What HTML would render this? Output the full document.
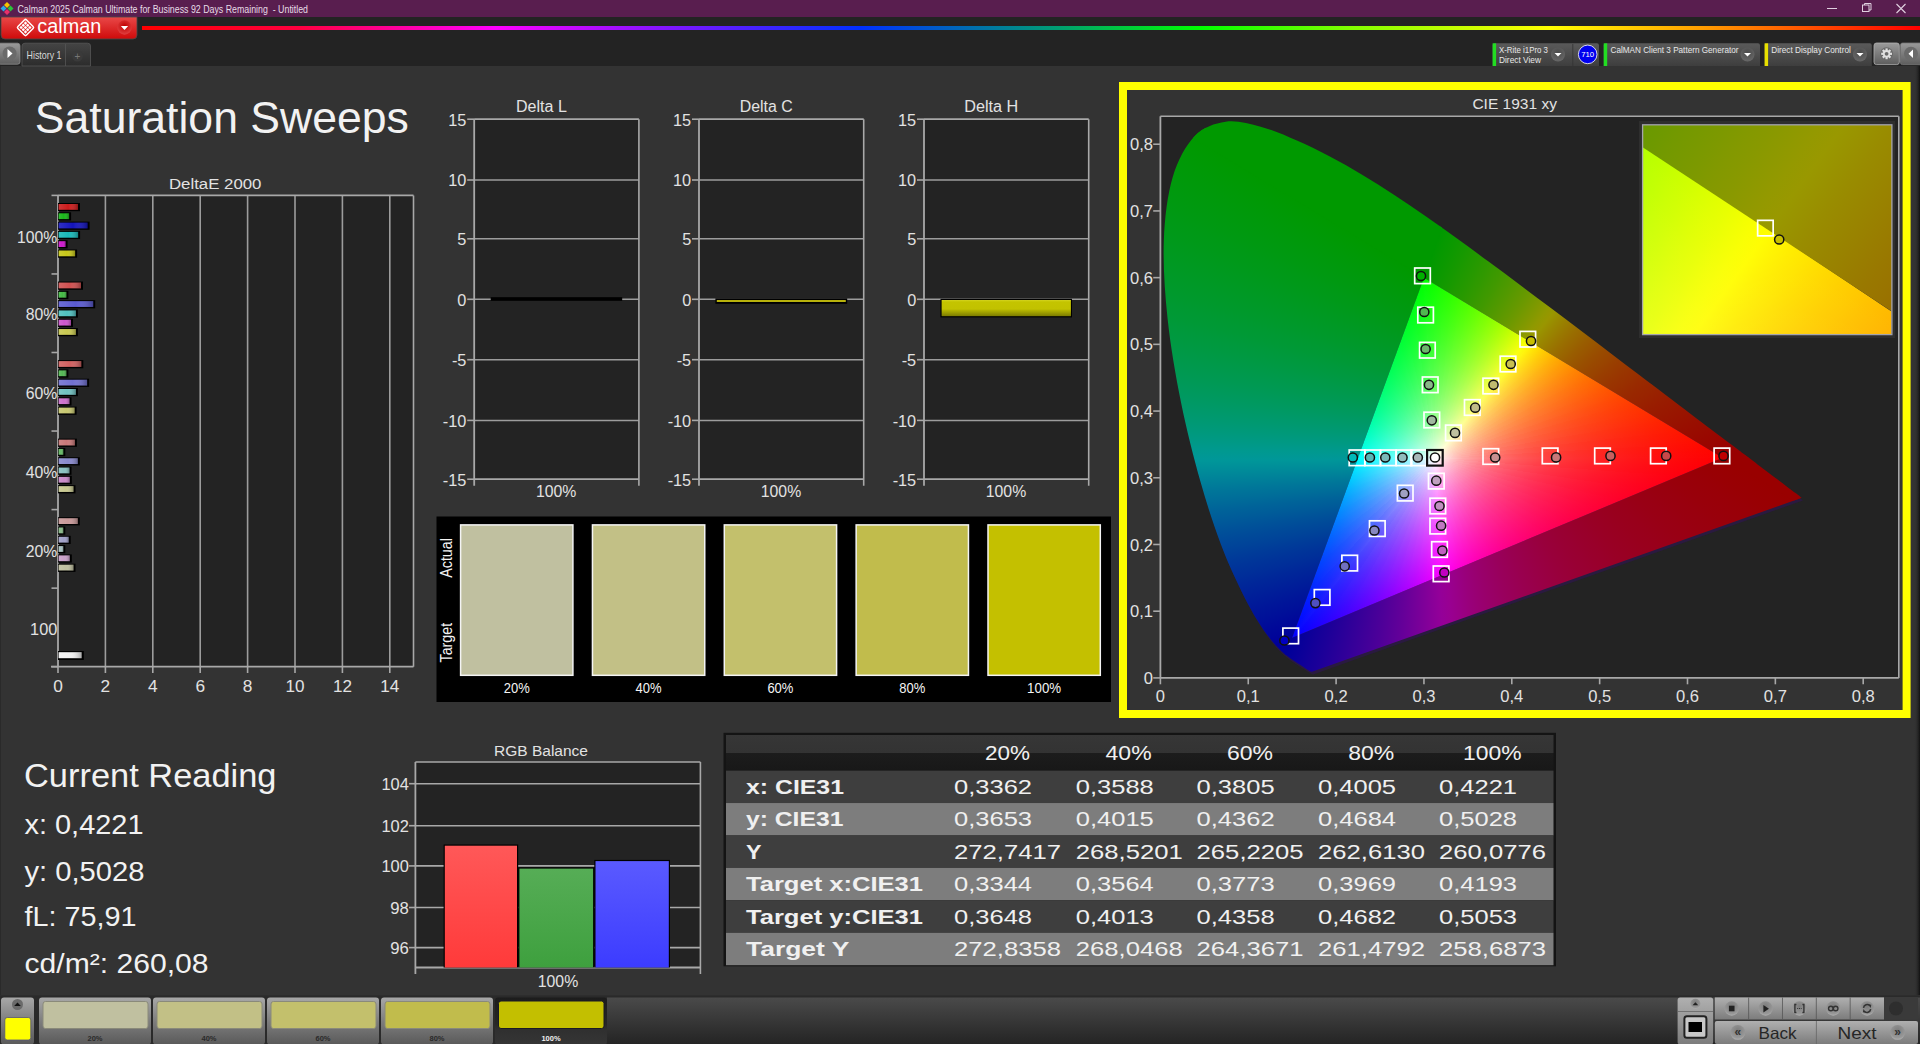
<!DOCTYPE html>
<html><head><meta charset="utf-8"><style>
html,body{margin:0;padding:0;background:#333;overflow:hidden;width:1920px;height:1044px;}
svg{display:block;font-family:"Liberation Sans", sans-serif;}
</style></head><body>
<svg width="1920" height="1044" viewBox="0 0 1920 1044">
<defs>
<linearGradient id="gRed" x1="0" y1="0" x2="0" y2="1"><stop offset="0" stop-color="#e94848"/><stop offset="1" stop-color="#cf0a0a"/></linearGradient>
<radialGradient id="gDd" cx="0.5" cy="0.4" r="0.6"><stop offset="0" stop-color="#c00000"/><stop offset="1" stop-color="#e04040"/></radialGradient>
<linearGradient id="gRain" x1="142" y1="0" x2="1920" y2="0" gradientUnits="userSpaceOnUse"><stop offset="0" stop-color="#ff0000"/><stop offset="0.089" stop-color="#ff0040"/><stop offset="0.199" stop-color="#ff00ff"/><stop offset="0.269" stop-color="#a010ff"/><stop offset="0.404" stop-color="#0030ff"/><stop offset="0.516" stop-color="#00a070"/><stop offset="0.595" stop-color="#00ff00"/><stop offset="0.679" stop-color="#80ff00"/><stop offset="0.792" stop-color="#ffff00"/><stop offset="0.876" stop-color="#ffa000"/><stop offset="1" stop-color="#ff0000"/></linearGradient>
<linearGradient id="gBtn" x1="0" y1="0" x2="0" y2="1"><stop offset="0" stop-color="#9a9a9a"/><stop offset="1" stop-color="#5e5e5e"/></linearGradient>
<linearGradient id="gTab" x1="0" y1="0" x2="0" y2="1"><stop offset="0" stop-color="#444"/><stop offset="1" stop-color="#2c2c2c"/></linearGradient>
<linearGradient id="gWid" x1="0" y1="0" x2="0" y2="1"><stop offset="0" stop-color="#5a5a5a"/><stop offset="1" stop-color="#3e3e3e"/></linearGradient>
<radialGradient id="gArr" cx="0.5" cy="0.35" r="0.7"><stop offset="0" stop-color="#4a4a4a"/><stop offset="1" stop-color="#6a6a6a"/></radialGradient>
<linearGradient id="gBarSh" x1="0" y1="0" x2="1" y2="0"><stop offset="0" stop-color="#fff" stop-opacity="0.12"/><stop offset="0.5" stop-color="#fff" stop-opacity="0"/><stop offset="1" stop-color="#000" stop-opacity="0.3"/></linearGradient>
<linearGradient id="gYelBar" x1="0" y1="0" x2="0" y2="1"><stop offset="0" stop-color="#d4d420"/><stop offset="0.12" stop-color="#c4c400"/><stop offset="0.55" stop-color="#c2c200"/><stop offset="1" stop-color="#7c7c00"/></linearGradient>
<clipPath id="cHS"><path d="M1312.03 671.82 C1311.85 671.78 1311.31 671.73 1310.97 671.62 C1310.64 671.52 1310.37 671.37 1310.01 671.17 C1309.64 670.98 1309.28 670.77 1308.78 670.47 C1308.28 670.17 1307.68 669.8 1307.02 669.38 C1306.36 668.95 1305.67 668.46 1304.83 667.9 C1303.98 667.34 1303.07 666.76 1301.93 666.04 C1300.78 665.31 1299.45 664.49 1297.97 663.53 C1296.49 662.58 1294.9 661.61 1293.05 660.32 C1291.21 659.04 1289.17 657.67 1286.9 655.83 C1284.63 653.99 1282.35 652.29 1279.44 649.28 C1276.52 646.27 1273.21 642.8 1269.42 637.79 C1265.63 632.77 1261.49 627.23 1256.68 619.17 C1251.88 611.1 1246.6 601.9 1240.61 589.38 C1234.62 576.85 1227.47 562.06 1220.75 544.01 C1214.03 525.97 1206.9 504.68 1200.28 481.11 C1193.67 457.53 1186.49 429.65 1181.04 402.59 C1175.6 375.53 1170.47 345.65 1167.6 318.73 C1164.73 291.82 1162.99 264.63 1163.83 241.08 C1164.66 217.53 1167.49 194.92 1172.61 177.44 C1177.74 159.96 1185.73 145.51 1194.57 136.21 C1203.42 126.92 1214.65 123.25 1225.67 121.67 C1236.7 120.09 1248.95 123.64 1260.72 126.74 C1272.5 129.84 1284.78 135.33 1296.3 140.28 C1307.83 145.24 1318.9 150.76 1329.86 156.49 C1340.83 162.23 1351.43 168.34 1362.1 174.71 C1372.78 181.08 1383.36 187.83 1393.91 194.72 C1404.45 201.61 1414.89 208.8 1425.36 216.07 C1435.82 223.34 1446.25 230.81 1456.72 238.35 C1467.19 245.89 1477.71 253.59 1488.17 261.3 C1498.62 269 1509.05 276.82 1519.44 284.58 C1529.84 292.34 1540.28 300.14 1550.54 307.86 C1560.81 315.58 1571.01 323.3 1581.03 330.87 C1591.04 338.45 1600.97 345.97 1610.63 353.29 C1620.29 360.61 1629.83 367.83 1639.01 374.77 C1648.19 381.71 1657.21 388.48 1665.71 394.92 C1674.22 401.35 1682.46 407.65 1690.05 413.39 C1697.63 419.14 1704.59 424.39 1711.22 429.41 C1717.85 434.42 1724.16 439.2 1729.84 443.48 C1735.52 447.76 1740.63 451.56 1745.31 455.09 C1749.98 458.61 1754.1 461.77 1757.87 464.63 C1761.63 467.49 1764.88 469.96 1767.88 472.23 C1770.88 474.5 1773.48 476.42 1775.88 478.24 C1778.28 480.05 1780.33 481.62 1782.29 483.11 C1784.25 484.6 1786.02 485.94 1787.65 487.18 C1789.27 488.41 1790.72 489.52 1792.04 490.51 C1793.36 491.5 1794.53 492.35 1795.56 493.11 C1796.58 493.88 1797.41 494.53 1798.19 495.11 C1798.97 495.7 1799.63 496.2 1800.21 496.65 C1800.8 497.09 1801.46 497.59 1801.7 497.78 Z"/></clipPath>
<linearGradient id="gLeft" x1="0" y1="120" x2="0" y2="676" gradientUnits="userSpaceOnUse"><stop offset="0" stop-color="#009900"/><stop offset="0.38" stop-color="#009a00"/><stop offset="0.47" stop-color="#00963c"/><stop offset="0.54" stop-color="#009262"/><stop offset="0.6" stop-color="#009486"/><stop offset="0.62" stop-color="#008d8d"/><stop offset="0.67" stop-color="#006c92"/><stop offset="0.73" stop-color="#004c98"/><stop offset="0.8" stop-color="#0028a0"/><stop offset="0.88" stop-color="#0010a0"/><stop offset="0.96" stop-color="#0c00a0"/><stop offset="1" stop-color="#1800a0"/></linearGradient>
<linearGradient id="gUp" x1="1423.95" y1="277.64" x2="1722.64" y2="457.76" gradientUnits="userSpaceOnUse"><stop offset="0" stop-color="#009900"/><stop offset="0.1" stop-color="#1a9800"/><stop offset="0.25" stop-color="#5a9200"/><stop offset="0.36" stop-color="#848600"/><stop offset="0.47" stop-color="#945800"/><stop offset="0.6" stop-color="#983400"/><stop offset="0.8" stop-color="#9a1000"/><stop offset="1" stop-color="#990000"/></linearGradient>
<linearGradient id="gDn" x1="1292.18" y1="637.87" x2="1722.64" y2="457.76" gradientUnits="userSpaceOnUse"><stop offset="0" stop-color="#1a009c"/><stop offset="0.2" stop-color="#4000a0"/><stop offset="0.4" stop-color="#78009a"/><stop offset="0.55" stop-color="#980078"/><stop offset="0.7" stop-color="#990040"/><stop offset="0.85" stop-color="#990018"/><stop offset="1" stop-color="#990000"/></linearGradient>
<clipPath id="cTri"><path d="M1722.64 457.76 L1423.95 277.64 L1292.18 637.87 Z"/></clipPath>
<linearGradient id="gw0" x1="1435.11" y1="458.42" x2="1512.08" y2="330.78" gradientUnits="userSpaceOnUse"><stop offset="0" stop-color="#fff" stop-opacity="1.000"/><stop offset="0.1" stop-color="#fff" stop-opacity="0.666"/><stop offset="0.2" stop-color="#fff" stop-opacity="0.469"/><stop offset="0.3" stop-color="#fff" stop-opacity="0.340"/><stop offset="0.4" stop-color="#fff" stop-opacity="0.249"/><stop offset="0.5" stop-color="#fff" stop-opacity="0.181"/><stop offset="0.6" stop-color="#fff" stop-opacity="0.129"/><stop offset="0.7" stop-color="#fff" stop-opacity="0.087"/><stop offset="0.8" stop-color="#fff" stop-opacity="0.052"/><stop offset="0.9" stop-color="#fff" stop-opacity="0.024"/><stop offset="1" stop-color="#fff" stop-opacity="0.000"/></linearGradient>
<linearGradient id="gw1" x1="1435.11" y1="458.42" x2="1512.08" y2="330.78" gradientUnits="userSpaceOnUse"><stop offset="0" stop-color="#fff" stop-opacity="1.000"/><stop offset="0.1" stop-color="#fff" stop-opacity="0.683"/><stop offset="0.2" stop-color="#fff" stop-opacity="0.489"/><stop offset="0.3" stop-color="#fff" stop-opacity="0.358"/><stop offset="0.4" stop-color="#fff" stop-opacity="0.264"/><stop offset="0.5" stop-color="#fff" stop-opacity="0.193"/><stop offset="0.6" stop-color="#fff" stop-opacity="0.138"/><stop offset="0.7" stop-color="#fff" stop-opacity="0.093"/><stop offset="0.8" stop-color="#fff" stop-opacity="0.057"/><stop offset="0.9" stop-color="#fff" stop-opacity="0.026"/><stop offset="1" stop-color="#fff" stop-opacity="0.000"/></linearGradient>
<linearGradient id="gw2" x1="1435.11" y1="458.42" x2="1512.08" y2="330.78" gradientUnits="userSpaceOnUse"><stop offset="0" stop-color="#fff" stop-opacity="1.000"/><stop offset="0.1" stop-color="#fff" stop-opacity="0.699"/><stop offset="0.2" stop-color="#fff" stop-opacity="0.508"/><stop offset="0.3" stop-color="#fff" stop-opacity="0.376"/><stop offset="0.4" stop-color="#fff" stop-opacity="0.279"/><stop offset="0.5" stop-color="#fff" stop-opacity="0.205"/><stop offset="0.6" stop-color="#fff" stop-opacity="0.147"/><stop offset="0.7" stop-color="#fff" stop-opacity="0.100"/><stop offset="0.8" stop-color="#fff" stop-opacity="0.061"/><stop offset="0.9" stop-color="#fff" stop-opacity="0.028"/><stop offset="1" stop-color="#fff" stop-opacity="0.000"/></linearGradient>
<linearGradient id="gw3" x1="1435.11" y1="458.42" x2="1512.08" y2="330.78" gradientUnits="userSpaceOnUse"><stop offset="0" stop-color="#fff" stop-opacity="1.000"/><stop offset="0.1" stop-color="#fff" stop-opacity="0.713"/><stop offset="0.2" stop-color="#fff" stop-opacity="0.525"/><stop offset="0.3" stop-color="#fff" stop-opacity="0.392"/><stop offset="0.4" stop-color="#fff" stop-opacity="0.293"/><stop offset="0.5" stop-color="#fff" stop-opacity="0.216"/><stop offset="0.6" stop-color="#fff" stop-opacity="0.156"/><stop offset="0.7" stop-color="#fff" stop-opacity="0.106"/><stop offset="0.8" stop-color="#fff" stop-opacity="0.065"/><stop offset="0.9" stop-color="#fff" stop-opacity="0.030"/><stop offset="1" stop-color="#fff" stop-opacity="0.000"/></linearGradient>
<linearGradient id="gw4" x1="1435.11" y1="458.42" x2="1512.08" y2="330.78" gradientUnits="userSpaceOnUse"><stop offset="0" stop-color="#fff" stop-opacity="1.000"/><stop offset="0.1" stop-color="#fff" stop-opacity="0.726"/><stop offset="0.2" stop-color="#fff" stop-opacity="0.541"/><stop offset="0.3" stop-color="#fff" stop-opacity="0.408"/><stop offset="0.4" stop-color="#fff" stop-opacity="0.307"/><stop offset="0.5" stop-color="#fff" stop-opacity="0.228"/><stop offset="0.6" stop-color="#fff" stop-opacity="0.164"/><stop offset="0.7" stop-color="#fff" stop-opacity="0.112"/><stop offset="0.8" stop-color="#fff" stop-opacity="0.069"/><stop offset="0.9" stop-color="#fff" stop-opacity="0.032"/><stop offset="1" stop-color="#fff" stop-opacity="0.000"/></linearGradient>
<linearGradient id="gw5" x1="1435.11" y1="458.42" x2="1512.08" y2="330.78" gradientUnits="userSpaceOnUse"><stop offset="0" stop-color="#fff" stop-opacity="1.000"/><stop offset="0.1" stop-color="#fff" stop-opacity="0.739"/><stop offset="0.2" stop-color="#fff" stop-opacity="0.557"/><stop offset="0.3" stop-color="#fff" stop-opacity="0.423"/><stop offset="0.4" stop-color="#fff" stop-opacity="0.320"/><stop offset="0.5" stop-color="#fff" stop-opacity="0.239"/><stop offset="0.6" stop-color="#fff" stop-opacity="0.173"/><stop offset="0.7" stop-color="#fff" stop-opacity="0.119"/><stop offset="0.8" stop-color="#fff" stop-opacity="0.073"/><stop offset="0.9" stop-color="#fff" stop-opacity="0.034"/><stop offset="1" stop-color="#fff" stop-opacity="0.000"/></linearGradient>
<linearGradient id="gw6" x1="1435.11" y1="458.42" x2="1512.08" y2="330.78" gradientUnits="userSpaceOnUse"><stop offset="0" stop-color="#fff" stop-opacity="1.000"/><stop offset="0.1" stop-color="#fff" stop-opacity="0.750"/><stop offset="0.2" stop-color="#fff" stop-opacity="0.572"/><stop offset="0.3" stop-color="#fff" stop-opacity="0.438"/><stop offset="0.4" stop-color="#fff" stop-opacity="0.334"/><stop offset="0.5" stop-color="#fff" stop-opacity="0.250"/><stop offset="0.6" stop-color="#fff" stop-opacity="0.182"/><stop offset="0.7" stop-color="#fff" stop-opacity="0.125"/><stop offset="0.8" stop-color="#fff" stop-opacity="0.077"/><stop offset="0.9" stop-color="#fff" stop-opacity="0.036"/><stop offset="1" stop-color="#fff" stop-opacity="0.000"/></linearGradient>
<linearGradient id="gw7" x1="1435.11" y1="458.42" x2="1512.08" y2="330.78" gradientUnits="userSpaceOnUse"><stop offset="0" stop-color="#fff" stop-opacity="1.000"/><stop offset="0.1" stop-color="#fff" stop-opacity="0.761"/><stop offset="0.2" stop-color="#fff" stop-opacity="0.586"/><stop offset="0.3" stop-color="#fff" stop-opacity="0.452"/><stop offset="0.4" stop-color="#fff" stop-opacity="0.347"/><stop offset="0.5" stop-color="#fff" stop-opacity="0.261"/><stop offset="0.6" stop-color="#fff" stop-opacity="0.191"/><stop offset="0.7" stop-color="#fff" stop-opacity="0.132"/><stop offset="0.8" stop-color="#fff" stop-opacity="0.081"/><stop offset="0.9" stop-color="#fff" stop-opacity="0.038"/><stop offset="1" stop-color="#fff" stop-opacity="0.000"/></linearGradient>
<linearGradient id="gw8" x1="1435.11" y1="458.42" x2="1512.08" y2="330.78" gradientUnits="userSpaceOnUse"><stop offset="0" stop-color="#fff" stop-opacity="1.000"/><stop offset="0.1" stop-color="#fff" stop-opacity="0.772"/><stop offset="0.2" stop-color="#fff" stop-opacity="0.600"/><stop offset="0.3" stop-color="#fff" stop-opacity="0.467"/><stop offset="0.4" stop-color="#fff" stop-opacity="0.360"/><stop offset="0.5" stop-color="#fff" stop-opacity="0.273"/><stop offset="0.6" stop-color="#fff" stop-opacity="0.200"/><stop offset="0.7" stop-color="#fff" stop-opacity="0.139"/><stop offset="0.8" stop-color="#fff" stop-opacity="0.086"/><stop offset="0.9" stop-color="#fff" stop-opacity="0.040"/><stop offset="1" stop-color="#fff" stop-opacity="0.000"/></linearGradient>
<linearGradient id="gw9" x1="1435.11" y1="458.42" x2="1512.08" y2="330.78" gradientUnits="userSpaceOnUse"><stop offset="0" stop-color="#fff" stop-opacity="1.000"/><stop offset="0.1" stop-color="#fff" stop-opacity="0.782"/><stop offset="0.2" stop-color="#fff" stop-opacity="0.614"/><stop offset="0.3" stop-color="#fff" stop-opacity="0.481"/><stop offset="0.4" stop-color="#fff" stop-opacity="0.373"/><stop offset="0.5" stop-color="#fff" stop-opacity="0.284"/><stop offset="0.6" stop-color="#fff" stop-opacity="0.209"/><stop offset="0.7" stop-color="#fff" stop-opacity="0.145"/><stop offset="0.8" stop-color="#fff" stop-opacity="0.090"/><stop offset="0.9" stop-color="#fff" stop-opacity="0.042"/><stop offset="1" stop-color="#fff" stop-opacity="0.000"/></linearGradient>
<linearGradient id="gw10" x1="1435.11" y1="458.42" x2="1512.08" y2="330.78" gradientUnits="userSpaceOnUse"><stop offset="0" stop-color="#fff" stop-opacity="1.000"/><stop offset="0.1" stop-color="#fff" stop-opacity="0.791"/><stop offset="0.2" stop-color="#fff" stop-opacity="0.627"/><stop offset="0.3" stop-color="#fff" stop-opacity="0.495"/><stop offset="0.4" stop-color="#fff" stop-opacity="0.387"/><stop offset="0.5" stop-color="#fff" stop-opacity="0.296"/><stop offset="0.6" stop-color="#fff" stop-opacity="0.219"/><stop offset="0.7" stop-color="#fff" stop-opacity="0.153"/><stop offset="0.8" stop-color="#fff" stop-opacity="0.095"/><stop offset="0.9" stop-color="#fff" stop-opacity="0.045"/><stop offset="1" stop-color="#fff" stop-opacity="0.000"/></linearGradient>
<linearGradient id="gw11" x1="1435.11" y1="458.42" x2="1512.08" y2="330.78" gradientUnits="userSpaceOnUse"><stop offset="0" stop-color="#fff" stop-opacity="1.000"/><stop offset="0.1" stop-color="#fff" stop-opacity="0.800"/><stop offset="0.2" stop-color="#fff" stop-opacity="0.641"/><stop offset="0.3" stop-color="#fff" stop-opacity="0.510"/><stop offset="0.4" stop-color="#fff" stop-opacity="0.400"/><stop offset="0.5" stop-color="#fff" stop-opacity="0.308"/><stop offset="0.6" stop-color="#fff" stop-opacity="0.229"/><stop offset="0.7" stop-color="#fff" stop-opacity="0.160"/><stop offset="0.8" stop-color="#fff" stop-opacity="0.100"/><stop offset="0.9" stop-color="#fff" stop-opacity="0.047"/><stop offset="1" stop-color="#fff" stop-opacity="0.000"/></linearGradient>
<linearGradient id="gw12" x1="1435.11" y1="458.42" x2="1512.08" y2="330.78" gradientUnits="userSpaceOnUse"><stop offset="0" stop-color="#fff" stop-opacity="1.000"/><stop offset="0.1" stop-color="#fff" stop-opacity="0.810"/><stop offset="0.2" stop-color="#fff" stop-opacity="0.654"/><stop offset="0.3" stop-color="#fff" stop-opacity="0.524"/><stop offset="0.4" stop-color="#fff" stop-opacity="0.414"/><stop offset="0.5" stop-color="#fff" stop-opacity="0.321"/><stop offset="0.6" stop-color="#fff" stop-opacity="0.239"/><stop offset="0.7" stop-color="#fff" stop-opacity="0.168"/><stop offset="0.8" stop-color="#fff" stop-opacity="0.106"/><stop offset="0.9" stop-color="#fff" stop-opacity="0.050"/><stop offset="1" stop-color="#fff" stop-opacity="0.000"/></linearGradient>
<linearGradient id="gw13" x1="1435.11" y1="458.42" x2="1512.08" y2="330.78" gradientUnits="userSpaceOnUse"><stop offset="0" stop-color="#fff" stop-opacity="1.000"/><stop offset="0.1" stop-color="#fff" stop-opacity="0.818"/><stop offset="0.2" stop-color="#fff" stop-opacity="0.667"/><stop offset="0.3" stop-color="#fff" stop-opacity="0.539"/><stop offset="0.4" stop-color="#fff" stop-opacity="0.429"/><stop offset="0.5" stop-color="#fff" stop-opacity="0.334"/><stop offset="0.6" stop-color="#fff" stop-opacity="0.250"/><stop offset="0.7" stop-color="#fff" stop-opacity="0.177"/><stop offset="0.8" stop-color="#fff" stop-opacity="0.111"/><stop offset="0.9" stop-color="#fff" stop-opacity="0.053"/><stop offset="1" stop-color="#fff" stop-opacity="0.000"/></linearGradient>
<linearGradient id="gw14" x1="1435.11" y1="458.42" x2="1512.08" y2="330.78" gradientUnits="userSpaceOnUse"><stop offset="0" stop-color="#fff" stop-opacity="1.000"/><stop offset="0.1" stop-color="#fff" stop-opacity="0.827"/><stop offset="0.2" stop-color="#fff" stop-opacity="0.680"/><stop offset="0.3" stop-color="#fff" stop-opacity="0.554"/><stop offset="0.4" stop-color="#fff" stop-opacity="0.444"/><stop offset="0.5" stop-color="#fff" stop-opacity="0.347"/><stop offset="0.6" stop-color="#fff" stop-opacity="0.262"/><stop offset="0.7" stop-color="#fff" stop-opacity="0.186"/><stop offset="0.8" stop-color="#fff" stop-opacity="0.117"/><stop offset="0.9" stop-color="#fff" stop-opacity="0.056"/><stop offset="1" stop-color="#fff" stop-opacity="0.000"/></linearGradient>
<linearGradient id="gw15" x1="1435.11" y1="458.42" x2="1512.08" y2="330.78" gradientUnits="userSpaceOnUse"><stop offset="0" stop-color="#fff" stop-opacity="1.000"/><stop offset="0.1" stop-color="#fff" stop-opacity="0.836"/><stop offset="0.2" stop-color="#fff" stop-opacity="0.694"/><stop offset="0.3" stop-color="#fff" stop-opacity="0.569"/><stop offset="0.4" stop-color="#fff" stop-opacity="0.459"/><stop offset="0.5" stop-color="#fff" stop-opacity="0.362"/><stop offset="0.6" stop-color="#fff" stop-opacity="0.274"/><stop offset="0.7" stop-color="#fff" stop-opacity="0.195"/><stop offset="0.8" stop-color="#fff" stop-opacity="0.124"/><stop offset="0.9" stop-color="#fff" stop-opacity="0.059"/><stop offset="1" stop-color="#fff" stop-opacity="0.000"/></linearGradient>
<linearGradient id="gw16" x1="1435.11" y1="458.42" x2="1512.08" y2="330.78" gradientUnits="userSpaceOnUse"><stop offset="0" stop-color="#fff" stop-opacity="1.000"/><stop offset="0.1" stop-color="#fff" stop-opacity="0.845"/><stop offset="0.2" stop-color="#fff" stop-opacity="0.707"/><stop offset="0.3" stop-color="#fff" stop-opacity="0.585"/><stop offset="0.4" stop-color="#fff" stop-opacity="0.475"/><stop offset="0.5" stop-color="#fff" stop-opacity="0.377"/><stop offset="0.6" stop-color="#fff" stop-opacity="0.287"/><stop offset="0.7" stop-color="#fff" stop-opacity="0.206"/><stop offset="0.8" stop-color="#fff" stop-opacity="0.131"/><stop offset="0.9" stop-color="#fff" stop-opacity="0.063"/><stop offset="1" stop-color="#fff" stop-opacity="0.000"/></linearGradient>
<linearGradient id="gw17" x1="1435.11" y1="458.42" x2="1512.08" y2="330.78" gradientUnits="userSpaceOnUse"><stop offset="0" stop-color="#fff" stop-opacity="1.000"/><stop offset="0.1" stop-color="#fff" stop-opacity="0.840"/><stop offset="0.2" stop-color="#fff" stop-opacity="0.700"/><stop offset="0.3" stop-color="#fff" stop-opacity="0.576"/><stop offset="0.4" stop-color="#fff" stop-opacity="0.466"/><stop offset="0.5" stop-color="#fff" stop-opacity="0.368"/><stop offset="0.6" stop-color="#fff" stop-opacity="0.280"/><stop offset="0.7" stop-color="#fff" stop-opacity="0.200"/><stop offset="0.8" stop-color="#fff" stop-opacity="0.127"/><stop offset="0.9" stop-color="#fff" stop-opacity="0.061"/><stop offset="1" stop-color="#fff" stop-opacity="0.000"/></linearGradient>
<linearGradient id="gw18" x1="1435.11" y1="458.42" x2="1512.08" y2="330.78" gradientUnits="userSpaceOnUse"><stop offset="0" stop-color="#fff" stop-opacity="1.000"/><stop offset="0.1" stop-color="#fff" stop-opacity="0.835"/><stop offset="0.2" stop-color="#fff" stop-opacity="0.693"/><stop offset="0.3" stop-color="#fff" stop-opacity="0.568"/><stop offset="0.4" stop-color="#fff" stop-opacity="0.458"/><stop offset="0.5" stop-color="#fff" stop-opacity="0.360"/><stop offset="0.6" stop-color="#fff" stop-opacity="0.273"/><stop offset="0.7" stop-color="#fff" stop-opacity="0.194"/><stop offset="0.8" stop-color="#fff" stop-opacity="0.123"/><stop offset="0.9" stop-color="#fff" stop-opacity="0.059"/><stop offset="1" stop-color="#fff" stop-opacity="0.000"/></linearGradient>
<linearGradient id="gw19" x1="1435.11" y1="458.42" x2="1512.08" y2="330.78" gradientUnits="userSpaceOnUse"><stop offset="0" stop-color="#fff" stop-opacity="1.000"/><stop offset="0.1" stop-color="#fff" stop-opacity="0.831"/><stop offset="0.2" stop-color="#fff" stop-opacity="0.686"/><stop offset="0.3" stop-color="#fff" stop-opacity="0.560"/><stop offset="0.4" stop-color="#fff" stop-opacity="0.450"/><stop offset="0.5" stop-color="#fff" stop-opacity="0.353"/><stop offset="0.6" stop-color="#fff" stop-opacity="0.267"/><stop offset="0.7" stop-color="#fff" stop-opacity="0.189"/><stop offset="0.8" stop-color="#fff" stop-opacity="0.120"/><stop offset="0.9" stop-color="#fff" stop-opacity="0.057"/><stop offset="1" stop-color="#fff" stop-opacity="0.000"/></linearGradient>
<linearGradient id="gw20" x1="1435.11" y1="458.42" x2="1512.08" y2="330.78" gradientUnits="userSpaceOnUse"><stop offset="0" stop-color="#fff" stop-opacity="1.000"/><stop offset="0.1" stop-color="#fff" stop-opacity="0.826"/><stop offset="0.2" stop-color="#fff" stop-opacity="0.679"/><stop offset="0.3" stop-color="#fff" stop-opacity="0.552"/><stop offset="0.4" stop-color="#fff" stop-opacity="0.442"/><stop offset="0.5" stop-color="#fff" stop-opacity="0.346"/><stop offset="0.6" stop-color="#fff" stop-opacity="0.260"/><stop offset="0.7" stop-color="#fff" stop-opacity="0.185"/><stop offset="0.8" stop-color="#fff" stop-opacity="0.117"/><stop offset="0.9" stop-color="#fff" stop-opacity="0.055"/><stop offset="1" stop-color="#fff" stop-opacity="0.000"/></linearGradient>
<linearGradient id="gw21" x1="1435.11" y1="458.42" x2="1512.08" y2="330.78" gradientUnits="userSpaceOnUse"><stop offset="0" stop-color="#fff" stop-opacity="1.000"/><stop offset="0.1" stop-color="#fff" stop-opacity="0.822"/><stop offset="0.2" stop-color="#fff" stop-opacity="0.672"/><stop offset="0.3" stop-color="#fff" stop-opacity="0.544"/><stop offset="0.4" stop-color="#fff" stop-opacity="0.434"/><stop offset="0.5" stop-color="#fff" stop-opacity="0.339"/><stop offset="0.6" stop-color="#fff" stop-opacity="0.254"/><stop offset="0.7" stop-color="#fff" stop-opacity="0.180"/><stop offset="0.8" stop-color="#fff" stop-opacity="0.113"/><stop offset="0.9" stop-color="#fff" stop-opacity="0.054"/><stop offset="1" stop-color="#fff" stop-opacity="0.000"/></linearGradient>
<linearGradient id="gw22" x1="1435.11" y1="458.42" x2="1512.08" y2="330.78" gradientUnits="userSpaceOnUse"><stop offset="0" stop-color="#fff" stop-opacity="1.000"/><stop offset="0.1" stop-color="#fff" stop-opacity="0.817"/><stop offset="0.2" stop-color="#fff" stop-opacity="0.665"/><stop offset="0.3" stop-color="#fff" stop-opacity="0.537"/><stop offset="0.4" stop-color="#fff" stop-opacity="0.427"/><stop offset="0.5" stop-color="#fff" stop-opacity="0.332"/><stop offset="0.6" stop-color="#fff" stop-opacity="0.249"/><stop offset="0.7" stop-color="#fff" stop-opacity="0.175"/><stop offset="0.8" stop-color="#fff" stop-opacity="0.110"/><stop offset="0.9" stop-color="#fff" stop-opacity="0.052"/><stop offset="1" stop-color="#fff" stop-opacity="0.000"/></linearGradient>
<linearGradient id="gw23" x1="1435.11" y1="458.42" x2="1512.08" y2="330.78" gradientUnits="userSpaceOnUse"><stop offset="0" stop-color="#fff" stop-opacity="1.000"/><stop offset="0.1" stop-color="#fff" stop-opacity="0.812"/><stop offset="0.2" stop-color="#fff" stop-opacity="0.658"/><stop offset="0.3" stop-color="#fff" stop-opacity="0.529"/><stop offset="0.4" stop-color="#fff" stop-opacity="0.419"/><stop offset="0.5" stop-color="#fff" stop-opacity="0.325"/><stop offset="0.6" stop-color="#fff" stop-opacity="0.243"/><stop offset="0.7" stop-color="#fff" stop-opacity="0.171"/><stop offset="0.8" stop-color="#fff" stop-opacity="0.107"/><stop offset="0.9" stop-color="#fff" stop-opacity="0.051"/><stop offset="1" stop-color="#fff" stop-opacity="0.000"/></linearGradient>
<linearGradient id="gw24" x1="1435.11" y1="458.42" x2="1512.08" y2="330.78" gradientUnits="userSpaceOnUse"><stop offset="0" stop-color="#fff" stop-opacity="1.000"/><stop offset="0.1" stop-color="#fff" stop-opacity="0.808"/><stop offset="0.2" stop-color="#fff" stop-opacity="0.651"/><stop offset="0.3" stop-color="#fff" stop-opacity="0.521"/><stop offset="0.4" stop-color="#fff" stop-opacity="0.412"/><stop offset="0.5" stop-color="#fff" stop-opacity="0.318"/><stop offset="0.6" stop-color="#fff" stop-opacity="0.237"/><stop offset="0.7" stop-color="#fff" stop-opacity="0.167"/><stop offset="0.8" stop-color="#fff" stop-opacity="0.105"/><stop offset="0.9" stop-color="#fff" stop-opacity="0.049"/><stop offset="1" stop-color="#fff" stop-opacity="0.000"/></linearGradient>
<linearGradient id="gw25" x1="1435.11" y1="458.42" x2="1512.08" y2="330.78" gradientUnits="userSpaceOnUse"><stop offset="0" stop-color="#fff" stop-opacity="1.000"/><stop offset="0.1" stop-color="#fff" stop-opacity="0.803"/><stop offset="0.2" stop-color="#fff" stop-opacity="0.644"/><stop offset="0.3" stop-color="#fff" stop-opacity="0.514"/><stop offset="0.4" stop-color="#fff" stop-opacity="0.405"/><stop offset="0.5" stop-color="#fff" stop-opacity="0.312"/><stop offset="0.6" stop-color="#fff" stop-opacity="0.232"/><stop offset="0.7" stop-color="#fff" stop-opacity="0.163"/><stop offset="0.8" stop-color="#fff" stop-opacity="0.102"/><stop offset="0.9" stop-color="#fff" stop-opacity="0.048"/><stop offset="1" stop-color="#fff" stop-opacity="0.000"/></linearGradient>
<linearGradient id="gw26" x1="1435.11" y1="458.42" x2="1512.08" y2="330.78" gradientUnits="userSpaceOnUse"><stop offset="0" stop-color="#fff" stop-opacity="1.000"/><stop offset="0.1" stop-color="#fff" stop-opacity="0.798"/><stop offset="0.2" stop-color="#fff" stop-opacity="0.637"/><stop offset="0.3" stop-color="#fff" stop-opacity="0.506"/><stop offset="0.4" stop-color="#fff" stop-opacity="0.397"/><stop offset="0.5" stop-color="#fff" stop-opacity="0.305"/><stop offset="0.6" stop-color="#fff" stop-opacity="0.227"/><stop offset="0.7" stop-color="#fff" stop-opacity="0.158"/><stop offset="0.8" stop-color="#fff" stop-opacity="0.099"/><stop offset="0.9" stop-color="#fff" stop-opacity="0.047"/><stop offset="1" stop-color="#fff" stop-opacity="0.000"/></linearGradient>
<linearGradient id="gw27" x1="1435.11" y1="458.42" x2="1512.08" y2="330.78" gradientUnits="userSpaceOnUse"><stop offset="0" stop-color="#fff" stop-opacity="1.000"/><stop offset="0.1" stop-color="#fff" stop-opacity="0.793"/><stop offset="0.2" stop-color="#fff" stop-opacity="0.630"/><stop offset="0.3" stop-color="#fff" stop-opacity="0.498"/><stop offset="0.4" stop-color="#fff" stop-opacity="0.390"/><stop offset="0.5" stop-color="#fff" stop-opacity="0.299"/><stop offset="0.6" stop-color="#fff" stop-opacity="0.221"/><stop offset="0.7" stop-color="#fff" stop-opacity="0.154"/><stop offset="0.8" stop-color="#fff" stop-opacity="0.096"/><stop offset="0.9" stop-color="#fff" stop-opacity="0.045"/><stop offset="1" stop-color="#fff" stop-opacity="0.000"/></linearGradient>
<linearGradient id="gw28" x1="1435.11" y1="458.42" x2="1512.08" y2="330.78" gradientUnits="userSpaceOnUse"><stop offset="0" stop-color="#fff" stop-opacity="1.000"/><stop offset="0.1" stop-color="#fff" stop-opacity="0.788"/><stop offset="0.2" stop-color="#fff" stop-opacity="0.623"/><stop offset="0.3" stop-color="#fff" stop-opacity="0.490"/><stop offset="0.4" stop-color="#fff" stop-opacity="0.382"/><stop offset="0.5" stop-color="#fff" stop-opacity="0.292"/><stop offset="0.6" stop-color="#fff" stop-opacity="0.216"/><stop offset="0.7" stop-color="#fff" stop-opacity="0.150"/><stop offset="0.8" stop-color="#fff" stop-opacity="0.093"/><stop offset="0.9" stop-color="#fff" stop-opacity="0.044"/><stop offset="1" stop-color="#fff" stop-opacity="0.000"/></linearGradient>
<linearGradient id="gw29" x1="1435.11" y1="458.42" x2="1512.08" y2="330.78" gradientUnits="userSpaceOnUse"><stop offset="0" stop-color="#fff" stop-opacity="1.000"/><stop offset="0.1" stop-color="#fff" stop-opacity="0.782"/><stop offset="0.2" stop-color="#fff" stop-opacity="0.615"/><stop offset="0.3" stop-color="#fff" stop-opacity="0.482"/><stop offset="0.4" stop-color="#fff" stop-opacity="0.374"/><stop offset="0.5" stop-color="#fff" stop-opacity="0.285"/><stop offset="0.6" stop-color="#fff" stop-opacity="0.210"/><stop offset="0.7" stop-color="#fff" stop-opacity="0.146"/><stop offset="0.8" stop-color="#fff" stop-opacity="0.091"/><stop offset="0.9" stop-color="#fff" stop-opacity="0.042"/><stop offset="1" stop-color="#fff" stop-opacity="0.000"/></linearGradient>
<linearGradient id="gw30" x1="1435.11" y1="458.42" x2="1366.94" y2="433.49" gradientUnits="userSpaceOnUse"><stop offset="0" stop-color="#fff" stop-opacity="1.000"/><stop offset="0.1" stop-color="#fff" stop-opacity="0.787"/><stop offset="0.2" stop-color="#fff" stop-opacity="0.621"/><stop offset="0.3" stop-color="#fff" stop-opacity="0.489"/><stop offset="0.4" stop-color="#fff" stop-opacity="0.381"/><stop offset="0.5" stop-color="#fff" stop-opacity="0.291"/><stop offset="0.6" stop-color="#fff" stop-opacity="0.215"/><stop offset="0.7" stop-color="#fff" stop-opacity="0.149"/><stop offset="0.8" stop-color="#fff" stop-opacity="0.093"/><stop offset="0.9" stop-color="#fff" stop-opacity="0.044"/><stop offset="1" stop-color="#fff" stop-opacity="0.000"/></linearGradient>
<linearGradient id="gw31" x1="1435.11" y1="458.42" x2="1366.94" y2="433.49" gradientUnits="userSpaceOnUse"><stop offset="0" stop-color="#fff" stop-opacity="1.000"/><stop offset="0.1" stop-color="#fff" stop-opacity="0.799"/><stop offset="0.2" stop-color="#fff" stop-opacity="0.638"/><stop offset="0.3" stop-color="#fff" stop-opacity="0.507"/><stop offset="0.4" stop-color="#fff" stop-opacity="0.398"/><stop offset="0.5" stop-color="#fff" stop-opacity="0.306"/><stop offset="0.6" stop-color="#fff" stop-opacity="0.227"/><stop offset="0.7" stop-color="#fff" stop-opacity="0.159"/><stop offset="0.8" stop-color="#fff" stop-opacity="0.099"/><stop offset="0.9" stop-color="#fff" stop-opacity="0.047"/><stop offset="1" stop-color="#fff" stop-opacity="0.000"/></linearGradient>
<linearGradient id="gw32" x1="1435.11" y1="458.42" x2="1366.94" y2="433.49" gradientUnits="userSpaceOnUse"><stop offset="0" stop-color="#fff" stop-opacity="1.000"/><stop offset="0.1" stop-color="#fff" stop-opacity="0.808"/><stop offset="0.2" stop-color="#fff" stop-opacity="0.652"/><stop offset="0.3" stop-color="#fff" stop-opacity="0.522"/><stop offset="0.4" stop-color="#fff" stop-opacity="0.413"/><stop offset="0.5" stop-color="#fff" stop-opacity="0.319"/><stop offset="0.6" stop-color="#fff" stop-opacity="0.238"/><stop offset="0.7" stop-color="#fff" stop-opacity="0.167"/><stop offset="0.8" stop-color="#fff" stop-opacity="0.105"/><stop offset="0.9" stop-color="#fff" stop-opacity="0.049"/><stop offset="1" stop-color="#fff" stop-opacity="0.000"/></linearGradient>
<linearGradient id="gw33" x1="1435.11" y1="458.42" x2="1366.94" y2="433.49" gradientUnits="userSpaceOnUse"><stop offset="0" stop-color="#fff" stop-opacity="1.000"/><stop offset="0.1" stop-color="#fff" stop-opacity="0.816"/><stop offset="0.2" stop-color="#fff" stop-opacity="0.663"/><stop offset="0.3" stop-color="#fff" stop-opacity="0.535"/><stop offset="0.4" stop-color="#fff" stop-opacity="0.425"/><stop offset="0.5" stop-color="#fff" stop-opacity="0.330"/><stop offset="0.6" stop-color="#fff" stop-opacity="0.247"/><stop offset="0.7" stop-color="#fff" stop-opacity="0.174"/><stop offset="0.8" stop-color="#fff" stop-opacity="0.110"/><stop offset="0.9" stop-color="#fff" stop-opacity="0.052"/><stop offset="1" stop-color="#fff" stop-opacity="0.000"/></linearGradient>
<linearGradient id="gw34" x1="1435.11" y1="458.42" x2="1366.94" y2="433.49" gradientUnits="userSpaceOnUse"><stop offset="0" stop-color="#fff" stop-opacity="1.000"/><stop offset="0.1" stop-color="#fff" stop-opacity="0.822"/><stop offset="0.2" stop-color="#fff" stop-opacity="0.673"/><stop offset="0.3" stop-color="#fff" stop-opacity="0.546"/><stop offset="0.4" stop-color="#fff" stop-opacity="0.436"/><stop offset="0.5" stop-color="#fff" stop-opacity="0.340"/><stop offset="0.6" stop-color="#fff" stop-opacity="0.256"/><stop offset="0.7" stop-color="#fff" stop-opacity="0.181"/><stop offset="0.8" stop-color="#fff" stop-opacity="0.114"/><stop offset="0.9" stop-color="#fff" stop-opacity="0.054"/><stop offset="1" stop-color="#fff" stop-opacity="0.000"/></linearGradient>
<linearGradient id="gw35" x1="1435.11" y1="458.42" x2="1366.94" y2="433.49" gradientUnits="userSpaceOnUse"><stop offset="0" stop-color="#fff" stop-opacity="1.000"/><stop offset="0.1" stop-color="#fff" stop-opacity="0.828"/><stop offset="0.2" stop-color="#fff" stop-opacity="0.682"/><stop offset="0.3" stop-color="#fff" stop-opacity="0.555"/><stop offset="0.4" stop-color="#fff" stop-opacity="0.445"/><stop offset="0.5" stop-color="#fff" stop-opacity="0.349"/><stop offset="0.6" stop-color="#fff" stop-opacity="0.263"/><stop offset="0.7" stop-color="#fff" stop-opacity="0.187"/><stop offset="0.8" stop-color="#fff" stop-opacity="0.118"/><stop offset="0.9" stop-color="#fff" stop-opacity="0.056"/><stop offset="1" stop-color="#fff" stop-opacity="0.000"/></linearGradient>
<linearGradient id="gw36" x1="1435.11" y1="458.42" x2="1366.94" y2="433.49" gradientUnits="userSpaceOnUse"><stop offset="0" stop-color="#fff" stop-opacity="1.000"/><stop offset="0.1" stop-color="#fff" stop-opacity="0.833"/><stop offset="0.2" stop-color="#fff" stop-opacity="0.689"/><stop offset="0.3" stop-color="#fff" stop-opacity="0.564"/><stop offset="0.4" stop-color="#fff" stop-opacity="0.454"/><stop offset="0.5" stop-color="#fff" stop-opacity="0.357"/><stop offset="0.6" stop-color="#fff" stop-opacity="0.270"/><stop offset="0.7" stop-color="#fff" stop-opacity="0.192"/><stop offset="0.8" stop-color="#fff" stop-opacity="0.122"/><stop offset="0.9" stop-color="#fff" stop-opacity="0.058"/><stop offset="1" stop-color="#fff" stop-opacity="0.000"/></linearGradient>
<linearGradient id="gw37" x1="1435.11" y1="458.42" x2="1366.94" y2="433.49" gradientUnits="userSpaceOnUse"><stop offset="0" stop-color="#fff" stop-opacity="1.000"/><stop offset="0.1" stop-color="#fff" stop-opacity="0.837"/><stop offset="0.2" stop-color="#fff" stop-opacity="0.696"/><stop offset="0.3" stop-color="#fff" stop-opacity="0.572"/><stop offset="0.4" stop-color="#fff" stop-opacity="0.462"/><stop offset="0.5" stop-color="#fff" stop-opacity="0.364"/><stop offset="0.6" stop-color="#fff" stop-opacity="0.276"/><stop offset="0.7" stop-color="#fff" stop-opacity="0.197"/><stop offset="0.8" stop-color="#fff" stop-opacity="0.125"/><stop offset="0.9" stop-color="#fff" stop-opacity="0.060"/><stop offset="1" stop-color="#fff" stop-opacity="0.000"/></linearGradient>
<linearGradient id="gw38" x1="1435.11" y1="458.42" x2="1366.94" y2="433.49" gradientUnits="userSpaceOnUse"><stop offset="0" stop-color="#fff" stop-opacity="1.000"/><stop offset="0.1" stop-color="#fff" stop-opacity="0.841"/><stop offset="0.2" stop-color="#fff" stop-opacity="0.702"/><stop offset="0.3" stop-color="#fff" stop-opacity="0.579"/><stop offset="0.4" stop-color="#fff" stop-opacity="0.469"/><stop offset="0.5" stop-color="#fff" stop-opacity="0.371"/><stop offset="0.6" stop-color="#fff" stop-opacity="0.282"/><stop offset="0.7" stop-color="#fff" stop-opacity="0.202"/><stop offset="0.8" stop-color="#fff" stop-opacity="0.128"/><stop offset="0.9" stop-color="#fff" stop-opacity="0.061"/><stop offset="1" stop-color="#fff" stop-opacity="0.000"/></linearGradient>
<linearGradient id="gw39" x1="1435.11" y1="458.42" x2="1366.94" y2="433.49" gradientUnits="userSpaceOnUse"><stop offset="0" stop-color="#fff" stop-opacity="1.000"/><stop offset="0.1" stop-color="#fff" stop-opacity="0.845"/><stop offset="0.2" stop-color="#fff" stop-opacity="0.708"/><stop offset="0.3" stop-color="#fff" stop-opacity="0.586"/><stop offset="0.4" stop-color="#fff" stop-opacity="0.476"/><stop offset="0.5" stop-color="#fff" stop-opacity="0.377"/><stop offset="0.6" stop-color="#fff" stop-opacity="0.288"/><stop offset="0.7" stop-color="#fff" stop-opacity="0.206"/><stop offset="0.8" stop-color="#fff" stop-opacity="0.132"/><stop offset="0.9" stop-color="#fff" stop-opacity="0.063"/><stop offset="1" stop-color="#fff" stop-opacity="0.000"/></linearGradient>
<linearGradient id="gw40" x1="1435.11" y1="458.42" x2="1366.94" y2="433.49" gradientUnits="userSpaceOnUse"><stop offset="0" stop-color="#fff" stop-opacity="1.000"/><stop offset="0.1" stop-color="#fff" stop-opacity="0.848"/><stop offset="0.2" stop-color="#fff" stop-opacity="0.714"/><stop offset="0.3" stop-color="#fff" stop-opacity="0.592"/><stop offset="0.4" stop-color="#fff" stop-opacity="0.483"/><stop offset="0.5" stop-color="#fff" stop-opacity="0.384"/><stop offset="0.6" stop-color="#fff" stop-opacity="0.293"/><stop offset="0.7" stop-color="#fff" stop-opacity="0.211"/><stop offset="0.8" stop-color="#fff" stop-opacity="0.135"/><stop offset="0.9" stop-color="#fff" stop-opacity="0.065"/><stop offset="1" stop-color="#fff" stop-opacity="0.000"/></linearGradient>
<linearGradient id="gw41" x1="1435.11" y1="458.42" x2="1366.94" y2="433.49" gradientUnits="userSpaceOnUse"><stop offset="0" stop-color="#fff" stop-opacity="1.000"/><stop offset="0.1" stop-color="#fff" stop-opacity="0.852"/><stop offset="0.2" stop-color="#fff" stop-opacity="0.719"/><stop offset="0.3" stop-color="#fff" stop-opacity="0.599"/><stop offset="0.4" stop-color="#fff" stop-opacity="0.490"/><stop offset="0.5" stop-color="#fff" stop-opacity="0.390"/><stop offset="0.6" stop-color="#fff" stop-opacity="0.299"/><stop offset="0.7" stop-color="#fff" stop-opacity="0.215"/><stop offset="0.8" stop-color="#fff" stop-opacity="0.138"/><stop offset="0.9" stop-color="#fff" stop-opacity="0.066"/><stop offset="1" stop-color="#fff" stop-opacity="0.000"/></linearGradient>
<linearGradient id="gw42" x1="1435.11" y1="458.42" x2="1366.94" y2="433.49" gradientUnits="userSpaceOnUse"><stop offset="0" stop-color="#fff" stop-opacity="1.000"/><stop offset="0.1" stop-color="#fff" stop-opacity="0.855"/><stop offset="0.2" stop-color="#fff" stop-opacity="0.724"/><stop offset="0.3" stop-color="#fff" stop-opacity="0.605"/><stop offset="0.4" stop-color="#fff" stop-opacity="0.496"/><stop offset="0.5" stop-color="#fff" stop-opacity="0.396"/><stop offset="0.6" stop-color="#fff" stop-opacity="0.304"/><stop offset="0.7" stop-color="#fff" stop-opacity="0.220"/><stop offset="0.8" stop-color="#fff" stop-opacity="0.141"/><stop offset="0.9" stop-color="#fff" stop-opacity="0.068"/><stop offset="1" stop-color="#fff" stop-opacity="0.000"/></linearGradient>
<linearGradient id="gw43" x1="1435.11" y1="458.42" x2="1366.94" y2="433.49" gradientUnits="userSpaceOnUse"><stop offset="0" stop-color="#fff" stop-opacity="1.000"/><stop offset="0.1" stop-color="#fff" stop-opacity="0.858"/><stop offset="0.2" stop-color="#fff" stop-opacity="0.729"/><stop offset="0.3" stop-color="#fff" stop-opacity="0.611"/><stop offset="0.4" stop-color="#fff" stop-opacity="0.503"/><stop offset="0.5" stop-color="#fff" stop-opacity="0.403"/><stop offset="0.6" stop-color="#fff" stop-opacity="0.310"/><stop offset="0.7" stop-color="#fff" stop-opacity="0.224"/><stop offset="0.8" stop-color="#fff" stop-opacity="0.144"/><stop offset="0.9" stop-color="#fff" stop-opacity="0.070"/><stop offset="1" stop-color="#fff" stop-opacity="0.000"/></linearGradient>
<linearGradient id="gw44" x1="1435.11" y1="458.42" x2="1366.94" y2="433.49" gradientUnits="userSpaceOnUse"><stop offset="0" stop-color="#fff" stop-opacity="1.000"/><stop offset="0.1" stop-color="#fff" stop-opacity="0.861"/><stop offset="0.2" stop-color="#fff" stop-opacity="0.735"/><stop offset="0.3" stop-color="#fff" stop-opacity="0.618"/><stop offset="0.4" stop-color="#fff" stop-opacity="0.509"/><stop offset="0.5" stop-color="#fff" stop-opacity="0.409"/><stop offset="0.6" stop-color="#fff" stop-opacity="0.316"/><stop offset="0.7" stop-color="#fff" stop-opacity="0.229"/><stop offset="0.8" stop-color="#fff" stop-opacity="0.147"/><stop offset="0.9" stop-color="#fff" stop-opacity="0.071"/><stop offset="1" stop-color="#fff" stop-opacity="0.000"/></linearGradient>
<linearGradient id="gw45" x1="1435.11" y1="458.42" x2="1366.94" y2="433.49" gradientUnits="userSpaceOnUse"><stop offset="0" stop-color="#fff" stop-opacity="1.000"/><stop offset="0.1" stop-color="#fff" stop-opacity="0.865"/><stop offset="0.2" stop-color="#fff" stop-opacity="0.740"/><stop offset="0.3" stop-color="#fff" stop-opacity="0.624"/><stop offset="0.4" stop-color="#fff" stop-opacity="0.516"/><stop offset="0.5" stop-color="#fff" stop-opacity="0.416"/><stop offset="0.6" stop-color="#fff" stop-opacity="0.322"/><stop offset="0.7" stop-color="#fff" stop-opacity="0.234"/><stop offset="0.8" stop-color="#fff" stop-opacity="0.151"/><stop offset="0.9" stop-color="#fff" stop-opacity="0.073"/><stop offset="1" stop-color="#fff" stop-opacity="0.000"/></linearGradient>
<linearGradient id="gw46" x1="1435.11" y1="458.42" x2="1366.94" y2="433.49" gradientUnits="userSpaceOnUse"><stop offset="0" stop-color="#fff" stop-opacity="1.000"/><stop offset="0.1" stop-color="#fff" stop-opacity="0.868"/><stop offset="0.2" stop-color="#fff" stop-opacity="0.745"/><stop offset="0.3" stop-color="#fff" stop-opacity="0.631"/><stop offset="0.4" stop-color="#fff" stop-opacity="0.523"/><stop offset="0.5" stop-color="#fff" stop-opacity="0.423"/><stop offset="0.6" stop-color="#fff" stop-opacity="0.328"/><stop offset="0.7" stop-color="#fff" stop-opacity="0.239"/><stop offset="0.8" stop-color="#fff" stop-opacity="0.155"/><stop offset="0.9" stop-color="#fff" stop-opacity="0.075"/><stop offset="1" stop-color="#fff" stop-opacity="0.000"/></linearGradient>
<linearGradient id="gw47" x1="1435.11" y1="458.42" x2="1366.94" y2="433.49" gradientUnits="userSpaceOnUse"><stop offset="0" stop-color="#fff" stop-opacity="1.000"/><stop offset="0.1" stop-color="#fff" stop-opacity="0.871"/><stop offset="0.2" stop-color="#fff" stop-opacity="0.751"/><stop offset="0.3" stop-color="#fff" stop-opacity="0.638"/><stop offset="0.4" stop-color="#fff" stop-opacity="0.531"/><stop offset="0.5" stop-color="#fff" stop-opacity="0.430"/><stop offset="0.6" stop-color="#fff" stop-opacity="0.335"/><stop offset="0.7" stop-color="#fff" stop-opacity="0.244"/><stop offset="0.8" stop-color="#fff" stop-opacity="0.159"/><stop offset="0.9" stop-color="#fff" stop-opacity="0.077"/><stop offset="1" stop-color="#fff" stop-opacity="0.000"/></linearGradient>
<linearGradient id="gw48" x1="1435.11" y1="458.42" x2="1366.94" y2="433.49" gradientUnits="userSpaceOnUse"><stop offset="0" stop-color="#fff" stop-opacity="1.000"/><stop offset="0.1" stop-color="#fff" stop-opacity="0.875"/><stop offset="0.2" stop-color="#fff" stop-opacity="0.757"/><stop offset="0.3" stop-color="#fff" stop-opacity="0.645"/><stop offset="0.4" stop-color="#fff" stop-opacity="0.539"/><stop offset="0.5" stop-color="#fff" stop-opacity="0.438"/><stop offset="0.6" stop-color="#fff" stop-opacity="0.342"/><stop offset="0.7" stop-color="#fff" stop-opacity="0.250"/><stop offset="0.8" stop-color="#fff" stop-opacity="0.163"/><stop offset="0.9" stop-color="#fff" stop-opacity="0.080"/><stop offset="1" stop-color="#fff" stop-opacity="0.000"/></linearGradient>
<linearGradient id="gw49" x1="1435.11" y1="458.42" x2="1366.94" y2="433.49" gradientUnits="userSpaceOnUse"><stop offset="0" stop-color="#fff" stop-opacity="1.000"/><stop offset="0.1" stop-color="#fff" stop-opacity="0.874"/><stop offset="0.2" stop-color="#fff" stop-opacity="0.755"/><stop offset="0.3" stop-color="#fff" stop-opacity="0.642"/><stop offset="0.4" stop-color="#fff" stop-opacity="0.536"/><stop offset="0.5" stop-color="#fff" stop-opacity="0.435"/><stop offset="0.6" stop-color="#fff" stop-opacity="0.339"/><stop offset="0.7" stop-color="#fff" stop-opacity="0.248"/><stop offset="0.8" stop-color="#fff" stop-opacity="0.161"/><stop offset="0.9" stop-color="#fff" stop-opacity="0.079"/><stop offset="1" stop-color="#fff" stop-opacity="0.000"/></linearGradient>
<linearGradient id="gw50" x1="1435.11" y1="458.42" x2="1366.94" y2="433.49" gradientUnits="userSpaceOnUse"><stop offset="0" stop-color="#fff" stop-opacity="1.000"/><stop offset="0.1" stop-color="#fff" stop-opacity="0.870"/><stop offset="0.2" stop-color="#fff" stop-opacity="0.748"/><stop offset="0.3" stop-color="#fff" stop-opacity="0.634"/><stop offset="0.4" stop-color="#fff" stop-opacity="0.527"/><stop offset="0.5" stop-color="#fff" stop-opacity="0.426"/><stop offset="0.6" stop-color="#fff" stop-opacity="0.331"/><stop offset="0.7" stop-color="#fff" stop-opacity="0.241"/><stop offset="0.8" stop-color="#fff" stop-opacity="0.157"/><stop offset="0.9" stop-color="#fff" stop-opacity="0.076"/><stop offset="1" stop-color="#fff" stop-opacity="0.000"/></linearGradient>
<linearGradient id="gw51" x1="1435.11" y1="458.42" x2="1366.94" y2="433.49" gradientUnits="userSpaceOnUse"><stop offset="0" stop-color="#fff" stop-opacity="1.000"/><stop offset="0.1" stop-color="#fff" stop-opacity="0.865"/><stop offset="0.2" stop-color="#fff" stop-opacity="0.741"/><stop offset="0.3" stop-color="#fff" stop-opacity="0.625"/><stop offset="0.4" stop-color="#fff" stop-opacity="0.518"/><stop offset="0.5" stop-color="#fff" stop-opacity="0.417"/><stop offset="0.6" stop-color="#fff" stop-opacity="0.323"/><stop offset="0.7" stop-color="#fff" stop-opacity="0.235"/><stop offset="0.8" stop-color="#fff" stop-opacity="0.152"/><stop offset="0.9" stop-color="#fff" stop-opacity="0.074"/><stop offset="1" stop-color="#fff" stop-opacity="0.000"/></linearGradient>
<linearGradient id="gw52" x1="1435.11" y1="458.42" x2="1366.94" y2="433.49" gradientUnits="userSpaceOnUse"><stop offset="0" stop-color="#fff" stop-opacity="1.000"/><stop offset="0.1" stop-color="#fff" stop-opacity="0.861"/><stop offset="0.2" stop-color="#fff" stop-opacity="0.733"/><stop offset="0.3" stop-color="#fff" stop-opacity="0.616"/><stop offset="0.4" stop-color="#fff" stop-opacity="0.508"/><stop offset="0.5" stop-color="#fff" stop-opacity="0.407"/><stop offset="0.6" stop-color="#fff" stop-opacity="0.314"/><stop offset="0.7" stop-color="#fff" stop-opacity="0.228"/><stop offset="0.8" stop-color="#fff" stop-opacity="0.147"/><stop offset="0.9" stop-color="#fff" stop-opacity="0.071"/><stop offset="1" stop-color="#fff" stop-opacity="0.000"/></linearGradient>
<linearGradient id="gw53" x1="1435.11" y1="458.42" x2="1366.94" y2="433.49" gradientUnits="userSpaceOnUse"><stop offset="0" stop-color="#fff" stop-opacity="1.000"/><stop offset="0.1" stop-color="#fff" stop-opacity="0.855"/><stop offset="0.2" stop-color="#fff" stop-opacity="0.725"/><stop offset="0.3" stop-color="#fff" stop-opacity="0.606"/><stop offset="0.4" stop-color="#fff" stop-opacity="0.497"/><stop offset="0.5" stop-color="#fff" stop-opacity="0.397"/><stop offset="0.6" stop-color="#fff" stop-opacity="0.305"/><stop offset="0.7" stop-color="#fff" stop-opacity="0.220"/><stop offset="0.8" stop-color="#fff" stop-opacity="0.141"/><stop offset="0.9" stop-color="#fff" stop-opacity="0.068"/><stop offset="1" stop-color="#fff" stop-opacity="0.000"/></linearGradient>
<linearGradient id="gw54" x1="1435.11" y1="458.42" x2="1366.94" y2="433.49" gradientUnits="userSpaceOnUse"><stop offset="0" stop-color="#fff" stop-opacity="1.000"/><stop offset="0.1" stop-color="#fff" stop-opacity="0.849"/><stop offset="0.2" stop-color="#fff" stop-opacity="0.715"/><stop offset="0.3" stop-color="#fff" stop-opacity="0.594"/><stop offset="0.4" stop-color="#fff" stop-opacity="0.485"/><stop offset="0.5" stop-color="#fff" stop-opacity="0.386"/><stop offset="0.6" stop-color="#fff" stop-opacity="0.295"/><stop offset="0.7" stop-color="#fff" stop-opacity="0.212"/><stop offset="0.8" stop-color="#fff" stop-opacity="0.136"/><stop offset="0.9" stop-color="#fff" stop-opacity="0.065"/><stop offset="1" stop-color="#fff" stop-opacity="0.000"/></linearGradient>
<linearGradient id="gw55" x1="1435.11" y1="458.42" x2="1366.94" y2="433.49" gradientUnits="userSpaceOnUse"><stop offset="0" stop-color="#fff" stop-opacity="1.000"/><stop offset="0.1" stop-color="#fff" stop-opacity="0.842"/><stop offset="0.2" stop-color="#fff" stop-opacity="0.704"/><stop offset="0.3" stop-color="#fff" stop-opacity="0.581"/><stop offset="0.4" stop-color="#fff" stop-opacity="0.472"/><stop offset="0.5" stop-color="#fff" stop-opacity="0.373"/><stop offset="0.6" stop-color="#fff" stop-opacity="0.284"/><stop offset="0.7" stop-color="#fff" stop-opacity="0.203"/><stop offset="0.8" stop-color="#fff" stop-opacity="0.129"/><stop offset="0.9" stop-color="#fff" stop-opacity="0.062"/><stop offset="1" stop-color="#fff" stop-opacity="0.000"/></linearGradient>
<linearGradient id="gw56" x1="1435.11" y1="458.42" x2="1366.94" y2="433.49" gradientUnits="userSpaceOnUse"><stop offset="0" stop-color="#fff" stop-opacity="1.000"/><stop offset="0.1" stop-color="#fff" stop-opacity="0.834"/><stop offset="0.2" stop-color="#fff" stop-opacity="0.691"/><stop offset="0.3" stop-color="#fff" stop-opacity="0.566"/><stop offset="0.4" stop-color="#fff" stop-opacity="0.456"/><stop offset="0.5" stop-color="#fff" stop-opacity="0.359"/><stop offset="0.6" stop-color="#fff" stop-opacity="0.272"/><stop offset="0.7" stop-color="#fff" stop-opacity="0.193"/><stop offset="0.8" stop-color="#fff" stop-opacity="0.123"/><stop offset="0.9" stop-color="#fff" stop-opacity="0.058"/><stop offset="1" stop-color="#fff" stop-opacity="0.000"/></linearGradient>
<linearGradient id="gw57" x1="1435.11" y1="458.42" x2="1366.94" y2="433.49" gradientUnits="userSpaceOnUse"><stop offset="0" stop-color="#fff" stop-opacity="1.000"/><stop offset="0.1" stop-color="#fff" stop-opacity="0.824"/><stop offset="0.2" stop-color="#fff" stop-opacity="0.675"/><stop offset="0.3" stop-color="#fff" stop-opacity="0.548"/><stop offset="0.4" stop-color="#fff" stop-opacity="0.438"/><stop offset="0.5" stop-color="#fff" stop-opacity="0.342"/><stop offset="0.6" stop-color="#fff" stop-opacity="0.257"/><stop offset="0.7" stop-color="#fff" stop-opacity="0.182"/><stop offset="0.8" stop-color="#fff" stop-opacity="0.115"/><stop offset="0.9" stop-color="#fff" stop-opacity="0.055"/><stop offset="1" stop-color="#fff" stop-opacity="0.000"/></linearGradient>
<linearGradient id="gw58" x1="1435.11" y1="458.42" x2="1366.94" y2="433.49" gradientUnits="userSpaceOnUse"><stop offset="0" stop-color="#fff" stop-opacity="1.000"/><stop offset="0.1" stop-color="#fff" stop-opacity="0.810"/><stop offset="0.2" stop-color="#fff" stop-opacity="0.655"/><stop offset="0.3" stop-color="#fff" stop-opacity="0.526"/><stop offset="0.4" stop-color="#fff" stop-opacity="0.416"/><stop offset="0.5" stop-color="#fff" stop-opacity="0.322"/><stop offset="0.6" stop-color="#fff" stop-opacity="0.241"/><stop offset="0.7" stop-color="#fff" stop-opacity="0.169"/><stop offset="0.8" stop-color="#fff" stop-opacity="0.106"/><stop offset="0.9" stop-color="#fff" stop-opacity="0.050"/><stop offset="1" stop-color="#fff" stop-opacity="0.000"/></linearGradient>
<linearGradient id="gw59" x1="1435.11" y1="458.42" x2="1366.94" y2="433.49" gradientUnits="userSpaceOnUse"><stop offset="0" stop-color="#fff" stop-opacity="1.000"/><stop offset="0.1" stop-color="#fff" stop-opacity="0.792"/><stop offset="0.2" stop-color="#fff" stop-opacity="0.629"/><stop offset="0.3" stop-color="#fff" stop-opacity="0.498"/><stop offset="0.4" stop-color="#fff" stop-opacity="0.389"/><stop offset="0.5" stop-color="#fff" stop-opacity="0.298"/><stop offset="0.6" stop-color="#fff" stop-opacity="0.221"/><stop offset="0.7" stop-color="#fff" stop-opacity="0.154"/><stop offset="0.8" stop-color="#fff" stop-opacity="0.096"/><stop offset="0.9" stop-color="#fff" stop-opacity="0.045"/><stop offset="1" stop-color="#fff" stop-opacity="0.000"/></linearGradient>
<linearGradient id="gw60" x1="1435.11" y1="458.42" x2="1477.71" y2="560.24" gradientUnits="userSpaceOnUse"><stop offset="0" stop-color="#fff" stop-opacity="1.000"/><stop offset="0.1" stop-color="#fff" stop-opacity="0.787"/><stop offset="0.2" stop-color="#fff" stop-opacity="0.622"/><stop offset="0.3" stop-color="#fff" stop-opacity="0.489"/><stop offset="0.4" stop-color="#fff" stop-opacity="0.381"/><stop offset="0.5" stop-color="#fff" stop-opacity="0.291"/><stop offset="0.6" stop-color="#fff" stop-opacity="0.215"/><stop offset="0.7" stop-color="#fff" stop-opacity="0.150"/><stop offset="0.8" stop-color="#fff" stop-opacity="0.093"/><stop offset="0.9" stop-color="#fff" stop-opacity="0.044"/><stop offset="1" stop-color="#fff" stop-opacity="0.000"/></linearGradient>
<linearGradient id="gw61" x1="1435.11" y1="458.42" x2="1477.71" y2="560.24" gradientUnits="userSpaceOnUse"><stop offset="0" stop-color="#fff" stop-opacity="1.000"/><stop offset="0.1" stop-color="#fff" stop-opacity="0.798"/><stop offset="0.2" stop-color="#fff" stop-opacity="0.636"/><stop offset="0.3" stop-color="#fff" stop-opacity="0.505"/><stop offset="0.4" stop-color="#fff" stop-opacity="0.396"/><stop offset="0.5" stop-color="#fff" stop-opacity="0.304"/><stop offset="0.6" stop-color="#fff" stop-opacity="0.226"/><stop offset="0.7" stop-color="#fff" stop-opacity="0.158"/><stop offset="0.8" stop-color="#fff" stop-opacity="0.099"/><stop offset="0.9" stop-color="#fff" stop-opacity="0.046"/><stop offset="1" stop-color="#fff" stop-opacity="0.000"/></linearGradient>
<linearGradient id="gw62" x1="1435.11" y1="458.42" x2="1477.71" y2="560.24" gradientUnits="userSpaceOnUse"><stop offset="0" stop-color="#fff" stop-opacity="1.000"/><stop offset="0.1" stop-color="#fff" stop-opacity="0.806"/><stop offset="0.2" stop-color="#fff" stop-opacity="0.649"/><stop offset="0.3" stop-color="#fff" stop-opacity="0.519"/><stop offset="0.4" stop-color="#fff" stop-opacity="0.410"/><stop offset="0.5" stop-color="#fff" stop-opacity="0.316"/><stop offset="0.6" stop-color="#fff" stop-opacity="0.236"/><stop offset="0.7" stop-color="#fff" stop-opacity="0.165"/><stop offset="0.8" stop-color="#fff" stop-opacity="0.104"/><stop offset="0.9" stop-color="#fff" stop-opacity="0.049"/><stop offset="1" stop-color="#fff" stop-opacity="0.000"/></linearGradient>
<linearGradient id="gw63" x1="1435.11" y1="458.42" x2="1477.71" y2="560.24" gradientUnits="userSpaceOnUse"><stop offset="0" stop-color="#fff" stop-opacity="1.000"/><stop offset="0.1" stop-color="#fff" stop-opacity="0.814"/><stop offset="0.2" stop-color="#fff" stop-opacity="0.660"/><stop offset="0.3" stop-color="#fff" stop-opacity="0.531"/><stop offset="0.4" stop-color="#fff" stop-opacity="0.421"/><stop offset="0.5" stop-color="#fff" stop-opacity="0.327"/><stop offset="0.6" stop-color="#fff" stop-opacity="0.244"/><stop offset="0.7" stop-color="#fff" stop-opacity="0.172"/><stop offset="0.8" stop-color="#fff" stop-opacity="0.108"/><stop offset="0.9" stop-color="#fff" stop-opacity="0.051"/><stop offset="1" stop-color="#fff" stop-opacity="0.000"/></linearGradient>
<linearGradient id="gw64" x1="1435.11" y1="458.42" x2="1477.71" y2="560.24" gradientUnits="userSpaceOnUse"><stop offset="0" stop-color="#fff" stop-opacity="1.000"/><stop offset="0.1" stop-color="#fff" stop-opacity="0.820"/><stop offset="0.2" stop-color="#fff" stop-opacity="0.670"/><stop offset="0.3" stop-color="#fff" stop-opacity="0.542"/><stop offset="0.4" stop-color="#fff" stop-opacity="0.432"/><stop offset="0.5" stop-color="#fff" stop-opacity="0.336"/><stop offset="0.6" stop-color="#fff" stop-opacity="0.252"/><stop offset="0.7" stop-color="#fff" stop-opacity="0.178"/><stop offset="0.8" stop-color="#fff" stop-opacity="0.112"/><stop offset="0.9" stop-color="#fff" stop-opacity="0.053"/><stop offset="1" stop-color="#fff" stop-opacity="0.000"/></linearGradient>
<linearGradient id="gw65" x1="1435.11" y1="458.42" x2="1477.71" y2="560.24" gradientUnits="userSpaceOnUse"><stop offset="0" stop-color="#fff" stop-opacity="1.000"/><stop offset="0.1" stop-color="#fff" stop-opacity="0.826"/><stop offset="0.2" stop-color="#fff" stop-opacity="0.678"/><stop offset="0.3" stop-color="#fff" stop-opacity="0.551"/><stop offset="0.4" stop-color="#fff" stop-opacity="0.441"/><stop offset="0.5" stop-color="#fff" stop-opacity="0.345"/><stop offset="0.6" stop-color="#fff" stop-opacity="0.260"/><stop offset="0.7" stop-color="#fff" stop-opacity="0.184"/><stop offset="0.8" stop-color="#fff" stop-opacity="0.116"/><stop offset="0.9" stop-color="#fff" stop-opacity="0.055"/><stop offset="1" stop-color="#fff" stop-opacity="0.000"/></linearGradient>
<linearGradient id="gw66" x1="1435.11" y1="458.42" x2="1477.71" y2="560.24" gradientUnits="userSpaceOnUse"><stop offset="0" stop-color="#fff" stop-opacity="1.000"/><stop offset="0.1" stop-color="#fff" stop-opacity="0.831"/><stop offset="0.2" stop-color="#fff" stop-opacity="0.686"/><stop offset="0.3" stop-color="#fff" stop-opacity="0.560"/><stop offset="0.4" stop-color="#fff" stop-opacity="0.450"/><stop offset="0.5" stop-color="#fff" stop-opacity="0.353"/><stop offset="0.6" stop-color="#fff" stop-opacity="0.267"/><stop offset="0.7" stop-color="#fff" stop-opacity="0.190"/><stop offset="0.8" stop-color="#fff" stop-opacity="0.120"/><stop offset="0.9" stop-color="#fff" stop-opacity="0.057"/><stop offset="1" stop-color="#fff" stop-opacity="0.000"/></linearGradient>
<linearGradient id="gw67" x1="1435.11" y1="458.42" x2="1477.71" y2="560.24" gradientUnits="userSpaceOnUse"><stop offset="0" stop-color="#fff" stop-opacity="1.000"/><stop offset="0.1" stop-color="#fff" stop-opacity="0.836"/><stop offset="0.2" stop-color="#fff" stop-opacity="0.693"/><stop offset="0.3" stop-color="#fff" stop-opacity="0.569"/><stop offset="0.4" stop-color="#fff" stop-opacity="0.459"/><stop offset="0.5" stop-color="#fff" stop-opacity="0.361"/><stop offset="0.6" stop-color="#fff" stop-opacity="0.274"/><stop offset="0.7" stop-color="#fff" stop-opacity="0.195"/><stop offset="0.8" stop-color="#fff" stop-opacity="0.124"/><stop offset="0.9" stop-color="#fff" stop-opacity="0.059"/><stop offset="1" stop-color="#fff" stop-opacity="0.000"/></linearGradient>
<linearGradient id="gw68" x1="1435.11" y1="458.42" x2="1477.71" y2="560.24" gradientUnits="userSpaceOnUse"><stop offset="0" stop-color="#fff" stop-opacity="1.000"/><stop offset="0.1" stop-color="#fff" stop-opacity="0.840"/><stop offset="0.2" stop-color="#fff" stop-opacity="0.700"/><stop offset="0.3" stop-color="#fff" stop-opacity="0.577"/><stop offset="0.4" stop-color="#fff" stop-opacity="0.467"/><stop offset="0.5" stop-color="#fff" stop-opacity="0.369"/><stop offset="0.6" stop-color="#fff" stop-opacity="0.280"/><stop offset="0.7" stop-color="#fff" stop-opacity="0.200"/><stop offset="0.8" stop-color="#fff" stop-opacity="0.127"/><stop offset="0.9" stop-color="#fff" stop-opacity="0.061"/><stop offset="1" stop-color="#fff" stop-opacity="0.000"/></linearGradient>
<linearGradient id="gw69" x1="1435.11" y1="458.42" x2="1477.71" y2="560.24" gradientUnits="userSpaceOnUse"><stop offset="0" stop-color="#fff" stop-opacity="1.000"/><stop offset="0.1" stop-color="#fff" stop-opacity="0.844"/><stop offset="0.2" stop-color="#fff" stop-opacity="0.707"/><stop offset="0.3" stop-color="#fff" stop-opacity="0.584"/><stop offset="0.4" stop-color="#fff" stop-opacity="0.475"/><stop offset="0.5" stop-color="#fff" stop-opacity="0.376"/><stop offset="0.6" stop-color="#fff" stop-opacity="0.287"/><stop offset="0.7" stop-color="#fff" stop-opacity="0.205"/><stop offset="0.8" stop-color="#fff" stop-opacity="0.131"/><stop offset="0.9" stop-color="#fff" stop-opacity="0.063"/><stop offset="1" stop-color="#fff" stop-opacity="0.000"/></linearGradient>
<linearGradient id="gw70" x1="1435.11" y1="458.42" x2="1477.71" y2="560.24" gradientUnits="userSpaceOnUse"><stop offset="0" stop-color="#fff" stop-opacity="1.000"/><stop offset="0.1" stop-color="#fff" stop-opacity="0.841"/><stop offset="0.2" stop-color="#fff" stop-opacity="0.701"/><stop offset="0.3" stop-color="#fff" stop-opacity="0.577"/><stop offset="0.4" stop-color="#fff" stop-opacity="0.468"/><stop offset="0.5" stop-color="#fff" stop-opacity="0.369"/><stop offset="0.6" stop-color="#fff" stop-opacity="0.281"/><stop offset="0.7" stop-color="#fff" stop-opacity="0.201"/><stop offset="0.8" stop-color="#fff" stop-opacity="0.128"/><stop offset="0.9" stop-color="#fff" stop-opacity="0.061"/><stop offset="1" stop-color="#fff" stop-opacity="0.000"/></linearGradient>
<linearGradient id="gw71" x1="1435.11" y1="458.42" x2="1477.71" y2="560.24" gradientUnits="userSpaceOnUse"><stop offset="0" stop-color="#fff" stop-opacity="1.000"/><stop offset="0.1" stop-color="#fff" stop-opacity="0.834"/><stop offset="0.2" stop-color="#fff" stop-opacity="0.690"/><stop offset="0.3" stop-color="#fff" stop-opacity="0.565"/><stop offset="0.4" stop-color="#fff" stop-opacity="0.455"/><stop offset="0.5" stop-color="#fff" stop-opacity="0.358"/><stop offset="0.6" stop-color="#fff" stop-opacity="0.271"/><stop offset="0.7" stop-color="#fff" stop-opacity="0.193"/><stop offset="0.8" stop-color="#fff" stop-opacity="0.122"/><stop offset="0.9" stop-color="#fff" stop-opacity="0.058"/><stop offset="1" stop-color="#fff" stop-opacity="0.000"/></linearGradient>
<linearGradient id="gw72" x1="1435.11" y1="458.42" x2="1477.71" y2="560.24" gradientUnits="userSpaceOnUse"><stop offset="0" stop-color="#fff" stop-opacity="1.000"/><stop offset="0.1" stop-color="#fff" stop-opacity="0.827"/><stop offset="0.2" stop-color="#fff" stop-opacity="0.680"/><stop offset="0.3" stop-color="#fff" stop-opacity="0.554"/><stop offset="0.4" stop-color="#fff" stop-opacity="0.443"/><stop offset="0.5" stop-color="#fff" stop-opacity="0.347"/><stop offset="0.6" stop-color="#fff" stop-opacity="0.262"/><stop offset="0.7" stop-color="#fff" stop-opacity="0.185"/><stop offset="0.8" stop-color="#fff" stop-opacity="0.117"/><stop offset="0.9" stop-color="#fff" stop-opacity="0.056"/><stop offset="1" stop-color="#fff" stop-opacity="0.000"/></linearGradient>
<linearGradient id="gw73" x1="1435.11" y1="458.42" x2="1477.71" y2="560.24" gradientUnits="userSpaceOnUse"><stop offset="0" stop-color="#fff" stop-opacity="1.000"/><stop offset="0.1" stop-color="#fff" stop-opacity="0.821"/><stop offset="0.2" stop-color="#fff" stop-opacity="0.670"/><stop offset="0.3" stop-color="#fff" stop-opacity="0.543"/><stop offset="0.4" stop-color="#fff" stop-opacity="0.433"/><stop offset="0.5" stop-color="#fff" stop-opacity="0.337"/><stop offset="0.6" stop-color="#fff" stop-opacity="0.253"/><stop offset="0.7" stop-color="#fff" stop-opacity="0.179"/><stop offset="0.8" stop-color="#fff" stop-opacity="0.113"/><stop offset="0.9" stop-color="#fff" stop-opacity="0.054"/><stop offset="1" stop-color="#fff" stop-opacity="0.000"/></linearGradient>
<linearGradient id="gw74" x1="1435.11" y1="458.42" x2="1477.71" y2="560.24" gradientUnits="userSpaceOnUse"><stop offset="0" stop-color="#fff" stop-opacity="1.000"/><stop offset="0.1" stop-color="#fff" stop-opacity="0.815"/><stop offset="0.2" stop-color="#fff" stop-opacity="0.661"/><stop offset="0.3" stop-color="#fff" stop-opacity="0.532"/><stop offset="0.4" stop-color="#fff" stop-opacity="0.423"/><stop offset="0.5" stop-color="#fff" stop-opacity="0.328"/><stop offset="0.6" stop-color="#fff" stop-opacity="0.245"/><stop offset="0.7" stop-color="#fff" stop-opacity="0.173"/><stop offset="0.8" stop-color="#fff" stop-opacity="0.109"/><stop offset="0.9" stop-color="#fff" stop-opacity="0.051"/><stop offset="1" stop-color="#fff" stop-opacity="0.000"/></linearGradient>
<linearGradient id="gw75" x1="1435.11" y1="458.42" x2="1477.71" y2="560.24" gradientUnits="userSpaceOnUse"><stop offset="0" stop-color="#fff" stop-opacity="1.000"/><stop offset="0.1" stop-color="#fff" stop-opacity="0.808"/><stop offset="0.2" stop-color="#fff" stop-opacity="0.652"/><stop offset="0.3" stop-color="#fff" stop-opacity="0.522"/><stop offset="0.4" stop-color="#fff" stop-opacity="0.413"/><stop offset="0.5" stop-color="#fff" stop-opacity="0.319"/><stop offset="0.6" stop-color="#fff" stop-opacity="0.238"/><stop offset="0.7" stop-color="#fff" stop-opacity="0.167"/><stop offset="0.8" stop-color="#fff" stop-opacity="0.105"/><stop offset="0.9" stop-color="#fff" stop-opacity="0.050"/><stop offset="1" stop-color="#fff" stop-opacity="0.000"/></linearGradient>
<linearGradient id="gw76" x1="1435.11" y1="458.42" x2="1477.71" y2="560.24" gradientUnits="userSpaceOnUse"><stop offset="0" stop-color="#fff" stop-opacity="1.000"/><stop offset="0.1" stop-color="#fff" stop-opacity="0.802"/><stop offset="0.2" stop-color="#fff" stop-opacity="0.643"/><stop offset="0.3" stop-color="#fff" stop-opacity="0.513"/><stop offset="0.4" stop-color="#fff" stop-opacity="0.403"/><stop offset="0.5" stop-color="#fff" stop-opacity="0.311"/><stop offset="0.6" stop-color="#fff" stop-opacity="0.231"/><stop offset="0.7" stop-color="#fff" stop-opacity="0.162"/><stop offset="0.8" stop-color="#fff" stop-opacity="0.101"/><stop offset="0.9" stop-color="#fff" stop-opacity="0.048"/><stop offset="1" stop-color="#fff" stop-opacity="0.000"/></linearGradient>
<linearGradient id="gw77" x1="1435.11" y1="458.42" x2="1477.71" y2="560.24" gradientUnits="userSpaceOnUse"><stop offset="0" stop-color="#fff" stop-opacity="1.000"/><stop offset="0.1" stop-color="#fff" stop-opacity="0.796"/><stop offset="0.2" stop-color="#fff" stop-opacity="0.634"/><stop offset="0.3" stop-color="#fff" stop-opacity="0.503"/><stop offset="0.4" stop-color="#fff" stop-opacity="0.394"/><stop offset="0.5" stop-color="#fff" stop-opacity="0.302"/><stop offset="0.6" stop-color="#fff" stop-opacity="0.224"/><stop offset="0.7" stop-color="#fff" stop-opacity="0.157"/><stop offset="0.8" stop-color="#fff" stop-opacity="0.098"/><stop offset="0.9" stop-color="#fff" stop-opacity="0.046"/><stop offset="1" stop-color="#fff" stop-opacity="0.000"/></linearGradient>
<linearGradient id="gw78" x1="1435.11" y1="458.42" x2="1477.71" y2="560.24" gradientUnits="userSpaceOnUse"><stop offset="0" stop-color="#fff" stop-opacity="1.000"/><stop offset="0.1" stop-color="#fff" stop-opacity="0.790"/><stop offset="0.2" stop-color="#fff" stop-opacity="0.625"/><stop offset="0.3" stop-color="#fff" stop-opacity="0.493"/><stop offset="0.4" stop-color="#fff" stop-opacity="0.385"/><stop offset="0.5" stop-color="#fff" stop-opacity="0.294"/><stop offset="0.6" stop-color="#fff" stop-opacity="0.218"/><stop offset="0.7" stop-color="#fff" stop-opacity="0.152"/><stop offset="0.8" stop-color="#fff" stop-opacity="0.095"/><stop offset="0.9" stop-color="#fff" stop-opacity="0.044"/><stop offset="1" stop-color="#fff" stop-opacity="0.000"/></linearGradient>
<linearGradient id="gw79" x1="1435.11" y1="458.42" x2="1477.71" y2="560.24" gradientUnits="userSpaceOnUse"><stop offset="0" stop-color="#fff" stop-opacity="1.000"/><stop offset="0.1" stop-color="#fff" stop-opacity="0.783"/><stop offset="0.2" stop-color="#fff" stop-opacity="0.616"/><stop offset="0.3" stop-color="#fff" stop-opacity="0.484"/><stop offset="0.4" stop-color="#fff" stop-opacity="0.376"/><stop offset="0.5" stop-color="#fff" stop-opacity="0.286"/><stop offset="0.6" stop-color="#fff" stop-opacity="0.211"/><stop offset="0.7" stop-color="#fff" stop-opacity="0.147"/><stop offset="0.8" stop-color="#fff" stop-opacity="0.091"/><stop offset="0.9" stop-color="#fff" stop-opacity="0.043"/><stop offset="1" stop-color="#fff" stop-opacity="0.000"/></linearGradient>
<linearGradient id="gw80" x1="1435.11" y1="458.42" x2="1477.71" y2="560.24" gradientUnits="userSpaceOnUse"><stop offset="0" stop-color="#fff" stop-opacity="1.000"/><stop offset="0.1" stop-color="#fff" stop-opacity="0.776"/><stop offset="0.2" stop-color="#fff" stop-opacity="0.607"/><stop offset="0.3" stop-color="#fff" stop-opacity="0.474"/><stop offset="0.4" stop-color="#fff" stop-opacity="0.367"/><stop offset="0.5" stop-color="#fff" stop-opacity="0.278"/><stop offset="0.6" stop-color="#fff" stop-opacity="0.205"/><stop offset="0.7" stop-color="#fff" stop-opacity="0.142"/><stop offset="0.8" stop-color="#fff" stop-opacity="0.088"/><stop offset="0.9" stop-color="#fff" stop-opacity="0.041"/><stop offset="1" stop-color="#fff" stop-opacity="0.000"/></linearGradient>
<linearGradient id="gw81" x1="1435.11" y1="458.42" x2="1477.71" y2="560.24" gradientUnits="userSpaceOnUse"><stop offset="0" stop-color="#fff" stop-opacity="1.000"/><stop offset="0.1" stop-color="#fff" stop-opacity="0.769"/><stop offset="0.2" stop-color="#fff" stop-opacity="0.597"/><stop offset="0.3" stop-color="#fff" stop-opacity="0.463"/><stop offset="0.4" stop-color="#fff" stop-opacity="0.357"/><stop offset="0.5" stop-color="#fff" stop-opacity="0.270"/><stop offset="0.6" stop-color="#fff" stop-opacity="0.198"/><stop offset="0.7" stop-color="#fff" stop-opacity="0.137"/><stop offset="0.8" stop-color="#fff" stop-opacity="0.085"/><stop offset="0.9" stop-color="#fff" stop-opacity="0.040"/><stop offset="1" stop-color="#fff" stop-opacity="0.000"/></linearGradient>
<linearGradient id="gw82" x1="1435.11" y1="458.42" x2="1477.71" y2="560.24" gradientUnits="userSpaceOnUse"><stop offset="0" stop-color="#fff" stop-opacity="1.000"/><stop offset="0.1" stop-color="#fff" stop-opacity="0.762"/><stop offset="0.2" stop-color="#fff" stop-opacity="0.587"/><stop offset="0.3" stop-color="#fff" stop-opacity="0.453"/><stop offset="0.4" stop-color="#fff" stop-opacity="0.347"/><stop offset="0.5" stop-color="#fff" stop-opacity="0.262"/><stop offset="0.6" stop-color="#fff" stop-opacity="0.191"/><stop offset="0.7" stop-color="#fff" stop-opacity="0.132"/><stop offset="0.8" stop-color="#fff" stop-opacity="0.081"/><stop offset="0.9" stop-color="#fff" stop-opacity="0.038"/><stop offset="1" stop-color="#fff" stop-opacity="0.000"/></linearGradient>
<linearGradient id="gw83" x1="1435.11" y1="458.42" x2="1477.71" y2="560.24" gradientUnits="userSpaceOnUse"><stop offset="0" stop-color="#fff" stop-opacity="1.000"/><stop offset="0.1" stop-color="#fff" stop-opacity="0.753"/><stop offset="0.2" stop-color="#fff" stop-opacity="0.575"/><stop offset="0.3" stop-color="#fff" stop-opacity="0.441"/><stop offset="0.4" stop-color="#fff" stop-opacity="0.337"/><stop offset="0.5" stop-color="#fff" stop-opacity="0.253"/><stop offset="0.6" stop-color="#fff" stop-opacity="0.184"/><stop offset="0.7" stop-color="#fff" stop-opacity="0.127"/><stop offset="0.8" stop-color="#fff" stop-opacity="0.078"/><stop offset="0.9" stop-color="#fff" stop-opacity="0.036"/><stop offset="1" stop-color="#fff" stop-opacity="0.000"/></linearGradient>
<linearGradient id="gw84" x1="1435.11" y1="458.42" x2="1477.71" y2="560.24" gradientUnits="userSpaceOnUse"><stop offset="0" stop-color="#fff" stop-opacity="1.000"/><stop offset="0.1" stop-color="#fff" stop-opacity="0.744"/><stop offset="0.2" stop-color="#fff" stop-opacity="0.563"/><stop offset="0.3" stop-color="#fff" stop-opacity="0.429"/><stop offset="0.4" stop-color="#fff" stop-opacity="0.326"/><stop offset="0.5" stop-color="#fff" stop-opacity="0.244"/><stop offset="0.6" stop-color="#fff" stop-opacity="0.177"/><stop offset="0.7" stop-color="#fff" stop-opacity="0.121"/><stop offset="0.8" stop-color="#fff" stop-opacity="0.075"/><stop offset="0.9" stop-color="#fff" stop-opacity="0.035"/><stop offset="1" stop-color="#fff" stop-opacity="0.000"/></linearGradient>
<linearGradient id="gw85" x1="1435.11" y1="458.42" x2="1477.71" y2="560.24" gradientUnits="userSpaceOnUse"><stop offset="0" stop-color="#fff" stop-opacity="1.000"/><stop offset="0.1" stop-color="#fff" stop-opacity="0.733"/><stop offset="0.2" stop-color="#fff" stop-opacity="0.550"/><stop offset="0.3" stop-color="#fff" stop-opacity="0.416"/><stop offset="0.4" stop-color="#fff" stop-opacity="0.314"/><stop offset="0.5" stop-color="#fff" stop-opacity="0.234"/><stop offset="0.6" stop-color="#fff" stop-opacity="0.169"/><stop offset="0.7" stop-color="#fff" stop-opacity="0.116"/><stop offset="0.8" stop-color="#fff" stop-opacity="0.071"/><stop offset="0.9" stop-color="#fff" stop-opacity="0.033"/><stop offset="1" stop-color="#fff" stop-opacity="0.000"/></linearGradient>
<linearGradient id="gw86" x1="1435.11" y1="458.42" x2="1477.71" y2="560.24" gradientUnits="userSpaceOnUse"><stop offset="0" stop-color="#fff" stop-opacity="1.000"/><stop offset="0.1" stop-color="#fff" stop-opacity="0.721"/><stop offset="0.2" stop-color="#fff" stop-opacity="0.535"/><stop offset="0.3" stop-color="#fff" stop-opacity="0.401"/><stop offset="0.4" stop-color="#fff" stop-opacity="0.301"/><stop offset="0.5" stop-color="#fff" stop-opacity="0.223"/><stop offset="0.6" stop-color="#fff" stop-opacity="0.161"/><stop offset="0.7" stop-color="#fff" stop-opacity="0.110"/><stop offset="0.8" stop-color="#fff" stop-opacity="0.067"/><stop offset="0.9" stop-color="#fff" stop-opacity="0.031"/><stop offset="1" stop-color="#fff" stop-opacity="0.000"/></linearGradient>
<linearGradient id="gw87" x1="1435.11" y1="458.42" x2="1477.71" y2="560.24" gradientUnits="userSpaceOnUse"><stop offset="0" stop-color="#fff" stop-opacity="1.000"/><stop offset="0.1" stop-color="#fff" stop-opacity="0.707"/><stop offset="0.2" stop-color="#fff" stop-opacity="0.518"/><stop offset="0.3" stop-color="#fff" stop-opacity="0.385"/><stop offset="0.4" stop-color="#fff" stop-opacity="0.287"/><stop offset="0.5" stop-color="#fff" stop-opacity="0.211"/><stop offset="0.6" stop-color="#fff" stop-opacity="0.152"/><stop offset="0.7" stop-color="#fff" stop-opacity="0.103"/><stop offset="0.8" stop-color="#fff" stop-opacity="0.063"/><stop offset="0.9" stop-color="#fff" stop-opacity="0.029"/><stop offset="1" stop-color="#fff" stop-opacity="0.000"/></linearGradient>
<linearGradient id="gw88" x1="1435.11" y1="458.42" x2="1477.71" y2="560.24" gradientUnits="userSpaceOnUse"><stop offset="0" stop-color="#fff" stop-opacity="1.000"/><stop offset="0.1" stop-color="#fff" stop-opacity="0.690"/><stop offset="0.2" stop-color="#fff" stop-opacity="0.497"/><stop offset="0.3" stop-color="#fff" stop-opacity="0.366"/><stop offset="0.4" stop-color="#fff" stop-opacity="0.271"/><stop offset="0.5" stop-color="#fff" stop-opacity="0.198"/><stop offset="0.6" stop-color="#fff" stop-opacity="0.142"/><stop offset="0.7" stop-color="#fff" stop-opacity="0.096"/><stop offset="0.8" stop-color="#fff" stop-opacity="0.058"/><stop offset="0.9" stop-color="#fff" stop-opacity="0.027"/><stop offset="1" stop-color="#fff" stop-opacity="0.000"/></linearGradient>
<linearGradient id="gw89" x1="1435.11" y1="458.42" x2="1477.71" y2="560.24" gradientUnits="userSpaceOnUse"><stop offset="0" stop-color="#fff" stop-opacity="1.000"/><stop offset="0.1" stop-color="#fff" stop-opacity="0.669"/><stop offset="0.2" stop-color="#fff" stop-opacity="0.473"/><stop offset="0.3" stop-color="#fff" stop-opacity="0.344"/><stop offset="0.4" stop-color="#fff" stop-opacity="0.252"/><stop offset="0.5" stop-color="#fff" stop-opacity="0.183"/><stop offset="0.6" stop-color="#fff" stop-opacity="0.130"/><stop offset="0.7" stop-color="#fff" stop-opacity="0.088"/><stop offset="0.8" stop-color="#fff" stop-opacity="0.053"/><stop offset="0.9" stop-color="#fff" stop-opacity="0.024"/><stop offset="1" stop-color="#fff" stop-opacity="0.000"/></linearGradient>
<linearGradient id="gInW" x1="1243.91" y1="954.81" x2="1740.95" y2="211.83" gradientUnits="userSpaceOnUse"><stop offset="0.8" stop-color="#fff" stop-opacity="0.1309"/><stop offset="0.83" stop-color="#fff" stop-opacity="0.1133"/><stop offset="0.85" stop-color="#fff" stop-opacity="0.0961"/><stop offset="0.88" stop-color="#fff" stop-opacity="0.0793"/><stop offset="0.9" stop-color="#fff" stop-opacity="0.0628"/><stop offset="0.93" stop-color="#fff" stop-opacity="0.0466"/><stop offset="0.95" stop-color="#fff" stop-opacity="0.0308"/><stop offset="0.98" stop-color="#fff" stop-opacity="0.0152"/><stop offset="1" stop-color="#fff" stop-opacity="0.0000"/></linearGradient>
<linearGradient id="gRb" x1="0" y1="0" x2="0" y2="1"><stop offset="0" stop-color="#ff5858"/><stop offset="1" stop-color="#ff3a3a"/></linearGradient>
<linearGradient id="gGb" x1="0" y1="0" x2="0" y2="1"><stop offset="0" stop-color="#56ad56"/><stop offset="1" stop-color="#3ea03e"/></linearGradient>
<linearGradient id="gBb" x1="0" y1="0" x2="0" y2="1"><stop offset="0" stop-color="#5a5aff"/><stop offset="1" stop-color="#3c3cff"/></linearGradient>
<linearGradient id="gHdr" x1="0" y1="0" x2="0" y2="1"><stop offset="0" stop-color="#363636"/><stop offset="0.5" stop-color="#333333"/><stop offset="0.51" stop-color="#1c1c1c"/><stop offset="1" stop-color="#181818"/></linearGradient>
<linearGradient id="gBot" x1="0" y1="0" x2="0" y2="1"><stop offset="0" stop-color="#4a4a4a"/><stop offset="0.45" stop-color="#393939"/><stop offset="1" stop-color="#242424"/></linearGradient>
<linearGradient id="gTile" x1="0" y1="0" x2="0" y2="1"><stop offset="0" stop-color="#a8a8a8"/><stop offset="0.55" stop-color="#7a7a7a"/><stop offset="1" stop-color="#5a5a5a"/></linearGradient>
<linearGradient id="gSel" x1="0" y1="0" x2="0" y2="1"><stop offset="0" stop-color="#1c1c1c"/><stop offset="0.55" stop-color="#262626"/><stop offset="0.7" stop-color="#303030"/><stop offset="1" stop-color="#353535"/></linearGradient>
<linearGradient id="gCtl" x1="0" y1="0" x2="0" y2="1"><stop offset="0" stop-color="#b0b0b0"/><stop offset="1" stop-color="#7c7c7c"/></linearGradient>
<radialGradient id="gCtlC" cx="0.5" cy="0.35" r="0.65"><stop offset="0" stop-color="#7c7c7c"/><stop offset="0.8" stop-color="#989898"/><stop offset="1" stop-color="#b0b0b0"/></radialGradient>
<linearGradient id="gEdge" x1="0" y1="0" x2="1" y2="0"><stop offset="0" stop-color="#333" stop-opacity="0"/><stop offset="1" stop-color="#111"/></linearGradient>
</defs>
<rect x="0" y="0" width="1920" height="1044" fill="#333333"/>
<rect x="0" y="0" width="1920" height="17" fill="#591e4f"/>
<rect x="0" y="17" width="1920" height="49" fill="#232323"/>
<rect x="0" y="66" width="1" height="929" fill="#2a2a2a"/>
<path d="M7 2 L10 5 L7 8 L4 5 Z" fill="#f5c400"/>
<path d="M3.5 5.5 L6.5 8.5 L3.5 11.5 L0.5 8.5 Z" fill="#2aa8e8"/>
<path d="M10.5 5.5 L13.5 8.5 L10.5 11.5 L7.5 8.5 Z" fill="#2ac23a"/>
<path d="M7 9 L10 12 L7 15 L4 12 Z" fill="#e8306a"/>
<text x="17.5" y="12.5" font-size="10.5" fill="#e6dce6" textLength="290.5" lengthAdjust="spacingAndGlyphs">Calman 2025 Calman Ultimate for Business 92 Days Remaining  - Untitled</text>
<line x1="1827" y1="8.5" x2="1837" y2="8.5" stroke="#e0d0e0" stroke-width="1"/>
<rect x="1862.5" y="5" width="6.5" height="6.5" fill="none" stroke="#e0d0e0" stroke-width="1"/>
<path d="M1864.5 5 V3.5 H1871 V10 H1869" fill="none" stroke="#e0d0e0" stroke-width="1"/>
<path d="M1896.5 4 L1905.5 13 M1905.5 4 L1896.5 13" stroke="#e0d0e0" stroke-width="1.1"/>
<path d="M1 17 H137 V35 Q137 39 133 39 H5 Q1 39 1 35 Z" fill="url(#gRed)" stroke="#4a4a4a" stroke-width="0.8"/>
<g transform="translate(25.5,27.5) rotate(45)"><rect x="-6.1" y="-6.1" width="12.2" height="12.2" rx="1.5" fill="none" stroke="#fff" stroke-width="1.5"/><rect x="-4.35" y="-4.35" width="2.5" height="2.5" rx="0.6" fill="#fff"/><rect x="-4.35" y="-1.25" width="2.5" height="2.5" rx="0.6" fill="#fff"/><rect x="-4.35" y="1.85" width="2.5" height="2.5" rx="0.6" fill="#fff"/><rect x="-1.25" y="-4.35" width="2.5" height="2.5" rx="0.6" fill="#fff"/><rect x="-1.25" y="-1.25" width="2.5" height="2.5" rx="0.6" fill="#fff"/><rect x="-1.25" y="1.85" width="2.5" height="2.5" rx="0.6" fill="#fff"/><rect x="1.85" y="-4.35" width="2.5" height="2.5" rx="0.6" fill="#fff"/><rect x="1.85" y="-1.25" width="2.5" height="2.5" rx="0.6" fill="#fff"/><rect x="1.85" y="1.85" width="2.5" height="2.5" rx="0.6" fill="#fff"/></g>
<text x="37.3" y="32.8" font-size="20" fill="#ffffff" textLength="64" lengthAdjust="spacingAndGlyphs">calman</text>
<circle cx="124.5" cy="27.5" r="7.2" fill="url(#gDd)"/>
<path d="M120.8 26 H128.2 L124.5 30 Z" fill="#fff"/>
<rect x="142" y="26" width="1778" height="4" fill="url(#gRain)"/>
<rect x="-2" y="43.2" width="22" height="21" rx="2.5" fill="url(#gBtn)" stroke="#8a8a8a" stroke-width="0.8"/>
<circle cx="9.6" cy="53.5" r="7" fill="#6a6a6a"/>
<path d="M7.5 49 L12.5 53.5 L7.5 58 Z" fill="#fff"/>
<path d="M22 66 V46 Q22 43.2 25 43.2 H87.5 Q90.5 43.2 90.5 46 V66 Z" fill="url(#gTab)" stroke="#555" stroke-width="0.8"/>
<line x1="65.5" y1="44" x2="65.5" y2="66" stroke="#555" stroke-width="0.8"/>
<text x="26.5" y="58.8" font-size="10.5" fill="#d8d8d8" textLength="35" lengthAdjust="spacingAndGlyphs">History 1</text>
<circle cx="77.5" cy="56" r="5.5" fill="#3a3a3a"/>
<text x="77.5" y="59.5" font-size="10" fill="#777" text-anchor="middle">+</text>
<path d="M1492.6 66 V45.5 Q1492.6 43.3 1494.6 43.3 H1597 Q1599 43.3 1599 45.5 V66 Z" fill="url(#gWid)"/>
<rect x="1492.6" y="43.3" width="3.5" height="22.7" fill="#22dd22"/>
<text x="1499" y="52.5" font-size="8.2" fill="#e8e8e8" textLength="49" lengthAdjust="spacingAndGlyphs">X-Rite i1Pro 3</text>
<text x="1499" y="63.3" font-size="8.2" fill="#e8e8e8" textLength="42" lengthAdjust="spacingAndGlyphs">Direct View</text>
<circle cx="1558" cy="54.5" r="7" fill="url(#gArr)"/>
<path d="M1554.5 53.0 H1561.5 L1558 56.5 Z" fill="#fff"/>
<line x1="1572.8" y1="44" x2="1572.8" y2="66" stroke="#333" stroke-width="0.8"/>
<circle cx="1587.7" cy="54.4" r="9.3" fill="#0000ee" stroke="#fff" stroke-width="0.8"/>
<text x="1587.7" y="57.3" font-size="7.5" fill="#fff" text-anchor="middle" textLength="13" lengthAdjust="spacingAndGlyphs">710</text>
<path d="M1603.7 66 V45.5 Q1603.7 43.3 1605.7 43.3 H1758 Q1760 43.3 1760 45.5 V66 Z" fill="url(#gWid)"/>
<rect x="1603.7" y="43.3" width="3.5" height="22.7" fill="#22dd22"/>
<text x="1610.5" y="52.5" font-size="8.2" fill="#e8e8e8" textLength="128" lengthAdjust="spacingAndGlyphs">CalMAN Client 3 Pattern Generator</text>
<circle cx="1747.5" cy="54.5" r="7" fill="url(#gArr)"/>
<path d="M1744.0 53.0 H1751.0 L1747.5 56.5 Z" fill="#fff"/>
<path d="M1764.6 66 V45.5 Q1764.6 43.3 1766.6 43.3 H1869.8 Q1871.8 43.3 1871.8 45.5 V66 Z" fill="url(#gWid)"/>
<rect x="1764.6" y="43.3" width="3.5" height="22.7" fill="#e8e000"/>
<text x="1771.3" y="52.5" font-size="8.2" fill="#e8e8e8" textLength="79.5" lengthAdjust="spacingAndGlyphs">Direct Display Control</text>
<circle cx="1860" cy="54.5" r="7" fill="url(#gArr)"/>
<path d="M1856.5 53.0 H1863.5 L1860 56.5 Z" fill="#fff"/>
<rect x="1874" y="43" width="25.3" height="21.6" rx="2.5" fill="url(#gBtn)" stroke="#b0b0b0" stroke-width="0.8"/>
<circle cx="1886.6" cy="53.8" r="6.5" fill="#6a6a6a"/>
<g transform="translate(1886.6,53.8)"><rect x="-1.1" y="-5.4" width="2.2" height="2.4" fill="#e0e0e0" transform="rotate(0)"/><rect x="-1.1" y="-5.4" width="2.2" height="2.4" fill="#e0e0e0" transform="rotate(45)"/><rect x="-1.1" y="-5.4" width="2.2" height="2.4" fill="#e0e0e0" transform="rotate(90)"/><rect x="-1.1" y="-5.4" width="2.2" height="2.4" fill="#e0e0e0" transform="rotate(135)"/><rect x="-1.1" y="-5.4" width="2.2" height="2.4" fill="#e0e0e0" transform="rotate(180)"/><rect x="-1.1" y="-5.4" width="2.2" height="2.4" fill="#e0e0e0" transform="rotate(225)"/><rect x="-1.1" y="-5.4" width="2.2" height="2.4" fill="#e0e0e0" transform="rotate(270)"/><rect x="-1.1" y="-5.4" width="2.2" height="2.4" fill="#e0e0e0" transform="rotate(315)"/><circle r="3.7" fill="#e0e0e0"/><circle r="1.9" fill="#6a6a6a"/></g>
<rect x="1900.5" y="43" width="22" height="21.6" rx="2" fill="url(#gBtn)" stroke="#777" stroke-width="0.8"/>
<circle cx="1911" cy="53.8" r="7" fill="#6a6a6a"/>
<path d="M1913 49.5 L1908.5 53.8 L1913 58 Z" fill="#fff"/>
<text x="34.8" y="133" font-size="45" fill="#f2f2f2" textLength="374" lengthAdjust="spacingAndGlyphs">Saturation Sweeps</text>
<text x="215.2" y="189" font-size="15.5" fill="#e2e2e2" text-anchor="middle" textLength="92.5" lengthAdjust="spacingAndGlyphs">DeltaE 2000</text>
<rect x="58" y="195.4" width="355.5" height="471.3" fill="#232323"/>
<line x1="105.4" y1="195.4" x2="105.4" y2="666.7" stroke="#9c9c9c" stroke-width="1.6"/>
<line x1="152.8" y1="195.4" x2="152.8" y2="666.7" stroke="#9c9c9c" stroke-width="1.6"/>
<line x1="200.2" y1="195.4" x2="200.2" y2="666.7" stroke="#9c9c9c" stroke-width="1.6"/>
<line x1="247.6" y1="195.4" x2="247.6" y2="666.7" stroke="#9c9c9c" stroke-width="1.6"/>
<line x1="295" y1="195.4" x2="295" y2="666.7" stroke="#9c9c9c" stroke-width="1.6"/>
<line x1="342.4" y1="195.4" x2="342.4" y2="666.7" stroke="#9c9c9c" stroke-width="1.6"/>
<line x1="389.8" y1="195.4" x2="389.8" y2="666.7" stroke="#9c9c9c" stroke-width="1.6"/>
<line x1="58" y1="195.4" x2="413.5" y2="195.4" stroke="#a8a8a8" stroke-width="1.8"/>
<line x1="413.5" y1="195.4" x2="413.5" y2="666.7" stroke="#a8a8a8" stroke-width="1.6"/>
<line x1="58" y1="195.4" x2="58" y2="666.7" stroke="#a8a8a8" stroke-width="1.8"/>
<line x1="51" y1="666.7" x2="413.5" y2="666.7" stroke="#a8a8a8" stroke-width="1.8"/>
<line x1="51.5" y1="195.4" x2="58" y2="195.4" stroke="#a8a8a8" stroke-width="1.6"/>
<line x1="51.5" y1="273.95" x2="58" y2="273.95" stroke="#a8a8a8" stroke-width="1.6"/>
<line x1="51.5" y1="352.5" x2="58" y2="352.5" stroke="#a8a8a8" stroke-width="1.6"/>
<line x1="51.5" y1="431.05" x2="58" y2="431.05" stroke="#a8a8a8" stroke-width="1.6"/>
<line x1="51.5" y1="509.6" x2="58" y2="509.6" stroke="#a8a8a8" stroke-width="1.6"/>
<line x1="51.5" y1="588.15" x2="58" y2="588.15" stroke="#a8a8a8" stroke-width="1.6"/>
<line x1="51.5" y1="666.7" x2="58" y2="666.7" stroke="#a8a8a8" stroke-width="1.6"/>
<line x1="58" y1="666.7" x2="58" y2="673" stroke="#a8a8a8" stroke-width="1.6"/>
<text x="58" y="692.2" font-size="17.3" fill="#e2e2e2" text-anchor="middle">0</text>
<line x1="105.4" y1="666.7" x2="105.4" y2="673" stroke="#a8a8a8" stroke-width="1.6"/>
<text x="105.4" y="692.2" font-size="17.3" fill="#e2e2e2" text-anchor="middle">2</text>
<line x1="152.8" y1="666.7" x2="152.8" y2="673" stroke="#a8a8a8" stroke-width="1.6"/>
<text x="152.8" y="692.2" font-size="17.3" fill="#e2e2e2" text-anchor="middle">4</text>
<line x1="200.2" y1="666.7" x2="200.2" y2="673" stroke="#a8a8a8" stroke-width="1.6"/>
<text x="200.2" y="692.2" font-size="17.3" fill="#e2e2e2" text-anchor="middle">6</text>
<line x1="247.6" y1="666.7" x2="247.6" y2="673" stroke="#a8a8a8" stroke-width="1.6"/>
<text x="247.6" y="692.2" font-size="17.3" fill="#e2e2e2" text-anchor="middle">8</text>
<line x1="295" y1="666.7" x2="295" y2="673" stroke="#a8a8a8" stroke-width="1.6"/>
<text x="295" y="692.2" font-size="17.3" fill="#e2e2e2" text-anchor="middle" textLength="19" lengthAdjust="spacingAndGlyphs">10</text>
<line x1="342.4" y1="666.7" x2="342.4" y2="673" stroke="#a8a8a8" stroke-width="1.6"/>
<text x="342.4" y="692.2" font-size="17.3" fill="#e2e2e2" text-anchor="middle" textLength="19" lengthAdjust="spacingAndGlyphs">12</text>
<line x1="389.8" y1="666.7" x2="389.8" y2="673" stroke="#a8a8a8" stroke-width="1.6"/>
<text x="389.8" y="692.2" font-size="17.3" fill="#e2e2e2" text-anchor="middle" textLength="19" lengthAdjust="spacingAndGlyphs">14</text>
<text x="57.3" y="242.5" font-size="17.3" fill="#e2e2e2" text-anchor="end" textLength="40.2" lengthAdjust="spacingAndGlyphs">100%</text>
<text x="57.3" y="320" font-size="17.3" fill="#e2e2e2" text-anchor="end" textLength="31.6" lengthAdjust="spacingAndGlyphs">80%</text>
<text x="57.3" y="399" font-size="17.3" fill="#e2e2e2" text-anchor="end" textLength="31.6" lengthAdjust="spacingAndGlyphs">60%</text>
<text x="57.3" y="478.3" font-size="17.3" fill="#e2e2e2" text-anchor="end" textLength="31.6" lengthAdjust="spacingAndGlyphs">40%</text>
<text x="57.3" y="556.5" font-size="17.3" fill="#e2e2e2" text-anchor="end" textLength="31.6" lengthAdjust="spacingAndGlyphs">20%</text>
<text x="57.3" y="634.8" font-size="17.3" fill="#e2e2e2" text-anchor="end" textLength="27.2" lengthAdjust="spacingAndGlyphs">100</text>
<rect x="58" y="203" width="22" height="8.2" fill="#000"/>
<rect x="58.6" y="204" width="19.4" height="5.8" fill="#cc1c1c"/>
<rect x="58.6" y="204" width="19.4" height="5.8" fill="url(#gBarSh)"/>
<rect x="58" y="212.3" width="13.1" height="8.2" fill="#000"/>
<rect x="58.6" y="213.3" width="10.5" height="5.8" fill="#18b818"/>
<rect x="58.6" y="213.3" width="10.5" height="5.8" fill="url(#gBarSh)"/>
<rect x="58" y="221.6" width="31.6" height="8.2" fill="#000"/>
<rect x="58.6" y="222.6" width="29" height="5.8" fill="#1414bc"/>
<rect x="58.6" y="222.6" width="29" height="5.8" fill="url(#gBarSh)"/>
<rect x="58" y="230.9" width="22.1" height="8.2" fill="#000"/>
<rect x="58.6" y="231.9" width="19.5" height="5.8" fill="#18b8b8"/>
<rect x="58.6" y="231.9" width="19.5" height="5.8" fill="url(#gBarSh)"/>
<rect x="58" y="240.2" width="9.6" height="8.2" fill="#000"/>
<rect x="58.6" y="241.2" width="7" height="5.8" fill="#cc18cc"/>
<rect x="58.6" y="241.2" width="7" height="5.8" fill="url(#gBarSh)"/>
<rect x="58" y="249.5" width="19.1" height="8.2" fill="#000"/>
<rect x="58.6" y="250.5" width="16.5" height="5.8" fill="#c8c818"/>
<rect x="58.6" y="250.5" width="16.5" height="5.8" fill="url(#gBarSh)"/>
<rect x="58" y="281.55" width="25" height="8.2" fill="#000"/>
<rect x="58.6" y="282.55" width="22.4" height="5.8" fill="#d05050"/>
<rect x="58.6" y="282.55" width="22.4" height="5.8" fill="url(#gBarSh)"/>
<rect x="58" y="290.85" width="10.4" height="8.2" fill="#000"/>
<rect x="58.6" y="291.85" width="7.8" height="5.8" fill="#44bb44"/>
<rect x="58.6" y="291.85" width="7.8" height="5.8" fill="url(#gBarSh)"/>
<rect x="58" y="300.15" width="37.2" height="8.2" fill="#000"/>
<rect x="58.6" y="301.15" width="34.6" height="5.8" fill="#5a5ad0"/>
<rect x="58.6" y="301.15" width="34.6" height="5.8" fill="url(#gBarSh)"/>
<rect x="58" y="309.45" width="19.9" height="8.2" fill="#000"/>
<rect x="58.6" y="310.45" width="17.3" height="5.8" fill="#50c0c0"/>
<rect x="58.6" y="310.45" width="17.3" height="5.8" fill="url(#gBarSh)"/>
<rect x="58" y="318.75" width="15" height="8.2" fill="#000"/>
<rect x="58.6" y="319.75" width="12.4" height="5.8" fill="#cc55cc"/>
<rect x="58.6" y="319.75" width="12.4" height="5.8" fill="url(#gBarSh)"/>
<rect x="58" y="328.05" width="19.9" height="8.2" fill="#000"/>
<rect x="58.6" y="329.05" width="17.3" height="5.8" fill="#c8c850"/>
<rect x="58.6" y="329.05" width="17.3" height="5.8" fill="url(#gBarSh)"/>
<rect x="58" y="360.1" width="25.3" height="8.2" fill="#000"/>
<rect x="58.6" y="361.1" width="22.7" height="5.8" fill="#d06060"/>
<rect x="58.6" y="361.1" width="22.7" height="5.8" fill="url(#gBarSh)"/>
<rect x="58" y="369.4" width="10.4" height="8.2" fill="#000"/>
<rect x="58.6" y="370.4" width="7.8" height="5.8" fill="#55b855"/>
<rect x="58.6" y="370.4" width="7.8" height="5.8" fill="url(#gBarSh)"/>
<rect x="58" y="378.7" width="31.1" height="8.2" fill="#000"/>
<rect x="58.6" y="379.7" width="28.5" height="5.8" fill="#7070d0"/>
<rect x="58.6" y="379.7" width="28.5" height="5.8" fill="url(#gBarSh)"/>
<rect x="58" y="388" width="19.9" height="8.2" fill="#000"/>
<rect x="58.6" y="389" width="17.3" height="5.8" fill="#70c0c0"/>
<rect x="58.6" y="389" width="17.3" height="5.8" fill="url(#gBarSh)"/>
<rect x="58" y="397.3" width="13.5" height="8.2" fill="#000"/>
<rect x="58.6" y="398.3" width="10.9" height="5.8" fill="#cc70cc"/>
<rect x="58.6" y="398.3" width="10.9" height="5.8" fill="url(#gBarSh)"/>
<rect x="58" y="406.6" width="18.6" height="8.2" fill="#000"/>
<rect x="58.6" y="407.6" width="16" height="5.8" fill="#c8c870"/>
<rect x="58.6" y="407.6" width="16" height="5.8" fill="url(#gBarSh)"/>
<rect x="58" y="438.65" width="18.9" height="8.2" fill="#000"/>
<rect x="58.6" y="439.65" width="16.3" height="5.8" fill="#c87878"/>
<rect x="58.6" y="439.65" width="16.3" height="5.8" fill="url(#gBarSh)"/>
<rect x="58" y="447.95" width="7.3" height="8.2" fill="#000"/>
<rect x="58.6" y="448.95" width="4.7" height="5.8" fill="#66b866"/>
<rect x="58.6" y="448.95" width="4.7" height="5.8" fill="url(#gBarSh)"/>
<rect x="58" y="457.25" width="21.8" height="8.2" fill="#000"/>
<rect x="58.6" y="458.25" width="19.2" height="5.8" fill="#8888cc"/>
<rect x="58.6" y="458.25" width="19.2" height="5.8" fill="url(#gBarSh)"/>
<rect x="58" y="466.55" width="13.5" height="8.2" fill="#000"/>
<rect x="58.6" y="467.55" width="10.9" height="5.8" fill="#88c0c0"/>
<rect x="58.6" y="467.55" width="10.9" height="5.8" fill="url(#gBarSh)"/>
<rect x="58" y="475.85" width="13.8" height="8.2" fill="#000"/>
<rect x="58.6" y="476.85" width="11.2" height="5.8" fill="#c888c8"/>
<rect x="58.6" y="476.85" width="11.2" height="5.8" fill="url(#gBarSh)"/>
<rect x="58" y="485.15" width="17.5" height="8.2" fill="#000"/>
<rect x="58.6" y="486.15" width="14.9" height="5.8" fill="#c8c890"/>
<rect x="58.6" y="486.15" width="14.9" height="5.8" fill="url(#gBarSh)"/>
<rect x="58" y="517.2" width="21.8" height="8.2" fill="#000"/>
<rect x="58.6" y="518.2" width="19.2" height="5.8" fill="#c89898"/>
<rect x="58.6" y="518.2" width="19.2" height="5.8" fill="url(#gBarSh)"/>
<rect x="58" y="526.5" width="7.3" height="8.2" fill="#000"/>
<rect x="58.6" y="527.5" width="4.7" height="5.8" fill="#88b888"/>
<rect x="58.6" y="527.5" width="4.7" height="5.8" fill="url(#gBarSh)"/>
<rect x="58" y="535.8" width="12.7" height="8.2" fill="#000"/>
<rect x="58.6" y="536.8" width="10.1" height="5.8" fill="#a0a0c8"/>
<rect x="58.6" y="536.8" width="10.1" height="5.8" fill="url(#gBarSh)"/>
<rect x="58" y="545.1" width="7.3" height="8.2" fill="#000"/>
<rect x="58.6" y="546.1" width="4.7" height="5.8" fill="#a8c0c0"/>
<rect x="58.6" y="546.1" width="4.7" height="5.8" fill="url(#gBarSh)"/>
<rect x="58" y="554.4" width="13.8" height="8.2" fill="#000"/>
<rect x="58.6" y="555.4" width="11.2" height="5.8" fill="#c8a0c8"/>
<rect x="58.6" y="555.4" width="11.2" height="5.8" fill="url(#gBarSh)"/>
<rect x="58" y="563.7" width="17.5" height="8.2" fill="#000"/>
<rect x="58.6" y="564.7" width="14.9" height="5.8" fill="#c0c0a0"/>
<rect x="58.6" y="564.7" width="14.9" height="5.8" fill="url(#gBarSh)"/>
<rect x="58" y="651" width="25.8" height="9" fill="#000"/>
<rect x="58.6" y="652.2" width="23" height="6" fill="#f0f0f0"/>
<rect x="58.6" y="652.2" width="23" height="6" fill="url(#gBarSh)"/>
<rect x="474.2" y="119.2" width="164.7" height="360" fill="#232323"/>
<line x1="474.2" y1="119.2" x2="638.9" y2="119.2" stroke="#a8a8a8" stroke-width="1.8"/>
<line x1="467.2" y1="119.2" x2="474.2" y2="119.2" stroke="#a8a8a8" stroke-width="1.6"/>
<text x="466.4" y="125.5" font-size="16.3" fill="#e2e2e2" text-anchor="end">15</text>
<line x1="474.2" y1="180" x2="638.9" y2="180" stroke="#9c9c9c" stroke-width="1.5"/>
<line x1="467.2" y1="180" x2="474.2" y2="180" stroke="#a8a8a8" stroke-width="1.6"/>
<text x="466.4" y="186.3" font-size="16.3" fill="#e2e2e2" text-anchor="end">10</text>
<line x1="474.2" y1="238.8" x2="638.9" y2="238.8" stroke="#9c9c9c" stroke-width="1.5"/>
<line x1="467.2" y1="238.8" x2="474.2" y2="238.8" stroke="#a8a8a8" stroke-width="1.6"/>
<text x="466.4" y="245.1" font-size="16.3" fill="#e2e2e2" text-anchor="end">5</text>
<line x1="474.2" y1="299.3" x2="638.9" y2="299.3" stroke="#9c9c9c" stroke-width="1.5"/>
<line x1="467.2" y1="299.3" x2="474.2" y2="299.3" stroke="#a8a8a8" stroke-width="1.6"/>
<text x="466.4" y="305.6" font-size="16.3" fill="#e2e2e2" text-anchor="end">0</text>
<line x1="474.2" y1="359.7" x2="638.9" y2="359.7" stroke="#9c9c9c" stroke-width="1.5"/>
<line x1="467.2" y1="359.7" x2="474.2" y2="359.7" stroke="#a8a8a8" stroke-width="1.6"/>
<text x="466.4" y="366" font-size="16.3" fill="#e2e2e2" text-anchor="end">-5</text>
<line x1="474.2" y1="420.4" x2="638.9" y2="420.4" stroke="#9c9c9c" stroke-width="1.5"/>
<line x1="467.2" y1="420.4" x2="474.2" y2="420.4" stroke="#a8a8a8" stroke-width="1.6"/>
<text x="466.4" y="426.7" font-size="16.3" fill="#e2e2e2" text-anchor="end">-10</text>
<line x1="474.2" y1="479.2" x2="638.9" y2="479.2" stroke="#a8a8a8" stroke-width="1.8"/>
<line x1="467.2" y1="479.2" x2="474.2" y2="479.2" stroke="#a8a8a8" stroke-width="1.6"/>
<text x="466.4" y="485.5" font-size="16.3" fill="#e2e2e2" text-anchor="end">-15</text>
<line x1="474.2" y1="119.2" x2="474.2" y2="485.7" stroke="#a8a8a8" stroke-width="1.8"/>
<line x1="638.9" y1="119.2" x2="638.9" y2="485.7" stroke="#a8a8a8" stroke-width="1.6"/>
<text x="541.4" y="112" font-size="16" fill="#e2e2e2" text-anchor="middle" textLength="50.8" lengthAdjust="spacingAndGlyphs">Delta L</text>
<text x="556.2" y="497" font-size="16.5" fill="#e2e2e2" text-anchor="middle" textLength="40.4" lengthAdjust="spacingAndGlyphs">100%</text>
<rect x="490.7" y="297.2" width="131.5" height="3.6" fill="#000"/>
<rect x="699" y="119.2" width="164.7" height="360" fill="#232323"/>
<line x1="699" y1="119.2" x2="863.7" y2="119.2" stroke="#a8a8a8" stroke-width="1.8"/>
<line x1="692" y1="119.2" x2="699" y2="119.2" stroke="#a8a8a8" stroke-width="1.6"/>
<text x="691.2" y="125.5" font-size="16.3" fill="#e2e2e2" text-anchor="end">15</text>
<line x1="699" y1="180" x2="863.7" y2="180" stroke="#9c9c9c" stroke-width="1.5"/>
<line x1="692" y1="180" x2="699" y2="180" stroke="#a8a8a8" stroke-width="1.6"/>
<text x="691.2" y="186.3" font-size="16.3" fill="#e2e2e2" text-anchor="end">10</text>
<line x1="699" y1="238.8" x2="863.7" y2="238.8" stroke="#9c9c9c" stroke-width="1.5"/>
<line x1="692" y1="238.8" x2="699" y2="238.8" stroke="#a8a8a8" stroke-width="1.6"/>
<text x="691.2" y="245.1" font-size="16.3" fill="#e2e2e2" text-anchor="end">5</text>
<line x1="699" y1="299.3" x2="863.7" y2="299.3" stroke="#9c9c9c" stroke-width="1.5"/>
<line x1="692" y1="299.3" x2="699" y2="299.3" stroke="#a8a8a8" stroke-width="1.6"/>
<text x="691.2" y="305.6" font-size="16.3" fill="#e2e2e2" text-anchor="end">0</text>
<line x1="699" y1="359.7" x2="863.7" y2="359.7" stroke="#9c9c9c" stroke-width="1.5"/>
<line x1="692" y1="359.7" x2="699" y2="359.7" stroke="#a8a8a8" stroke-width="1.6"/>
<text x="691.2" y="366" font-size="16.3" fill="#e2e2e2" text-anchor="end">-5</text>
<line x1="699" y1="420.4" x2="863.7" y2="420.4" stroke="#9c9c9c" stroke-width="1.5"/>
<line x1="692" y1="420.4" x2="699" y2="420.4" stroke="#a8a8a8" stroke-width="1.6"/>
<text x="691.2" y="426.7" font-size="16.3" fill="#e2e2e2" text-anchor="end">-10</text>
<line x1="699" y1="479.2" x2="863.7" y2="479.2" stroke="#a8a8a8" stroke-width="1.8"/>
<line x1="692" y1="479.2" x2="699" y2="479.2" stroke="#a8a8a8" stroke-width="1.6"/>
<text x="691.2" y="485.5" font-size="16.3" fill="#e2e2e2" text-anchor="end">-15</text>
<line x1="699" y1="119.2" x2="699" y2="485.7" stroke="#a8a8a8" stroke-width="1.8"/>
<line x1="863.7" y1="119.2" x2="863.7" y2="485.7" stroke="#a8a8a8" stroke-width="1.6"/>
<text x="766.2" y="112" font-size="16" fill="#e2e2e2" text-anchor="middle" textLength="53" lengthAdjust="spacingAndGlyphs">Delta C</text>
<text x="781" y="497" font-size="16.5" fill="#e2e2e2" text-anchor="middle" textLength="40.4" lengthAdjust="spacingAndGlyphs">100%</text>
<rect x="715.4" y="298.4" width="131.8" height="5.4" fill="#000"/>
<rect x="716.8" y="300" width="129" height="2" fill="#b8b20c"/>
<rect x="924" y="119.2" width="164.7" height="360" fill="#232323"/>
<line x1="924" y1="119.2" x2="1088.7" y2="119.2" stroke="#a8a8a8" stroke-width="1.8"/>
<line x1="917" y1="119.2" x2="924" y2="119.2" stroke="#a8a8a8" stroke-width="1.6"/>
<text x="916.2" y="125.5" font-size="16.3" fill="#e2e2e2" text-anchor="end">15</text>
<line x1="924" y1="180" x2="1088.7" y2="180" stroke="#9c9c9c" stroke-width="1.5"/>
<line x1="917" y1="180" x2="924" y2="180" stroke="#a8a8a8" stroke-width="1.6"/>
<text x="916.2" y="186.3" font-size="16.3" fill="#e2e2e2" text-anchor="end">10</text>
<line x1="924" y1="238.8" x2="1088.7" y2="238.8" stroke="#9c9c9c" stroke-width="1.5"/>
<line x1="917" y1="238.8" x2="924" y2="238.8" stroke="#a8a8a8" stroke-width="1.6"/>
<text x="916.2" y="245.1" font-size="16.3" fill="#e2e2e2" text-anchor="end">5</text>
<line x1="924" y1="299.3" x2="1088.7" y2="299.3" stroke="#9c9c9c" stroke-width="1.5"/>
<line x1="917" y1="299.3" x2="924" y2="299.3" stroke="#a8a8a8" stroke-width="1.6"/>
<text x="916.2" y="305.6" font-size="16.3" fill="#e2e2e2" text-anchor="end">0</text>
<line x1="924" y1="359.7" x2="1088.7" y2="359.7" stroke="#9c9c9c" stroke-width="1.5"/>
<line x1="917" y1="359.7" x2="924" y2="359.7" stroke="#a8a8a8" stroke-width="1.6"/>
<text x="916.2" y="366" font-size="16.3" fill="#e2e2e2" text-anchor="end">-5</text>
<line x1="924" y1="420.4" x2="1088.7" y2="420.4" stroke="#9c9c9c" stroke-width="1.5"/>
<line x1="917" y1="420.4" x2="924" y2="420.4" stroke="#a8a8a8" stroke-width="1.6"/>
<text x="916.2" y="426.7" font-size="16.3" fill="#e2e2e2" text-anchor="end">-10</text>
<line x1="924" y1="479.2" x2="1088.7" y2="479.2" stroke="#a8a8a8" stroke-width="1.8"/>
<line x1="917" y1="479.2" x2="924" y2="479.2" stroke="#a8a8a8" stroke-width="1.6"/>
<text x="916.2" y="485.5" font-size="16.3" fill="#e2e2e2" text-anchor="end">-15</text>
<line x1="924" y1="119.2" x2="924" y2="485.7" stroke="#a8a8a8" stroke-width="1.8"/>
<line x1="1088.7" y1="119.2" x2="1088.7" y2="485.7" stroke="#a8a8a8" stroke-width="1.6"/>
<text x="991.2" y="112" font-size="16" fill="#e2e2e2" text-anchor="middle" textLength="54" lengthAdjust="spacingAndGlyphs">Delta H</text>
<text x="1006" y="497" font-size="16.5" fill="#e2e2e2" text-anchor="middle" textLength="40.4" lengthAdjust="spacingAndGlyphs">100%</text>
<rect x="940.5" y="298.8" width="131.5" height="18.6" fill="#000"/>
<rect x="941.6" y="300" width="129.3" height="16.2" fill="url(#gYelBar)"/>
<rect x="436.5" y="516.5" width="674.5" height="185.5" fill="#000"/>
<rect x="460.6" y="524.9" width="112.3" height="150.4" fill="#c0c0a0" stroke="#f4f4f4" stroke-width="1.5"/>
<text x="516.7" y="693" font-size="14" fill="#f4f4f4" text-anchor="middle" textLength="26" lengthAdjust="spacingAndGlyphs">20%</text>
<rect x="592.45" y="524.9" width="112.3" height="150.4" fill="#c2c086" stroke="#f4f4f4" stroke-width="1.5"/>
<text x="648.55" y="693" font-size="14" fill="#f4f4f4" text-anchor="middle" textLength="26" lengthAdjust="spacingAndGlyphs">40%</text>
<rect x="724.3" y="524.9" width="112.3" height="150.4" fill="#c3c06c" stroke="#f4f4f4" stroke-width="1.5"/>
<text x="780.4" y="693" font-size="14" fill="#f4f4f4" text-anchor="middle" textLength="26" lengthAdjust="spacingAndGlyphs">60%</text>
<rect x="856.15" y="524.9" width="112.3" height="150.4" fill="#c1bc4c" stroke="#f4f4f4" stroke-width="1.5"/>
<text x="912.25" y="693" font-size="14" fill="#f4f4f4" text-anchor="middle" textLength="26" lengthAdjust="spacingAndGlyphs">80%</text>
<rect x="988" y="524.9" width="112.3" height="150.4" fill="#c4c000" stroke="#f4f4f4" stroke-width="1.5"/>
<text x="1044.1" y="693" font-size="14" fill="#f4f4f4" text-anchor="middle" textLength="34" lengthAdjust="spacingAndGlyphs">100%</text>
<text transform="translate(452,577.7) rotate(-90)" font-size="15.6" fill="#f4f4f4" textLength="39.5" lengthAdjust="spacingAndGlyphs">Actual</text>
<text transform="translate(452,662.4) rotate(-90)" font-size="15.6" fill="#f4f4f4" textLength="39.5" lengthAdjust="spacingAndGlyphs">Target</text>
<rect x="1123" y="86" width="783.6" height="628" fill="none" stroke="#ffff00" stroke-width="8"/>
<text x="1514.7" y="109.2" font-size="15.5" fill="#e2e2e2" text-anchor="middle" textLength="84.6" lengthAdjust="spacingAndGlyphs">CIE 1931 xy</text>
<rect x="1160.4" y="116.3" width="738.4" height="561.6" fill="#232323"/>
<line x1="1160.4" y1="677.9" x2="1160.4" y2="684.3" stroke="#a8a8a8" stroke-width="1.6"/>
<line x1="1153.2" y1="677.9" x2="1160.4" y2="677.9" stroke="#a8a8a8" stroke-width="1.6"/>
<text x="1160.4" y="702.3" font-size="16.5" fill="#e2e2e2" text-anchor="middle">0</text>
<text x="1153" y="684" font-size="16.5" fill="#e2e2e2" text-anchor="end">0</text>
<line x1="1248.25" y1="677.9" x2="1248.25" y2="684.3" stroke="#a8a8a8" stroke-width="1.6"/>
<line x1="1153.2" y1="611.19" x2="1160.4" y2="611.19" stroke="#a8a8a8" stroke-width="1.6"/>
<text x="1248.25" y="702.3" font-size="16.5" fill="#e2e2e2" text-anchor="middle" textLength="23" lengthAdjust="spacingAndGlyphs">0,1</text>
<text x="1153" y="617.29" font-size="16.5" fill="#e2e2e2" text-anchor="end" textLength="23" lengthAdjust="spacingAndGlyphs">0,1</text>
<line x1="1336.1" y1="677.9" x2="1336.1" y2="684.3" stroke="#a8a8a8" stroke-width="1.6"/>
<line x1="1153.2" y1="544.48" x2="1160.4" y2="544.48" stroke="#a8a8a8" stroke-width="1.6"/>
<text x="1336.1" y="702.3" font-size="16.5" fill="#e2e2e2" text-anchor="middle" textLength="23" lengthAdjust="spacingAndGlyphs">0,2</text>
<text x="1153" y="550.58" font-size="16.5" fill="#e2e2e2" text-anchor="end" textLength="23" lengthAdjust="spacingAndGlyphs">0,2</text>
<line x1="1423.95" y1="677.9" x2="1423.95" y2="684.3" stroke="#a8a8a8" stroke-width="1.6"/>
<line x1="1153.2" y1="477.77" x2="1160.4" y2="477.77" stroke="#a8a8a8" stroke-width="1.6"/>
<text x="1423.95" y="702.3" font-size="16.5" fill="#e2e2e2" text-anchor="middle" textLength="23" lengthAdjust="spacingAndGlyphs">0,3</text>
<text x="1153" y="483.87" font-size="16.5" fill="#e2e2e2" text-anchor="end" textLength="23" lengthAdjust="spacingAndGlyphs">0,3</text>
<line x1="1511.8" y1="677.9" x2="1511.8" y2="684.3" stroke="#a8a8a8" stroke-width="1.6"/>
<line x1="1153.2" y1="411.06" x2="1160.4" y2="411.06" stroke="#a8a8a8" stroke-width="1.6"/>
<text x="1511.8" y="702.3" font-size="16.5" fill="#e2e2e2" text-anchor="middle" textLength="23" lengthAdjust="spacingAndGlyphs">0,4</text>
<text x="1153" y="417.16" font-size="16.5" fill="#e2e2e2" text-anchor="end" textLength="23" lengthAdjust="spacingAndGlyphs">0,4</text>
<line x1="1599.65" y1="677.9" x2="1599.65" y2="684.3" stroke="#a8a8a8" stroke-width="1.6"/>
<line x1="1153.2" y1="344.35" x2="1160.4" y2="344.35" stroke="#a8a8a8" stroke-width="1.6"/>
<text x="1599.65" y="702.3" font-size="16.5" fill="#e2e2e2" text-anchor="middle" textLength="23" lengthAdjust="spacingAndGlyphs">0,5</text>
<text x="1153" y="350.45" font-size="16.5" fill="#e2e2e2" text-anchor="end" textLength="23" lengthAdjust="spacingAndGlyphs">0,5</text>
<line x1="1687.5" y1="677.9" x2="1687.5" y2="684.3" stroke="#a8a8a8" stroke-width="1.6"/>
<line x1="1153.2" y1="277.64" x2="1160.4" y2="277.64" stroke="#a8a8a8" stroke-width="1.6"/>
<text x="1687.5" y="702.3" font-size="16.5" fill="#e2e2e2" text-anchor="middle" textLength="23" lengthAdjust="spacingAndGlyphs">0,6</text>
<text x="1153" y="283.74" font-size="16.5" fill="#e2e2e2" text-anchor="end" textLength="23" lengthAdjust="spacingAndGlyphs">0,6</text>
<line x1="1775.35" y1="677.9" x2="1775.35" y2="684.3" stroke="#a8a8a8" stroke-width="1.6"/>
<line x1="1153.2" y1="210.93" x2="1160.4" y2="210.93" stroke="#a8a8a8" stroke-width="1.6"/>
<text x="1775.35" y="702.3" font-size="16.5" fill="#e2e2e2" text-anchor="middle" textLength="23" lengthAdjust="spacingAndGlyphs">0,7</text>
<text x="1153" y="217.03" font-size="16.5" fill="#e2e2e2" text-anchor="end" textLength="23" lengthAdjust="spacingAndGlyphs">0,7</text>
<line x1="1863.2" y1="677.9" x2="1863.2" y2="684.3" stroke="#a8a8a8" stroke-width="1.6"/>
<line x1="1153.2" y1="144.22" x2="1160.4" y2="144.22" stroke="#a8a8a8" stroke-width="1.6"/>
<text x="1863.2" y="702.3" font-size="16.5" fill="#e2e2e2" text-anchor="middle" textLength="23" lengthAdjust="spacingAndGlyphs">0,8</text>
<text x="1153" y="150.32" font-size="16.5" fill="#e2e2e2" text-anchor="end" textLength="23" lengthAdjust="spacingAndGlyphs">0,8</text>
<line x1="1160.4" y1="116.3" x2="1898.8" y2="116.3" stroke="#a8a8a8" stroke-width="1.6"/>
<line x1="1898.8" y1="116.3" x2="1898.8" y2="677.9" stroke="#a8a8a8" stroke-width="1.6"/>
<line x1="1160.4" y1="116.3" x2="1160.4" y2="677.9" stroke="#a8a8a8" stroke-width="1.8"/>
<line x1="1160.4" y1="677.9" x2="1898.8" y2="677.9" stroke="#a8a8a8" stroke-width="1.8"/>
<path d="M1312.03 671.82 C1311.85 671.78 1311.31 671.73 1310.97 671.62 C1310.64 671.52 1310.37 671.37 1310.01 671.17 C1309.64 670.98 1309.28 670.77 1308.78 670.47 C1308.28 670.17 1307.68 669.8 1307.02 669.38 C1306.36 668.95 1305.67 668.46 1304.83 667.9 C1303.98 667.34 1303.07 666.76 1301.93 666.04 C1300.78 665.31 1299.45 664.49 1297.97 663.53 C1296.49 662.58 1294.9 661.61 1293.05 660.32 C1291.21 659.04 1289.17 657.67 1286.9 655.83 C1284.63 653.99 1282.35 652.29 1279.44 649.28 C1276.52 646.27 1273.21 642.8 1269.42 637.79 C1265.63 632.77 1261.49 627.23 1256.68 619.17 C1251.88 611.1 1246.6 601.9 1240.61 589.38 C1234.62 576.85 1227.47 562.06 1220.75 544.01 C1214.03 525.97 1206.9 504.68 1200.28 481.11 C1193.67 457.53 1186.49 429.65 1181.04 402.59 C1175.6 375.53 1170.47 345.65 1167.6 318.73 C1164.73 291.82 1162.99 264.63 1163.83 241.08 C1164.66 217.53 1167.49 194.92 1172.61 177.44 C1177.74 159.96 1185.73 145.51 1194.57 136.21 C1203.42 126.92 1214.65 123.25 1225.67 121.67 C1236.7 120.09 1248.95 123.64 1260.72 126.74 C1272.5 129.84 1284.78 135.33 1296.3 140.28 C1307.83 145.24 1318.9 150.76 1329.86 156.49 C1340.83 162.23 1351.43 168.34 1362.1 174.71 C1372.78 181.08 1383.36 187.83 1393.91 194.72 C1404.45 201.61 1414.89 208.8 1425.36 216.07 C1435.82 223.34 1446.25 230.81 1456.72 238.35 C1467.19 245.89 1477.71 253.59 1488.17 261.3 C1498.62 269 1509.05 276.82 1519.44 284.58 C1529.84 292.34 1540.28 300.14 1550.54 307.86 C1560.81 315.58 1571.01 323.3 1581.03 330.87 C1591.04 338.45 1600.97 345.97 1610.63 353.29 C1620.29 360.61 1629.83 367.83 1639.01 374.77 C1648.19 381.71 1657.21 388.48 1665.71 394.92 C1674.22 401.35 1682.46 407.65 1690.05 413.39 C1697.63 419.14 1704.59 424.39 1711.22 429.41 C1717.85 434.42 1724.16 439.2 1729.84 443.48 C1735.52 447.76 1740.63 451.56 1745.31 455.09 C1749.98 458.61 1754.1 461.77 1757.87 464.63 C1761.63 467.49 1764.88 469.96 1767.88 472.23 C1770.88 474.5 1773.48 476.42 1775.88 478.24 C1778.28 480.05 1780.33 481.62 1782.29 483.11 C1784.25 484.6 1786.02 485.94 1787.65 487.18 C1789.27 488.41 1790.72 489.52 1792.04 490.51 C1793.36 491.5 1794.53 492.35 1795.56 493.11 C1796.58 493.88 1797.41 494.53 1798.19 495.11 C1798.97 495.7 1799.63 496.2 1800.21 496.65 C1800.8 497.09 1801.46 497.59 1801.7 497.78 Z" fill="#2a1a40" transform="translate(1.2,2.6)"/>
<g clip-path="url(#cHS)">
<foreignObject x="1160" y="116" width="740" height="563"><div style="width:740px;height:563px;background:conic-gradient(from -122.71deg at 562.64px 341.76px,rgb(0,0,153) 0deg,rgb(0,0,153) 10deg,rgb(0,5,153) 11.12deg,rgb(0,10,153) 12.24deg,rgb(0,16,153) 13.36deg,rgb(0,21,153) 14.48deg,rgb(0,27,153) 15.6deg,rgb(0,33,153) 16.72deg,rgb(0,39,153) 17.85deg,rgb(0,46,153) 18.97deg,rgb(0,52,153) 20.09deg,rgb(0,59,153) 21.21deg,rgb(0,67,153) 22.33deg,rgb(0,74,153) 23.45deg,rgb(0,82,153) 24.57deg,rgb(0,91,153) 25.69deg,rgb(0,99,153) 26.81deg,rgb(0,109,153) 27.93deg,rgb(0,118,153) 29.05deg,rgb(0,129,153) 30.17deg,rgb(0,140,153) 31.29deg,rgb(0,151,153) 32.42deg,rgb(0,153,143) 33.54deg,rgb(0,153,132) 34.66deg,rgb(0,153,122) 35.78deg,rgb(0,153,113) 36.9deg,rgb(0,153,105) 38.02deg,rgb(0,153,97) 39.14deg,rgb(0,153,90) 40.26deg,rgb(0,153,83) 41.38deg,rgb(0,153,77) 42.5deg,rgb(0,153,71) 43.62deg,rgb(0,153,65) 44.74deg,rgb(0,153,60) 45.86deg,rgb(0,153,54) 46.99deg,rgb(0,153,50) 48.11deg,rgb(0,153,45) 49.23deg,rgb(0,153,41) 50.35deg,rgb(0,153,37) 51.47deg,rgb(0,153,33) 52.59deg,rgb(0,153,29) 53.71deg,rgb(0,153,25) 54.83deg,rgb(0,153,22) 55.95deg,rgb(0,153,18) 57.07deg,rgb(0,153,15) 58.19deg,rgb(0,153,12) 59.31deg,rgb(0,153,9) 60.43deg,rgb(0,153,6) 61.56deg,rgb(0,153,3) 62.68deg,rgb(0,153,0) 63.8deg,rgb(0,153,0) 360deg);clip-path:polygon(132.18px 521.87px,-1126.15px 1136.65px,-599.56px -430.14px,263.95px 161.64px)"></div></foreignObject>
<foreignObject x="1160" y="116" width="740" height="563"><div style="width:740px;height:563px;background:conic-gradient(from 10.09deg at 132.18px 521.87px,rgb(0,153,0) 0deg,rgb(0,153,0) 10deg,rgb(6,153,0) 10.98deg,rgb(11,153,0) 11.97deg,rgb(17,153,0) 12.95deg,rgb(23,153,0) 13.93deg,rgb(30,153,0) 14.92deg,rgb(36,153,0) 15.9deg,rgb(43,153,0) 16.88deg,rgb(50,153,0) 17.87deg,rgb(58,153,0) 18.85deg,rgb(65,153,0) 19.83deg,rgb(74,153,0) 20.82deg,rgb(82,153,0) 21.8deg,rgb(91,153,0) 22.78deg,rgb(100,153,0) 23.77deg,rgb(110,153,0) 24.75deg,rgb(121,153,0) 25.73deg,rgb(132,153,0) 26.72deg,rgb(144,153,0) 27.7deg,rgb(153,150,0) 28.68deg,rgb(153,138,0) 29.67deg,rgb(153,128,0) 30.65deg,rgb(153,118,0) 31.63deg,rgb(153,109,0) 32.62deg,rgb(153,101,0) 33.6deg,rgb(153,93,0) 34.58deg,rgb(153,86,0) 35.57deg,rgb(153,79,0) 36.55deg,rgb(153,73,0) 37.53deg,rgb(153,68,0) 38.52deg,rgb(153,62,0) 39.5deg,rgb(153,57,0) 40.48deg,rgb(153,52,0) 41.47deg,rgb(153,48,0) 42.45deg,rgb(153,43,0) 43.43deg,rgb(153,39,0) 44.42deg,rgb(153,36,0) 45.4deg,rgb(153,32,0) 46.38deg,rgb(153,28,0) 47.37deg,rgb(153,25,0) 48.35deg,rgb(153,22,0) 49.33deg,rgb(153,19,0) 50.32deg,rgb(153,16,0) 51.3deg,rgb(153,13,0) 52.28deg,rgb(153,10,0) 53.27deg,rgb(153,7,0) 54.25deg,rgb(153,5,0) 55.23deg,rgb(153,2,0) 56.22deg,rgb(153,0,0) 57.2deg,rgb(153,0,0) 360deg);clip-path:polygon(263.95px 161.64px,595.92px -940.68px,1883.82px -122.8px,562.64px 341.76px)"></div></foreignObject>
<foreignObject x="1160" y="116" width="740" height="563"><div style="width:740px;height:563px;background:conic-gradient(from 111.09deg at 263.95px 161.64px,rgb(153,0,0) 0deg,rgb(153,0,0) 10deg,rgb(153,0,2) 11.65deg,rgb(153,0,4) 13.29deg,rgb(153,0,7) 14.94deg,rgb(153,0,9) 16.58deg,rgb(153,0,11) 18.23deg,rgb(153,0,14) 19.88deg,rgb(153,0,16) 21.52deg,rgb(153,0,19) 23.17deg,rgb(153,0,21) 24.81deg,rgb(153,0,24) 26.46deg,rgb(153,0,27) 28.1deg,rgb(153,0,29) 29.75deg,rgb(153,0,32) 31.4deg,rgb(153,0,35) 33.04deg,rgb(153,0,38) 34.69deg,rgb(153,0,42) 36.33deg,rgb(153,0,45) 37.98deg,rgb(153,0,49) 39.63deg,rgb(153,0,52) 41.27deg,rgb(153,0,56) 42.92deg,rgb(153,0,60) 44.56deg,rgb(153,0,65) 46.21deg,rgb(153,0,70) 47.86deg,rgb(153,0,75) 49.5deg,rgb(153,0,80) 51.15deg,rgb(153,0,86) 52.79deg,rgb(153,0,92) 54.44deg,rgb(153,0,99) 56.08deg,rgb(153,0,106) 57.73deg,rgb(153,0,114) 59.38deg,rgb(153,0,123) 61.02deg,rgb(153,0,134) 62.67deg,rgb(153,0,145) 64.31deg,rgb(148,0,153) 65.96deg,rgb(136,0,153) 67.61deg,rgb(124,0,153) 69.25deg,rgb(112,0,153) 70.9deg,rgb(100,0,153) 72.54deg,rgb(89,0,153) 74.19deg,rgb(78,0,153) 75.83deg,rgb(68,0,153) 77.48deg,rgb(58,0,153) 79.13deg,rgb(48,0,153) 80.77deg,rgb(38,0,153) 82.42deg,rgb(28,0,153) 84.06deg,rgb(19,0,153) 85.71deg,rgb(9,0,153) 87.36deg,rgb(0,0,153) 89deg,rgb(0,0,153) 360deg);clip-path:polygon(562.64px 341.76px,1489px 829.31px,-325.5px 1578.21px,132.18px 521.87px)"></div></foreignObject>
<path d="M1423.95 277.64 L229.19 -442.83 L1951.05 -1163.3 Z" fill="#009900"/>
<path d="M1722.64 457.76 L2917.4 1178.22 L3444.5 -262.71 Z" fill="#990000"/>
<path d="M1292.18 637.87 L-429.68 1358.34 L765.08 2078.81 Z" fill="#000099"/>
</g>
<foreignObject x="1285" y="270" width="445" height="375"><div style="width:445px;height:375px;background:conic-gradient(from 0deg at 150.11px 188.42px,rgb(18,255,0) 0deg,rgb(29,255,0) 2deg,rgb(39,255,0) 4deg,rgb(49,255,0) 6deg,rgb(60,255,0) 8deg,rgb(71,255,0) 10deg,rgb(81,255,0) 12deg,rgb(92,255,0) 14deg,rgb(103,255,0) 16deg,rgb(115,255,0) 18deg,rgb(126,255,0) 20deg,rgb(138,255,0) 22deg,rgb(150,255,0) 24deg,rgb(163,255,0) 26deg,rgb(176,255,0) 28deg,rgb(190,255,0) 30deg,rgb(204,255,0) 32deg,rgb(219,255,0) 34deg,rgb(234,255,0) 36deg,rgb(250,255,0) 38deg,rgb(255,243,0) 40deg,rgb(255,227,0) 42deg,rgb(255,213,0) 44deg,rgb(255,199,0) 46deg,rgb(255,187,0) 48deg,rgb(255,174,0) 50deg,rgb(255,163,0) 52deg,rgb(255,152,0) 54deg,rgb(255,142,0) 56deg,rgb(255,131,0) 58deg,rgb(255,122,0) 60deg,rgb(255,112,0) 62deg,rgb(255,103,0) 64deg,rgb(255,95,0) 66deg,rgb(255,86,0) 68deg,rgb(255,78,0) 70deg,rgb(255,69,0) 72deg,rgb(255,61,0) 74deg,rgb(255,53,0) 76deg,rgb(255,46,0) 78deg,rgb(255,38,0) 80deg,rgb(255,30,0) 82deg,rgb(255,22,0) 84deg,rgb(255,15,0) 86deg,rgb(255,7,0) 88deg,rgb(255,0,1) 90deg,rgb(255,0,8) 92deg,rgb(255,0,15) 94deg,rgb(255,0,22) 96deg,rgb(255,0,28) 98deg,rgb(255,0,34) 100deg,rgb(255,0,40) 102deg,rgb(255,0,46) 104deg,rgb(255,0,52) 106deg,rgb(255,0,57) 108deg,rgb(255,0,62) 110deg,rgb(255,0,67) 112deg,rgb(255,0,72) 114deg,rgb(255,0,77) 116deg,rgb(255,0,82) 118deg,rgb(255,0,87) 120deg,rgb(255,0,92) 122deg,rgb(255,0,96) 124deg,rgb(255,0,101) 126deg,rgb(255,0,106) 128deg,rgb(255,0,110) 130deg,rgb(255,0,115) 132deg,rgb(255,0,120) 134deg,rgb(255,0,124) 136deg,rgb(255,0,129) 138deg,rgb(255,0,134) 140deg,rgb(255,0,139) 142deg,rgb(255,0,144) 144deg,rgb(255,0,149) 146deg,rgb(255,0,154) 148deg,rgb(255,0,160) 150deg,rgb(255,0,165) 152deg,rgb(255,0,171) 154deg,rgb(255,0,176) 156deg,rgb(255,0,182) 158deg,rgb(255,0,189) 160deg,rgb(255,0,195) 162deg,rgb(255,0,202) 164deg,rgb(255,0,209) 166deg,rgb(255,0,217) 168deg,rgb(255,0,225) 170deg,rgb(255,0,234) 172deg,rgb(255,0,243) 174deg,rgb(255,0,253) 176deg,rgb(247,0,255) 178deg,rgb(237,0,255) 180deg,rgb(226,0,255) 182deg,rgb(216,0,255) 184deg,rgb(205,0,255) 186deg,rgb(195,0,255) 188deg,rgb(184,0,255) 190deg,rgb(174,0,255) 192deg,rgb(163,0,255) 194deg,rgb(152,0,255) 196deg,rgb(140,0,255) 198deg,rgb(129,0,255) 200deg,rgb(117,0,255) 202deg,rgb(104,0,255) 204deg,rgb(92,0,255) 206deg,rgb(79,0,255) 208deg,rgb(65,0,255) 210deg,rgb(51,0,255) 212deg,rgb(36,0,255) 214deg,rgb(21,0,255) 216deg,rgb(5,0,255) 218deg,rgb(0,12,255) 220deg,rgb(0,28,255) 222deg,rgb(0,42,255) 224deg,rgb(0,56,255) 226deg,rgb(0,68,255) 228deg,rgb(0,81,255) 230deg,rgb(0,92,255) 232deg,rgb(0,103,255) 234deg,rgb(0,114,255) 236deg,rgb(0,124,255) 238deg,rgb(0,133,255) 240deg,rgb(0,143,255) 242deg,rgb(0,152,255) 244deg,rgb(0,160,255) 246deg,rgb(0,169,255) 248deg,rgb(0,177,255) 250deg,rgb(0,186,255) 252deg,rgb(0,194,255) 254deg,rgb(0,202,255) 256deg,rgb(0,209,255) 258deg,rgb(0,217,255) 260deg,rgb(0,225,255) 262deg,rgb(0,233,255) 264deg,rgb(0,240,255) 266deg,rgb(0,248,255) 268deg,rgb(0,255,255) 270deg,rgb(0,255,247) 272deg,rgb(0,255,240) 274deg,rgb(0,255,233) 276deg,rgb(0,255,227) 278deg,rgb(0,255,221) 280deg,rgb(0,255,215) 282deg,rgb(0,255,209) 284deg,rgb(0,255,204) 286deg,rgb(0,255,198) 288deg,rgb(0,255,193) 290deg,rgb(0,255,188) 292deg,rgb(0,255,183) 294deg,rgb(0,255,178) 296deg,rgb(0,255,173) 298deg,rgb(0,255,168) 300deg,rgb(0,255,163) 302deg,rgb(0,255,159) 304deg,rgb(0,255,154) 306deg,rgb(0,255,149) 308deg,rgb(0,255,145) 310deg,rgb(0,255,140) 312deg,rgb(0,255,135) 314deg,rgb(0,255,131) 316deg,rgb(0,255,126) 318deg,rgb(0,255,121) 320deg,rgb(0,255,116) 322deg,rgb(0,255,111) 324deg,rgb(0,255,106) 326deg,rgb(0,255,101) 328deg,rgb(0,255,96) 330deg,rgb(0,255,90) 332deg,rgb(0,255,84) 334deg,rgb(0,255,79) 336deg,rgb(0,255,73) 338deg,rgb(0,255,66) 340deg,rgb(0,255,60) 342deg,rgb(0,255,53) 344deg,rgb(0,255,46) 346deg,rgb(0,255,38) 348deg,rgb(0,255,30) 350deg,rgb(0,255,21) 352deg,rgb(0,255,12) 354deg,rgb(0,255,2) 356deg,rgb(8,255,0) 358deg,rgb(18,255,0) 360deg);clip-path:polygon(437.64px 187.76px,138.95px 7.64px,7.18px 367.87px)"></div></foreignObject>
<g clip-path="url(#cTri)"><path d="M1435.11 458.42 L2035.11 457.03 L2034.14 424.45 Z" fill="url(#gw0)" shape-rendering="crispEdges"/><path d="M1435.11 458.42 L2034.14 424.45 L2031.41 391.96 Z" fill="url(#gw1)" shape-rendering="crispEdges"/><path d="M1435.11 458.42 L2031.41 391.96 L2026.93 359.68 Z" fill="url(#gw2)" shape-rendering="crispEdges"/><path d="M1435.11 458.42 L2026.93 359.68 L2020.69 327.68 Z" fill="url(#gw3)" shape-rendering="crispEdges"/><path d="M1435.11 458.42 L2020.69 327.68 L2012.72 296.07 Z" fill="url(#gw4)" shape-rendering="crispEdges"/><path d="M1435.11 458.42 L2012.72 296.07 L2003.05 264.94 Z" fill="url(#gw5)" shape-rendering="crispEdges"/><path d="M1435.11 458.42 L2003.05 264.94 L1991.71 234.38 Z" fill="url(#gw6)" shape-rendering="crispEdges"/><path d="M1435.11 458.42 L1991.71 234.38 L1978.72 204.48 Z" fill="url(#gw7)" shape-rendering="crispEdges"/><path d="M1435.11 458.42 L1978.72 204.48 L1964.12 175.33 Z" fill="url(#gw8)" shape-rendering="crispEdges"/><path d="M1435.11 458.42 L1964.12 175.33 L1947.97 147.02 Z" fill="url(#gw9)" shape-rendering="crispEdges"/><path d="M1435.11 458.42 L1947.97 147.02 L1930.3 119.62 Z" fill="url(#gw10)" shape-rendering="crispEdges"/><path d="M1435.11 458.42 L1930.3 119.62 L1911.17 93.23 Z" fill="url(#gw11)" shape-rendering="crispEdges"/><path d="M1435.11 458.42 L1911.17 93.23 L1890.63 67.91 Z" fill="url(#gw12)" shape-rendering="crispEdges"/><path d="M1435.11 458.42 L1890.63 67.91 L1868.75 43.75 Z" fill="url(#gw13)" shape-rendering="crispEdges"/><path d="M1435.11 458.42 L1868.75 43.75 L1845.59 20.81 Z" fill="url(#gw14)" shape-rendering="crispEdges"/><path d="M1435.11 458.42 L1845.59 20.81 L1821.22 -0.84 Z" fill="url(#gw15)" shape-rendering="crispEdges"/><path d="M1435.11 458.42 L1821.22 -0.84 L1795.7 -21.13 Z" fill="url(#gw16)" shape-rendering="crispEdges"/><path d="M1435.11 458.42 L1795.7 -21.13 L1769.13 -40 Z" fill="url(#gw17)" shape-rendering="crispEdges"/><path d="M1435.11 458.42 L1769.13 -40 L1741.56 -57.41 Z" fill="url(#gw18)" shape-rendering="crispEdges"/><path d="M1435.11 458.42 L1741.56 -57.41 L1713.1 -73.29 Z" fill="url(#gw19)" shape-rendering="crispEdges"/><path d="M1435.11 458.42 L1713.1 -73.29 L1683.81 -87.6 Z" fill="url(#gw20)" shape-rendering="crispEdges"/><path d="M1435.11 458.42 L1683.81 -87.6 L1653.79 -100.31 Z" fill="url(#gw21)" shape-rendering="crispEdges"/><path d="M1435.11 458.42 L1653.79 -100.31 L1623.12 -111.36 Z" fill="url(#gw22)" shape-rendering="crispEdges"/><path d="M1435.11 458.42 L1623.12 -111.36 L1591.9 -120.73 Z" fill="url(#gw23)" shape-rendering="crispEdges"/><path d="M1435.11 458.42 L1591.9 -120.73 L1560.21 -128.39 Z" fill="url(#gw24)" shape-rendering="crispEdges"/><path d="M1435.11 458.42 L1560.21 -128.39 L1528.16 -134.32 Z" fill="url(#gw25)" shape-rendering="crispEdges"/><path d="M1435.11 458.42 L1528.16 -134.32 L1495.83 -138.5 Z" fill="url(#gw26)" shape-rendering="crispEdges"/><path d="M1435.11 458.42 L1495.83 -138.5 L1463.32 -140.91 Z" fill="url(#gw27)" shape-rendering="crispEdges"/><path d="M1435.11 458.42 L1463.32 -140.91 L1430.73 -141.56 Z" fill="url(#gw28)" shape-rendering="crispEdges"/><path d="M1435.11 458.42 L1430.73 -141.56 L1398.15 -140.44 Z" fill="url(#gw29)" shape-rendering="crispEdges"/><path d="M1435.11 458.42 L1398.15 -140.44 L1350.26 -135.55 Z" fill="url(#gw30)" shape-rendering="crispEdges"/><path d="M1435.11 458.42 L1350.26 -135.55 L1302.92 -126.83 Z" fill="url(#gw31)" shape-rendering="crispEdges"/><path d="M1435.11 458.42 L1302.92 -126.83 L1256.44 -114.36 Z" fill="url(#gw32)" shape-rendering="crispEdges"/><path d="M1435.11 458.42 L1256.44 -114.36 L1211.1 -98.19 Z" fill="url(#gw33)" shape-rendering="crispEdges"/><path d="M1435.11 458.42 L1211.1 -98.19 L1167.2 -78.44 Z" fill="url(#gw34)" shape-rendering="crispEdges"/><path d="M1435.11 458.42 L1167.2 -78.44 L1125.03 -55.24 Z" fill="url(#gw35)" shape-rendering="crispEdges"/><path d="M1435.11 458.42 L1125.03 -55.24 L1084.85 -28.73 Z" fill="url(#gw36)" shape-rendering="crispEdges"/><path d="M1435.11 458.42 L1084.85 -28.73 L1046.93 0.91 Z" fill="url(#gw37)" shape-rendering="crispEdges"/><path d="M1435.11 458.42 L1046.93 0.91 L1011.5 33.5 Z" fill="url(#gw38)" shape-rendering="crispEdges"/><path d="M1435.11 458.42 L1011.5 33.5 L978.81 68.82 Z" fill="url(#gw39)" shape-rendering="crispEdges"/><path d="M1435.11 458.42 L978.81 68.82 L949.04 106.65 Z" fill="url(#gw40)" shape-rendering="crispEdges"/><path d="M1435.11 458.42 L949.04 106.65 L922.41 146.75 Z" fill="url(#gw41)" shape-rendering="crispEdges"/><path d="M1435.11 458.42 L922.41 146.75 L899.08 188.85 Z" fill="url(#gw42)" shape-rendering="crispEdges"/><path d="M1435.11 458.42 L899.08 188.85 L879.19 232.68 Z" fill="url(#gw43)" shape-rendering="crispEdges"/><path d="M1435.11 458.42 L879.19 232.68 L862.89 277.97 Z" fill="url(#gw44)" shape-rendering="crispEdges"/><path d="M1435.11 458.42 L862.89 277.97 L850.26 324.42 Z" fill="url(#gw45)" shape-rendering="crispEdges"/><path d="M1435.11 458.42 L850.26 324.42 L841.4 371.73 Z" fill="url(#gw46)" shape-rendering="crispEdges"/><path d="M1435.11 458.42 L841.4 371.73 L836.36 419.6 Z" fill="url(#gw47)" shape-rendering="crispEdges"/><path d="M1435.11 458.42 L836.36 419.6 L835.18 467.72 Z" fill="url(#gw48)" shape-rendering="crispEdges"/><path d="M1435.11 458.42 L835.18 467.72 L837.85 515.78 Z" fill="url(#gw49)" shape-rendering="crispEdges"/><path d="M1435.11 458.42 L837.85 515.78 L844.37 563.47 Z" fill="url(#gw50)" shape-rendering="crispEdges"/><path d="M1435.11 458.42 L844.37 563.47 L854.7 610.49 Z" fill="url(#gw51)" shape-rendering="crispEdges"/><path d="M1435.11 458.42 L854.7 610.49 L868.75 656.52 Z" fill="url(#gw52)" shape-rendering="crispEdges"/><path d="M1435.11 458.42 L868.75 656.52 L886.45 701.28 Z" fill="url(#gw53)" shape-rendering="crispEdges"/><path d="M1435.11 458.42 L886.45 701.28 L907.69 744.48 Z" fill="url(#gw54)" shape-rendering="crispEdges"/><path d="M1435.11 458.42 L907.69 744.48 L932.31 785.84 Z" fill="url(#gw55)" shape-rendering="crispEdges"/><path d="M1435.11 458.42 L932.31 785.84 L960.18 825.09 Z" fill="url(#gw56)" shape-rendering="crispEdges"/><path d="M1435.11 458.42 L960.18 825.09 L991.1 861.98 Z" fill="url(#gw57)" shape-rendering="crispEdges"/><path d="M1435.11 458.42 L991.1 861.98 L1024.87 896.27 Z" fill="url(#gw58)" shape-rendering="crispEdges"/><path d="M1435.11 458.42 L1024.87 896.27 L1061.29 927.75 Z" fill="url(#gw59)" shape-rendering="crispEdges"/><path d="M1435.11 458.42 L1061.29 927.75 L1097.44 954.39 Z" fill="url(#gw60)" shape-rendering="crispEdges"/><path d="M1435.11 458.42 L1097.44 954.39 L1135.48 978.25 Z" fill="url(#gw61)" shape-rendering="crispEdges"/><path d="M1435.11 458.42 L1135.48 978.25 L1175.19 999.21 Z" fill="url(#gw62)" shape-rendering="crispEdges"/><path d="M1435.11 458.42 L1175.19 999.21 L1216.36 1017.13 Z" fill="url(#gw63)" shape-rendering="crispEdges"/><path d="M1435.11 458.42 L1216.36 1017.13 L1258.76 1031.92 Z" fill="url(#gw64)" shape-rendering="crispEdges"/><path d="M1435.11 458.42 L1258.76 1031.92 L1302.14 1043.51 Z" fill="url(#gw65)" shape-rendering="crispEdges"/><path d="M1435.11 458.42 L1302.14 1043.51 L1346.27 1051.81 Z" fill="url(#gw66)" shape-rendering="crispEdges"/><path d="M1435.11 458.42 L1346.27 1051.81 L1390.9 1056.79 Z" fill="url(#gw67)" shape-rendering="crispEdges"/><path d="M1435.11 458.42 L1390.9 1056.79 L1435.77 1058.42 Z" fill="url(#gw68)" shape-rendering="crispEdges"/><path d="M1435.11 458.42 L1435.77 1058.42 L1480.64 1056.69 Z" fill="url(#gw69)" shape-rendering="crispEdges"/><path d="M1435.11 458.42 L1480.64 1056.69 L1525.26 1051.61 Z" fill="url(#gw70)" shape-rendering="crispEdges"/><path d="M1435.11 458.42 L1525.26 1051.61 L1569.37 1043.21 Z" fill="url(#gw71)" shape-rendering="crispEdges"/><path d="M1435.11 458.42 L1569.37 1043.21 L1612.73 1031.53 Z" fill="url(#gw72)" shape-rendering="crispEdges"/><path d="M1435.11 458.42 L1612.73 1031.53 L1655.09 1016.64 Z" fill="url(#gw73)" shape-rendering="crispEdges"/><path d="M1435.11 458.42 L1655.09 1016.64 L1696.22 998.63 Z" fill="url(#gw74)" shape-rendering="crispEdges"/><path d="M1435.11 458.42 L1696.22 998.63 L1735.89 977.58 Z" fill="url(#gw75)" shape-rendering="crispEdges"/><path d="M1435.11 458.42 L1735.89 977.58 L1773.88 953.64 Z" fill="url(#gw76)" shape-rendering="crispEdges"/><path d="M1435.11 458.42 L1773.88 953.64 L1809.96 926.91 Z" fill="url(#gw77)" shape-rendering="crispEdges"/><path d="M1435.11 458.42 L1809.96 926.91 L1843.95 897.57 Z" fill="url(#gw78)" shape-rendering="crispEdges"/><path d="M1435.11 458.42 L1843.95 897.57 L1875.65 865.76 Z" fill="url(#gw79)" shape-rendering="crispEdges"/><path d="M1435.11 458.42 L1875.65 865.76 L1904.88 831.67 Z" fill="url(#gw80)" shape-rendering="crispEdges"/><path d="M1435.11 458.42 L1904.88 831.67 L1931.48 795.49 Z" fill="url(#gw81)" shape-rendering="crispEdges"/><path d="M1435.11 458.42 L1931.48 795.49 L1955.3 757.43 Z" fill="url(#gw82)" shape-rendering="crispEdges"/><path d="M1435.11 458.42 L1955.3 757.43 L1976.2 717.69 Z" fill="url(#gw83)" shape-rendering="crispEdges"/><path d="M1435.11 458.42 L1976.2 717.69 L1994.08 676.49 Z" fill="url(#gw84)" shape-rendering="crispEdges"/><path d="M1435.11 458.42 L1994.08 676.49 L2008.82 634.08 Z" fill="url(#gw85)" shape-rendering="crispEdges"/><path d="M1435.11 458.42 L2008.82 634.08 L2020.35 590.68 Z" fill="url(#gw86)" shape-rendering="crispEdges"/><path d="M1435.11 458.42 L2020.35 590.68 L2028.6 546.54 Z" fill="url(#gw87)" shape-rendering="crispEdges"/><path d="M1435.11 458.42 L2028.6 546.54 L2033.53 501.91 Z" fill="url(#gw88)" shape-rendering="crispEdges"/><path d="M1435.11 458.42 L2033.53 501.91 L2035.11 457.03 Z" fill="url(#gw89)" shape-rendering="crispEdges"/></g>
<rect x="1414.7" y="268" width="15.6" height="15.6" fill="none" stroke="#ffffff" stroke-width="1.7"/>
<rect x="1417.8" y="307.2" width="15.6" height="15.6" fill="none" stroke="#ffffff" stroke-width="1.7"/>
<rect x="1419.6" y="342.4" width="15.6" height="15.6" fill="none" stroke="#ffffff" stroke-width="1.7"/>
<rect x="1422.4" y="377" width="15.6" height="15.6" fill="none" stroke="#ffffff" stroke-width="1.7"/>
<rect x="1424" y="412.2" width="15.6" height="15.6" fill="none" stroke="#ffffff" stroke-width="1.7"/>
<rect x="1520" y="331.4" width="15.6" height="15.6" fill="none" stroke="#ffffff" stroke-width="1.7"/>
<rect x="1500.2" y="356.2" width="15.6" height="15.6" fill="none" stroke="#ffffff" stroke-width="1.7"/>
<rect x="1483" y="378.2" width="15.6" height="15.6" fill="none" stroke="#ffffff" stroke-width="1.7"/>
<rect x="1464.5" y="399.7" width="15.6" height="15.6" fill="none" stroke="#ffffff" stroke-width="1.7"/>
<rect x="1445.6" y="425.1" width="15.6" height="15.6" fill="none" stroke="#ffffff" stroke-width="1.7"/>
<rect x="1349.2" y="450" width="15.6" height="15.6" fill="none" stroke="#ffffff" stroke-width="1.7"/>
<rect x="1364.9" y="450" width="15.6" height="15.6" fill="none" stroke="#ffffff" stroke-width="1.7"/>
<rect x="1380.5" y="450" width="15.6" height="15.6" fill="none" stroke="#ffffff" stroke-width="1.7"/>
<rect x="1396.2" y="450" width="15.6" height="15.6" fill="none" stroke="#ffffff" stroke-width="1.7"/>
<rect x="1411" y="450" width="15.6" height="15.6" fill="none" stroke="#ffffff" stroke-width="1.7"/>
<rect x="1483" y="448.7" width="15.6" height="15.6" fill="none" stroke="#ffffff" stroke-width="1.7"/>
<rect x="1542.3" y="448.1" width="15.6" height="15.6" fill="none" stroke="#ffffff" stroke-width="1.7"/>
<rect x="1594.7" y="448.1" width="15.6" height="15.6" fill="none" stroke="#ffffff" stroke-width="1.7"/>
<rect x="1650.6" y="448.1" width="15.6" height="15.6" fill="none" stroke="#ffffff" stroke-width="1.7"/>
<rect x="1714.1" y="448.1" width="15.6" height="15.6" fill="none" stroke="#ffffff" stroke-width="1.7"/>
<rect x="1282.9" y="628.1" width="15.6" height="15.6" fill="none" stroke="#ffffff" stroke-width="1.7"/>
<rect x="1314.3" y="589.6" width="15.6" height="15.6" fill="none" stroke="#ffffff" stroke-width="1.7"/>
<rect x="1341.9" y="555.3" width="15.6" height="15.6" fill="none" stroke="#ffffff" stroke-width="1.7"/>
<rect x="1369.5" y="520.8" width="15.6" height="15.6" fill="none" stroke="#ffffff" stroke-width="1.7"/>
<rect x="1397.4" y="485.3" width="15.6" height="15.6" fill="none" stroke="#ffffff" stroke-width="1.7"/>
<rect x="1428.5" y="473.3" width="15.6" height="15.6" fill="none" stroke="#ffffff" stroke-width="1.7"/>
<rect x="1430" y="498.2" width="15.6" height="15.6" fill="none" stroke="#ffffff" stroke-width="1.7"/>
<rect x="1430" y="518.3" width="15.6" height="15.6" fill="none" stroke="#ffffff" stroke-width="1.7"/>
<rect x="1431.7" y="541.7" width="15.6" height="15.6" fill="none" stroke="#ffffff" stroke-width="1.7"/>
<rect x="1433.3" y="566" width="15.6" height="15.6" fill="none" stroke="#ffffff" stroke-width="1.7"/>
<rect x="1427.1" y="450" width="15.6" height="15.6" fill="none" stroke="#111111" stroke-width="2.2"/>
<circle cx="1421" cy="276" r="4.6" fill="#00b000" stroke="#111" stroke-width="1.5"/>
<circle cx="1424.3" cy="312" r="4.6" fill="#50b850" stroke="#111" stroke-width="1.5"/>
<circle cx="1425.6" cy="349" r="4.6" fill="#6ab86a" stroke="#111" stroke-width="1.5"/>
<circle cx="1429" cy="384.8" r="4.6" fill="#88b888" stroke="#111" stroke-width="1.5"/>
<circle cx="1431.8" cy="420.3" r="4.6" fill="#a0b8a0" stroke="#111" stroke-width="1.5"/>
<circle cx="1531" cy="341" r="4.6" fill="#c8c000" stroke="#111" stroke-width="1.5"/>
<circle cx="1510.7" cy="364" r="4.6" fill="#c8c050" stroke="#111" stroke-width="1.5"/>
<circle cx="1493.5" cy="384.8" r="4.6" fill="#c0bc70" stroke="#111" stroke-width="1.5"/>
<circle cx="1475.2" cy="407.7" r="4.6" fill="#c0bc88" stroke="#111" stroke-width="1.5"/>
<circle cx="1455" cy="432.9" r="4.6" fill="#c0c0a0" stroke="#111" stroke-width="1.5"/>
<circle cx="1352.8" cy="457.5" r="4.6" fill="#00b8b8" stroke="#111" stroke-width="1.5"/>
<circle cx="1369.9" cy="457.5" r="4.6" fill="#5ab4b4" stroke="#111" stroke-width="1.5"/>
<circle cx="1385.3" cy="457.5" r="4.6" fill="#7ab8b8" stroke="#111" stroke-width="1.5"/>
<circle cx="1402.5" cy="457.5" r="4.6" fill="#90bcbc" stroke="#111" stroke-width="1.5"/>
<circle cx="1417.8" cy="457.5" r="4.6" fill="#a8b8b8" stroke="#111" stroke-width="1.5"/>
<circle cx="1495.2" cy="457.5" r="4.6" fill="#c89090" stroke="#111" stroke-width="1.5"/>
<circle cx="1556.1" cy="457.4" r="4.6" fill="#c87878" stroke="#111" stroke-width="1.5"/>
<circle cx="1610.5" cy="455.9" r="4.6" fill="#c86060" stroke="#111" stroke-width="1.5"/>
<circle cx="1666.2" cy="455.9" r="4.6" fill="#c84848" stroke="#111" stroke-width="1.5"/>
<circle cx="1723.5" cy="455.9" r="4.6" fill="#c00000" stroke="#111" stroke-width="1.5"/>
<circle cx="1284.4" cy="640.5" r="4.6" fill="#0000c0" stroke="#111" stroke-width="1.5"/>
<circle cx="1315.4" cy="603.1" r="4.6" fill="#5050c0" stroke="#111" stroke-width="1.5"/>
<circle cx="1344.7" cy="566.3" r="4.6" fill="#7070c0" stroke="#111" stroke-width="1.5"/>
<circle cx="1374.4" cy="530.5" r="4.6" fill="#8888c0" stroke="#111" stroke-width="1.5"/>
<circle cx="1404.1" cy="493.5" r="4.6" fill="#a0a0c0" stroke="#111" stroke-width="1.5"/>
<circle cx="1436.3" cy="480.7" r="4.6" fill="#c0a0c0" stroke="#111" stroke-width="1.5"/>
<circle cx="1439.5" cy="506" r="4.6" fill="#c090c0" stroke="#111" stroke-width="1.5"/>
<circle cx="1441.1" cy="525.7" r="4.6" fill="#c078c0" stroke="#111" stroke-width="1.5"/>
<circle cx="1442.4" cy="550.6" r="4.6" fill="#c060c0" stroke="#111" stroke-width="1.5"/>
<circle cx="1444.3" cy="572.5" r="4.6" fill="#c000c0" stroke="#111" stroke-width="1.5"/>
<circle cx="1435" cy="457.5" r="4.6" fill="#ffffff" stroke="#111" stroke-width="1.5"/>
<rect x="1639" y="121" width="256" height="217" fill="#2e2e2e"/>
<foreignObject x="1643" y="125.3" width="248.5" height="209"><div style="width:248.5px;height:209px;background:conic-gradient(from 24.19deg at -399.09px 829.51px,rgb(166,255,0) 0deg,rgb(173,255,0) 0.98deg,rgb(180,255,0) 1.96deg,rgb(187,255,0) 2.94deg,rgb(194,255,0) 3.92deg,rgb(202,255,0) 4.9deg,rgb(209,255,0) 5.88deg,rgb(217,255,0) 6.86deg,rgb(225,255,0) 7.84deg,rgb(232,255,0) 8.82deg,rgb(241,255,0) 9.8deg,rgb(249,255,0) 10.78deg,rgb(255,253,0) 11.77deg,rgb(255,244,0) 12.75deg,rgb(255,236,0) 13.73deg,rgb(255,229,0) 14.71deg,rgb(255,221,0) 15.69deg,rgb(255,214,0) 16.67deg,rgb(255,207,0) 17.65deg,rgb(255,201,0) 18.63deg,rgb(255,194,0) 19.61deg,rgb(255,188,0) 20.59deg,rgb(255,182,0) 21.57deg,rgb(255,176,0) 22.55deg,rgb(255,171,0) 23.53deg);clip-path:polygon(0px 20.01px,248.5px 186.25px,248.5px 211px,-2px 211px)"></div></foreignObject>
<path d="M1643 146.31 L1891.5 312.55 L1891.5 334.3 L1643 334.3 Z" fill="url(#gInW)"/>
<foreignObject x="1643" y="125.3" width="248.5" height="209"><div style="width:248.5px;height:209px;background:conic-gradient(from 30.16deg at -1195.18px 1938.33px,rgb(90,153,0) 0deg,rgb(95,153,0) 0.47deg,rgb(100,153,0) 0.93deg,rgb(105,153,0) 1.4deg,rgb(109,153,0) 1.87deg,rgb(115,153,0) 2.33deg,rgb(120,153,0) 2.8deg,rgb(125,153,0) 3.27deg,rgb(131,153,0) 3.73deg,rgb(136,153,0) 4.2deg,rgb(142,153,0) 4.67deg,rgb(148,153,0) 5.13deg,rgb(153,152,0) 5.6deg,rgb(153,146,0) 6.07deg,rgb(153,140,0) 6.53deg,rgb(153,135,0) 7deg,rgb(153,130,0) 7.47deg,rgb(153,125,0) 7.93deg,rgb(153,120,0) 8.4deg,rgb(153,116,0) 8.86deg,rgb(153,111,0) 9.33deg,rgb(153,107,0) 9.8deg,rgb(153,103,0) 10.26deg,rgb(153,99,0) 10.73deg,rgb(153,96,0) 11.2deg);clip-path:polygon(-2px -2px,250.5px -2px,250.5px 187.25px,-2px 21.01px)"></div></foreignObject>
<rect x="1642.6" y="124.8" width="249.3" height="209.8" fill="none" stroke="#a4a4ac" stroke-width="1.3"/>
<rect x="1757.65" y="220.35" width="15.5" height="15.5" fill="none" stroke="#ffffff" stroke-width="1.7"/>
<circle cx="1779.2" cy="239.5" r="4.6" fill="#c8c000" stroke="#111" stroke-width="1.5"/>
<text x="24" y="786.7" font-size="34" fill="#f2f2f2" textLength="252.5" lengthAdjust="spacingAndGlyphs">Current Reading</text>
<text x="24.5" y="833.6" font-size="28" fill="#f2f2f2" textLength="119" lengthAdjust="spacingAndGlyphs">x: 0,4221</text>
<text x="24.5" y="880.5" font-size="28" fill="#f2f2f2" textLength="120" lengthAdjust="spacingAndGlyphs">y: 0,5028</text>
<text x="24.5" y="926" font-size="28" fill="#f2f2f2" textLength="112" lengthAdjust="spacingAndGlyphs">fL: 75,91</text>
<text x="24.5" y="973" font-size="28" fill="#f2f2f2" textLength="184" lengthAdjust="spacingAndGlyphs">cd/m²: 260,08</text>
<text x="541" y="755.6" font-size="15.5" fill="#e2e2e2" text-anchor="middle" textLength="94" lengthAdjust="spacingAndGlyphs">RGB Balance</text>
<rect x="415.4" y="762" width="285" height="205.5" fill="#232323"/>
<line x1="415.4" y1="783.7" x2="700.4" y2="783.7" stroke="#a8a8a8" stroke-width="1.6"/>
<line x1="409" y1="783.7" x2="415.4" y2="783.7" stroke="#a8a8a8" stroke-width="1.6"/>
<text x="408.8" y="790.2" font-size="17" fill="#e2e2e2" text-anchor="end" textLength="27.4" lengthAdjust="spacingAndGlyphs">104</text>
<line x1="415.4" y1="825.7" x2="700.4" y2="825.7" stroke="#a8a8a8" stroke-width="1.6"/>
<line x1="409" y1="825.7" x2="415.4" y2="825.7" stroke="#a8a8a8" stroke-width="1.6"/>
<text x="408.8" y="832.2" font-size="17" fill="#e2e2e2" text-anchor="end" textLength="27.4" lengthAdjust="spacingAndGlyphs">102</text>
<line x1="415.4" y1="865.9" x2="700.4" y2="865.9" stroke="#a8a8a8" stroke-width="1.6"/>
<line x1="409" y1="865.9" x2="415.4" y2="865.9" stroke="#a8a8a8" stroke-width="1.6"/>
<text x="408.8" y="872.4" font-size="17" fill="#e2e2e2" text-anchor="end" textLength="27.4" lengthAdjust="spacingAndGlyphs">100</text>
<line x1="415.4" y1="907.5" x2="700.4" y2="907.5" stroke="#a8a8a8" stroke-width="1.6"/>
<line x1="409" y1="907.5" x2="415.4" y2="907.5" stroke="#a8a8a8" stroke-width="1.6"/>
<text x="408.8" y="914" font-size="17" fill="#e2e2e2" text-anchor="end" textLength="18.6" lengthAdjust="spacingAndGlyphs">98</text>
<line x1="415.4" y1="947.6" x2="700.4" y2="947.6" stroke="#a8a8a8" stroke-width="1.6"/>
<line x1="409" y1="947.6" x2="415.4" y2="947.6" stroke="#a8a8a8" stroke-width="1.6"/>
<text x="408.8" y="954.1" font-size="17" fill="#e2e2e2" text-anchor="end" textLength="18.6" lengthAdjust="spacingAndGlyphs">96</text>
<line x1="415.4" y1="762" x2="700.4" y2="762" stroke="#a8a8a8" stroke-width="1.6"/>
<line x1="700.4" y1="762" x2="700.4" y2="974" stroke="#a8a8a8" stroke-width="1.6"/>
<line x1="415.4" y1="762" x2="415.4" y2="974" stroke="#a8a8a8" stroke-width="1.8"/>
<line x1="415.4" y1="967.5" x2="700.4" y2="967.5" stroke="#a8a8a8" stroke-width="1.8"/>
<text x="558" y="986.5" font-size="16" fill="#e2e2e2" text-anchor="middle" textLength="40.5" lengthAdjust="spacingAndGlyphs">100%</text>
<rect x="443.6" y="844.5" width="74.6" height="123" fill="#000"/>
<rect x="444.8" y="845.7" width="72.2" height="121.8" fill="url(#gRb)"/>
<rect x="518.2" y="867.4" width="76.1" height="100.1" fill="#000"/>
<rect x="519.4" y="868.6" width="73.7" height="98.9" fill="url(#gGb)"/>
<rect x="594.3" y="859.9" width="75.7" height="107.6" fill="#000"/>
<rect x="595.5" y="861.1" width="73.3" height="106.4" fill="url(#gBb)"/>
<rect x="723.5" y="732.8" width="832.5" height="233.5" fill="#141414"/>
<rect x="726" y="735" width="827.5" height="35.6" fill="url(#gHdr)"/>
<text x="1007.5" y="760.2" font-size="20" fill="#f0f0f0" text-anchor="middle" textLength="45" lengthAdjust="spacingAndGlyphs">20%</text>
<text x="1128.6" y="760.2" font-size="20" fill="#f0f0f0" text-anchor="middle" textLength="46" lengthAdjust="spacingAndGlyphs">40%</text>
<text x="1250" y="760.2" font-size="20" fill="#f0f0f0" text-anchor="middle" textLength="46" lengthAdjust="spacingAndGlyphs">60%</text>
<text x="1371.3" y="760.2" font-size="20" fill="#f0f0f0" text-anchor="middle" textLength="46" lengthAdjust="spacingAndGlyphs">80%</text>
<text x="1492.3" y="760.2" font-size="20" fill="#f0f0f0" text-anchor="middle" textLength="58.5" lengthAdjust="spacingAndGlyphs">100%</text>
<rect x="726" y="770.6" width="827.5" height="32.43" fill="#3e3e3e"/>
<text x="746" y="794" font-size="20.5" fill="#f0f0f0" font-weight="bold" textLength="98" lengthAdjust="spacingAndGlyphs">x: CIE31</text>
<text x="954" y="794" font-size="20.5" fill="#f0f0f0" textLength="78" lengthAdjust="spacingAndGlyphs">0,3362</text>
<text x="1075.8" y="794" font-size="20.5" fill="#f0f0f0" textLength="78" lengthAdjust="spacingAndGlyphs">0,3588</text>
<text x="1196.6" y="794" font-size="20.5" fill="#f0f0f0" textLength="78" lengthAdjust="spacingAndGlyphs">0,3805</text>
<text x="1318" y="794" font-size="20.5" fill="#f0f0f0" textLength="78" lengthAdjust="spacingAndGlyphs">0,4005</text>
<text x="1439" y="794" font-size="20.5" fill="#f0f0f0" textLength="78" lengthAdjust="spacingAndGlyphs">0,4221</text>
<rect x="726" y="803.03" width="827.5" height="32.43" fill="#7d7d7d"/>
<text x="746" y="826.43" font-size="20.5" fill="#f0f0f0" font-weight="bold" textLength="97.4" lengthAdjust="spacingAndGlyphs">y: CIE31</text>
<text x="954" y="826.43" font-size="20.5" fill="#f0f0f0" textLength="78" lengthAdjust="spacingAndGlyphs">0,3653</text>
<text x="1075.8" y="826.43" font-size="20.5" fill="#f0f0f0" textLength="78" lengthAdjust="spacingAndGlyphs">0,4015</text>
<text x="1196.6" y="826.43" font-size="20.5" fill="#f0f0f0" textLength="78" lengthAdjust="spacingAndGlyphs">0,4362</text>
<text x="1318" y="826.43" font-size="20.5" fill="#f0f0f0" textLength="78" lengthAdjust="spacingAndGlyphs">0,4684</text>
<text x="1439" y="826.43" font-size="20.5" fill="#f0f0f0" textLength="78" lengthAdjust="spacingAndGlyphs">0,5028</text>
<rect x="726" y="835.47" width="827.5" height="32.43" fill="#3e3e3e"/>
<text x="746" y="858.87" font-size="20.5" fill="#f0f0f0" font-weight="bold" textLength="15.5" lengthAdjust="spacingAndGlyphs">Y</text>
<text x="954" y="858.87" font-size="20.5" fill="#f0f0f0" textLength="107" lengthAdjust="spacingAndGlyphs">272,7417</text>
<text x="1075.8" y="858.87" font-size="20.5" fill="#f0f0f0" textLength="107" lengthAdjust="spacingAndGlyphs">268,5201</text>
<text x="1196.6" y="858.87" font-size="20.5" fill="#f0f0f0" textLength="107" lengthAdjust="spacingAndGlyphs">265,2205</text>
<text x="1318" y="858.87" font-size="20.5" fill="#f0f0f0" textLength="107" lengthAdjust="spacingAndGlyphs">262,6130</text>
<text x="1439" y="858.87" font-size="20.5" fill="#f0f0f0" textLength="107" lengthAdjust="spacingAndGlyphs">260,0776</text>
<rect x="726" y="867.9" width="827.5" height="32.43" fill="#7d7d7d"/>
<text x="746" y="891.3" font-size="20.5" fill="#f0f0f0" font-weight="bold" textLength="177" lengthAdjust="spacingAndGlyphs">Target x:CIE31</text>
<text x="954" y="891.3" font-size="20.5" fill="#f0f0f0" textLength="78" lengthAdjust="spacingAndGlyphs">0,3344</text>
<text x="1075.8" y="891.3" font-size="20.5" fill="#f0f0f0" textLength="78" lengthAdjust="spacingAndGlyphs">0,3564</text>
<text x="1196.6" y="891.3" font-size="20.5" fill="#f0f0f0" textLength="78" lengthAdjust="spacingAndGlyphs">0,3773</text>
<text x="1318" y="891.3" font-size="20.5" fill="#f0f0f0" textLength="78" lengthAdjust="spacingAndGlyphs">0,3969</text>
<text x="1439" y="891.3" font-size="20.5" fill="#f0f0f0" textLength="78" lengthAdjust="spacingAndGlyphs">0,4193</text>
<rect x="726" y="900.33" width="827.5" height="32.43" fill="#3e3e3e"/>
<text x="746" y="923.73" font-size="20.5" fill="#f0f0f0" font-weight="bold" textLength="177" lengthAdjust="spacingAndGlyphs">Target y:CIE31</text>
<text x="954" y="923.73" font-size="20.5" fill="#f0f0f0" textLength="78" lengthAdjust="spacingAndGlyphs">0,3648</text>
<text x="1075.8" y="923.73" font-size="20.5" fill="#f0f0f0" textLength="78" lengthAdjust="spacingAndGlyphs">0,4013</text>
<text x="1196.6" y="923.73" font-size="20.5" fill="#f0f0f0" textLength="78" lengthAdjust="spacingAndGlyphs">0,4358</text>
<text x="1318" y="923.73" font-size="20.5" fill="#f0f0f0" textLength="78" lengthAdjust="spacingAndGlyphs">0,4682</text>
<text x="1439" y="923.73" font-size="20.5" fill="#f0f0f0" textLength="78" lengthAdjust="spacingAndGlyphs">0,5053</text>
<rect x="726" y="932.77" width="827.5" height="32.43" fill="#7d7d7d"/>
<text x="746" y="956.17" font-size="20.5" fill="#f0f0f0" font-weight="bold" textLength="103.4" lengthAdjust="spacingAndGlyphs">Target Y</text>
<text x="954" y="956.17" font-size="20.5" fill="#f0f0f0" textLength="107" lengthAdjust="spacingAndGlyphs">272,8358</text>
<text x="1075.8" y="956.17" font-size="20.5" fill="#f0f0f0" textLength="107" lengthAdjust="spacingAndGlyphs">268,0468</text>
<text x="1196.6" y="956.17" font-size="20.5" fill="#f0f0f0" textLength="107" lengthAdjust="spacingAndGlyphs">264,3671</text>
<text x="1318" y="956.17" font-size="20.5" fill="#f0f0f0" textLength="107" lengthAdjust="spacingAndGlyphs">261,4792</text>
<text x="1439" y="956.17" font-size="20.5" fill="#f0f0f0" textLength="107" lengthAdjust="spacingAndGlyphs">258,6873</text>
<rect x="0" y="995.4" width="1920" height="48.6" fill="#2a2a2a"/>
<rect x="607" y="997.5" width="1313" height="46.5" fill="url(#gBot)"/>
<rect x="1" y="997.5" width="33" height="47" rx="3" fill="url(#gTile)"/>
<circle cx="17.5" cy="1004.5" r="5.5" fill="#6a6a6a"/>
<path d="M14.2 1006 L17.5 1002.6 L20.8 1006 Z" fill="#111"/>
<rect x="4.8" y="1017.5" width="26" height="22.5" rx="2.5" fill="#ffff00" stroke="#555577" stroke-width="0.8"/>
<rect x="39" y="997.5" width="112" height="47" rx="3" fill="url(#gTile)"/>
<rect x="43" y="1001.5" width="105" height="27" rx="2.5" fill="#c0c0a0" stroke="#8a8a7a" stroke-width="1"/>
<text x="95" y="1040.5" font-size="7.5" fill="#2a2a2a" text-anchor="middle" font-weight="bold">20%</text>
<rect x="153" y="997.5" width="112" height="47" rx="3" fill="url(#gTile)"/>
<rect x="157" y="1001.5" width="105" height="27" rx="2.5" fill="#c2c086" stroke="#8a8a7a" stroke-width="1"/>
<text x="209" y="1040.5" font-size="7.5" fill="#2a2a2a" text-anchor="middle" font-weight="bold">40%</text>
<rect x="267" y="997.5" width="112" height="47" rx="3" fill="url(#gTile)"/>
<rect x="271" y="1001.5" width="105" height="27" rx="2.5" fill="#c3c06c" stroke="#8a8a7a" stroke-width="1"/>
<text x="323" y="1040.5" font-size="7.5" fill="#2a2a2a" text-anchor="middle" font-weight="bold">60%</text>
<rect x="381" y="997.5" width="112" height="47" rx="3" fill="url(#gTile)"/>
<rect x="385" y="1001.5" width="105" height="27" rx="2.5" fill="#c1bc4c" stroke="#8a8a7a" stroke-width="1"/>
<text x="437" y="1040.5" font-size="7.5" fill="#2a2a2a" text-anchor="middle" font-weight="bold">80%</text>
<rect x="495" y="997.5" width="112" height="47" rx="3" fill="url(#gSel)"/>
<rect x="498.5" y="1001" width="105.5" height="27.5" rx="2.5" fill="#c3bf00" stroke="#1a1a24" stroke-width="1"/>
<text x="551" y="1040.5" font-size="7.5" fill="#f0f0f0" text-anchor="middle" font-weight="bold">100%</text>
<rect x="1677.6" y="997.4" width="35.6" height="47" rx="2.5" fill="url(#gCtl)"/>
<line x1="1677.6" y1="1011.5" x2="1713.2" y2="1011.5" stroke="#666" stroke-width="0.8"/>
<circle cx="1695.4" cy="1003.8" r="5" fill="url(#gCtlC)"/>
<path d="M1692.5 1005.2 L1695.4 1002.2 L1698.3 1005.2 Z" fill="#222"/>
<rect x="1684.4" y="1016.3" width="22" height="21.5" rx="2.5" fill="#c8c8c8" stroke="#222" stroke-width="2"/>
<rect x="1688.5" y="1022" width="13.5" height="10" fill="#000"/>
<rect x="1714.8" y="997.4" width="169.2" height="22.1" fill="url(#gCtl)"/>
<line x1="1748.64" y1="997.5" x2="1748.64" y2="1019.5" stroke="#555" stroke-width="0.8"/>
<line x1="1782.48" y1="997.5" x2="1782.48" y2="1019.5" stroke="#555" stroke-width="0.8"/>
<line x1="1816.32" y1="997.5" x2="1816.32" y2="1019.5" stroke="#555" stroke-width="0.8"/>
<line x1="1850.16" y1="997.5" x2="1850.16" y2="1019.5" stroke="#555" stroke-width="0.8"/>
<circle cx="1731.72" cy="1008.5" r="7.2" fill="url(#gCtlC)"/>
<circle cx="1765.56" cy="1008.5" r="7.2" fill="url(#gCtlC)"/>
<circle cx="1799.4" cy="1008.5" r="7.2" fill="url(#gCtlC)"/>
<circle cx="1833.24" cy="1008.5" r="7.2" fill="url(#gCtlC)"/>
<circle cx="1867.08" cy="1008.5" r="7.2" fill="url(#gCtlC)"/>
<rect x="1728.92" y="1005.7" width="5.6" height="5.6" fill="#222"/>
<path d="M1763.36 1005 L1768.96 1008.7 L1763.36 1012.4 Z" fill="#222"/>
<path d="M1796.4 1004.5 H1794.9 V1012.5 H1796.4 M1802.4 1004.5 H1803.9 V1012.5 H1802.4" fill="none" stroke="#333" stroke-width="1.4"/>
<path d="M1797.2 1008.5 H1801.6" stroke="#333" stroke-width="1" stroke-dasharray="1 0.8"/>
<circle cx="1830.84" cy="1008.5" r="2.3" fill="none" stroke="#333" stroke-width="1.4"/><circle cx="1835.64" cy="1008.5" r="2.3" fill="none" stroke="#333" stroke-width="1.4"/>
<path d="M1863.48 1007.8 A3.7 3.7 0 0 1 1869.88 1005.8 M1870.68 1009.2 A3.7 3.7 0 0 1 1864.28 1011.2" fill="none" stroke="#333" stroke-width="1.5"/>
<path d="M1868.08 1004.2 L1871.28 1004.8 L1870.68 1008 Z M1866.08 1012.8 L1862.88 1012.2 L1863.48 1009 Z" fill="#333"/>
<rect x="1884" y="997.4" width="34" height="22.1" fill="#3a3a3a"/>
<circle cx="1896" cy="1008.5" r="7" fill="#2e2e2e"/>
<rect x="1714.8" y="1020.9" width="203.2" height="23.1" rx="2" fill="url(#gCtl)"/>
<line x1="1816.4" y1="1021" x2="1816.4" y2="1044" stroke="#666" stroke-width="0.8"/>
<circle cx="1737.8" cy="1032.4" r="7.4" fill="url(#gCtlC)"/>
<circle cx="1897.6" cy="1032.4" r="7.4" fill="url(#gCtlC)"/>
<text x="1737.8" y="1036.2" font-size="12" fill="#333" text-anchor="middle" font-weight="bold">«</text>
<text x="1897.6" y="1036.2" font-size="12" fill="#333" text-anchor="middle" font-weight="bold">»</text>
<text x="1777.5" y="1039" font-size="16.5" fill="#262626" text-anchor="middle" textLength="38" lengthAdjust="spacingAndGlyphs">Back</text>
<text x="1857" y="1039" font-size="16.5" fill="#262626" text-anchor="middle" textLength="39" lengthAdjust="spacingAndGlyphs">Next</text>
<rect x="1914" y="66" width="6" height="929" fill="url(#gEdge)"/>
</svg>
</body></html>
